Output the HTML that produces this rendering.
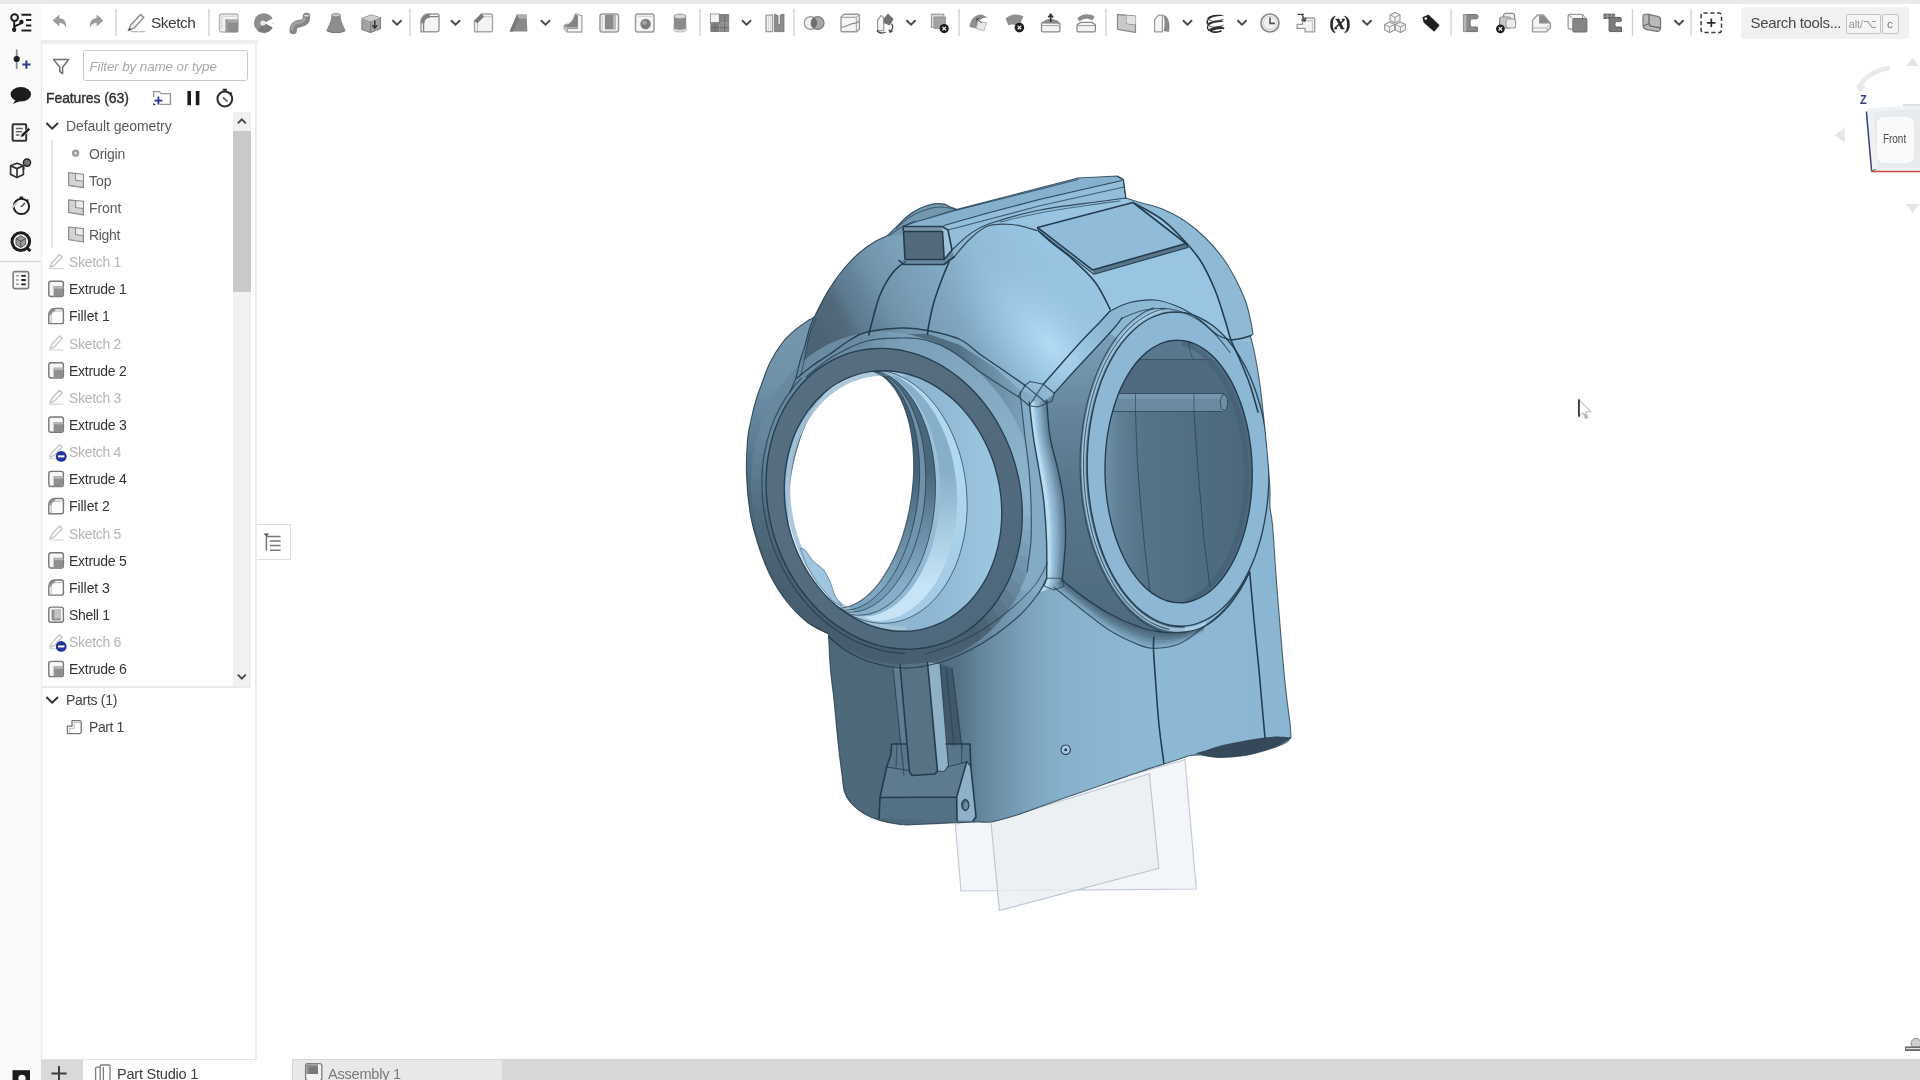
<!DOCTYPE html>
<html lang="en"><head><meta charset="utf-8"><title>Part Studio 1</title>
<style>
html,body{margin:0;padding:0;width:1920px;height:1080px;overflow:hidden;background:#fff;
 font-family:"Liberation Sans",sans-serif;color:#3b3b3b;}
*{box-sizing:border-box;}
.abs{position:absolute;}
#topstrip{position:absolute;left:0;top:0;width:1920px;height:5px;background:linear-gradient(#e9e9e9 0,#e9e9e9 70%,#f4f4f4 100%);}
#sidebar{position:absolute;left:0;top:4px;width:41px;height:1076px;background:#fafafa;}
#toolbar{position:absolute;left:41px;top:4px;width:1879px;height:38px;background:#fff;}
#tbshadow{position:absolute;left:41px;top:41px;width:1879px;height:3px;background:linear-gradient(#e9e9e9,#f6f6f6 60%,#fff);}
#panel{position:absolute;left:41px;top:44px;width:216px;height:1016px;background:#fff;border-left:1px solid #ededed;border-right:2px solid #ececec;}
#tabs{position:absolute;left:41px;top:1059px;width:1879px;height:21px;background:#d8d8d8;}
.t{position:absolute;white-space:nowrap;font-size:14px;line-height:16px;transform-origin:0 50%;}
.row{position:absolute;left:0;height:27px;}
.g{color:#b4b4b4;}
.m{color:#5a5a5a;}
.d{color:#333;}
.sep{position:absolute;top:7px;width:1px;height:26px;background:#d6d6d6;}
.ic{position:absolute;overflow:visible;}
.t{filter:blur(.38px);}
svg.abs{filter:blur(.38px);}
#model{filter:none;}/*blurfx*/
</style></head><body>
<div id="topstrip"></div>
<div id="sidebar"></div>
<div class="abs" style="left:41px;top:4px;width:1px;height:1076px;background:#ebebeb"></div>
<svg class="abs" style="left:0;top:0" width="42" height="1080" viewBox="0 0 42 1080" fill="none">
 <!-- versions / branch icon -->
 <g stroke="#1f1f1f" stroke-width="2" stroke-linecap="round">
  <circle cx="14.6" cy="17.6" r="3.4" fill="#fafafa"/>
  <path d="M14.2 21.2V29.5M14.4 27.5C14.6 24.5 20.5 25.5 21.3 22.4"/>
  <circle cx="14.2" cy="29.8" r="1.2" fill="#1f1f1f"/><circle cx="21.4" cy="22" r="1.2" fill="#1f1f1f"/>
  <path d="M21.5 14.7H31.3M26 20.1H31.3M26 25.6H31.3M21.5 30.6H31.3" stroke-linecap="butt"/>
 </g>
 <!-- insert point icon -->
 <path d="M16.7 49.5V69" stroke="#8c8c8c" stroke-width="1.8"/>
 <circle cx="16.7" cy="59" r="3.1" fill="#1f1f1f"/>
 <path d="M22.3 64.6H30.5M26.4 60.5V68.7" stroke="#2c3a8f" stroke-width="2"/>
 <!-- comment bubble -->
 <ellipse cx="20.8" cy="94.3" rx="10.2" ry="7.2" fill="#1c1c1c"/>
 <path d="M16.5 99L12.8 104L21.5 100.5Z" fill="#1c1c1c"/>
 <!-- notes doc with pencil -->
 <path d="M13.6 124.2H25.2a1 1 0 0 1 1 1V139.8a1 1 0 0 1-1 1H13.6a1 1 0 0 1-1-1V125.2a1 1 0 0 1 1-1Z" stroke="#333" stroke-width="2"/>
 <path d="M15.8 128.5H23M15.8 131.8H22M15.8 135H19.5" stroke="#666" stroke-width="1.4"/>
 <path d="M20.3 137.5L21.3 134.2L28.3 127.6L30.3 129.6L23.4 136.5Z" fill="#1c1c1c" stroke="#fafafa" stroke-width=".6"/>
 <!-- cube with question -->
 <path d="M17 163.2L23.4 165.8V174.4L17 177.6L10.6 174.4V165.8Z M10.6 165.8L17 168.6L23.4 165.8M17 168.6V177.6" stroke="#333" stroke-width="1.7" stroke-linejoin="round"/>
 <circle cx="27" cy="162.6" r="3.6" fill="#777" stroke="#222" stroke-width="1.4"/>
 <path d="M24.3 167.3L22.8 170" stroke="#333" stroke-width="1.6"/>
 <!-- stopwatch -->
 <circle cx="21.4" cy="206.4" r="7.7" stroke="#1f1f1f" stroke-width="2"/>
 <path d="M19.6 197.3H23.2M21.4 197.5V199M26.9 199.6L28.2 200.9" stroke="#1f1f1f" stroke-width="1.8"/>
 <path d="M21 207L25 203" stroke="#555" stroke-width="1.6"/>
 <path d="M12 208L16.5 203" stroke="#c8c8c8" stroke-width="2.2"/>
 <!-- search cube -->
 <circle cx="20.8" cy="241.6" r="8.8" stroke="#1c1c1c" stroke-width="3" fill="#fafafa"/>
 <path d="M27 248L30.4 251" stroke="#1c1c1c" stroke-width="3"/>
 <path d="M20.8 235.8L25.6 238.5V244.5L20.8 247.4L16 244.5V238.5Z" fill="#9a9a9a" stroke="#555" stroke-width="1"/>
 <path d="M16 238.5L20.8 241.3L25.6 238.5M20.8 241.3V247.4" stroke="#444" stroke-width=".9"/>
 <!-- divider -->
 <path d="M0 261.5H41" stroke="#dcdcdc" stroke-width="1.4"/>
 <!-- list icon -->
 <rect x="13.2" y="271.6" width="15.4" height="17" rx="1.6" stroke="#808080" stroke-width="1.7" fill="#fafafa"/>
 <path d="M21.3 275.8H25.8M21.3 280H25.8M21.3 284.3H25.8" stroke="#222" stroke-width="1.8"/>
 <path d="M16 275.8H18.8M16 280H18.8M16 284.3H18.8" stroke="#999" stroke-width="1.4"/>
 <!-- camera bottom -->
 <path d="M12.5 1070.2H30V1080H12.5Z" fill="#1c1c1c"/>
 <circle cx="22" cy="1078.4" r="4.3" fill="#fafafa" stroke="#1c1c1c" stroke-width="1.3"/>
</svg>
<div id="toolbar"></div>
<svg class="abs" style="left:0;top:0" width="1920" height="46" viewBox="0 0 1920 46" fill="none">
<path d="M52.6 20.4L59.4 14.6V18.2C64.6 18.2 66.6 22 66 28.4C64.8 24.4 63 23 59.4 23V26.4Z" fill="#9b9b9b"/>
<path d="M103.4 20.4L96.6 14.6V18.2C91.4 18.2 89.4 22 90 28.4C91.2 24.4 93 23 96.6 23V26.4Z" fill="#9b9b9b"/>
<path d="M128.4 30.6L130.6 25.2L140.6 14.6L143.8 17.4L134 28.2Z" stroke="#8a8a8a" stroke-width="1.4" fill="#fafafa" stroke-linejoin="round"/><path d="M128.4 30.6L129.6 27.6L131.6 29.4Z" fill="#555"/><path d="M131 31.6H145" stroke="#bdbdbd" stroke-width="1.4"/>
<path d="M116 9V36" stroke="#d2d2d2" stroke-width="1.4"/>
<path d="M209 9V36" stroke="#d2d2d2" stroke-width="1.4"/>
<g transform="translate(217,11)"><rect x="2.5" y="3" width="18.5" height="18" rx="2.2" fill="#f4f4f4" stroke="#b4b4b4" stroke-width="1.3"/><path d="M5 5.2H18.8M4.8 5.2V18.5" stroke="#d9d9d9" stroke-width="1.4"/><rect x="8.6" y="8.6" width="12.6" height="12.6" fill="#8d8d8d"/><rect x="8.6" y="8.6" width="12.6" height="3" fill="#a9a9a9"/><rect x="8.6" y="8.6" width="2.2" height="12.6" fill="#9c9c9c"/></g>
<g transform="translate(252,11)"><path d="M12 12L20.6 7.6A9.8 9.8 0 1 0 20.6 16.4Z" fill="#8d8d8d"/><path d="M12 12L20.6 16.4A9.8 9.8 0 0 1 6 19.7Z" fill="#7a7a7a"/><circle cx="11" cy="12" r="2.6" fill="#e9e9e9"/><path d="M13 12H22" stroke="#cfcfcf" stroke-width="1.2" stroke-dasharray="2 1.4"/><path d="M12 12L19 9.5V14.5Z" fill="#fff"/></g>
<g transform="translate(288,11)"><path d="M5.2 19.5C5.2 8 18.5 17 18.5 5.5" stroke="#858585" stroke-width="7.4" fill="none" stroke-linecap="round"/><path d="M5.2 19.5C5.2 8 18.5 17 18.5 5.5" stroke="#a3a3a3" stroke-width="2.4" fill="none" stroke-linecap="round" transform="translate(-1.2,-1)"/><ellipse cx="18.6" cy="4.6" rx="3.2" ry="1.7" fill="#d2d2d2" stroke="#6f6f6f" stroke-width=".8"/></g>
<g transform="translate(324,11)"><path d="M7.4 4.2C7.4 10 4.6 14 2.6 19.4C5 22 19 22 21.4 19.4C19.4 14 16.6 10 16.6 4.2Z" fill="#8d8d8d"/><ellipse cx="12" cy="4.3" rx="4.6" ry="1.8" fill="#c4c4c4" stroke="#6f6f6f" stroke-width=".7"/><path d="M2.6 19.4C5 22.4 19 22.4 21.4 19.4" stroke="#6f6f6f" stroke-width="1" fill="none"/></g>
<g transform="translate(359,11)"><path d="M3 7.5L12 4L21.5 6.8V17.5L11.5 21.6L3 18.4Z" fill="#a6a6a6" stroke="#7c7c7c" stroke-width="1.1" stroke-linejoin="round"/><path d="M3 7.5L11.6 10.4L21.5 6.8M11.6 10.4V21.6" stroke="#7c7c7c" stroke-width="1" fill="none"/><path d="M3 7.5L12 4L21.5 6.8L11.6 10.4Z" fill="#cfcfcf"/><path d="M15.8 9.5V16.4M13.4 14.2L15.8 17L18.2 14.2" stroke="#333" stroke-width="1.5" fill="none"/></g>
<path d="M392.4 20.2L397 24.6L401.6 20.2" stroke="#4a4a4a" stroke-width="1.9" fill="none"/>
<path d="M410 9V36" stroke="#d2d2d2" stroke-width="1.4"/>
<g transform="translate(418,11)"><path d="M3 20.8V10.5A7.5 7.5 0 0 1 10.5 3H19a2 2 0 0 1 2 2V18.8a2 2 0 0 1-2 2Z" fill="#f4f4f4" stroke="#9a9a9a" stroke-width="1.5"/><path d="M5.6 20V11.5A6 6 0 0 1 11.6 5.6H20.5" stroke="#7f7f7f" stroke-width="1.3" fill="none"/><path d="M2.6 12.4A9 9 0 0 1 11.6 2.8L12 6.4A5.6 5.6 0 0 0 6.4 12Z" fill="#808080"/></g>
<path d="M450.9 20.2L455.5 24.6L460.1 20.2" stroke="#4a4a4a" stroke-width="1.9" fill="none"/>
<g transform="translate(471.5,11)"><path d="M3 20.8V10L10 3H19a2 2 0 0 1 2 2V18.8a2 2 0 0 1-2 2Z" fill="#f4f4f4" stroke="#a8a8a8" stroke-width="1.4" stroke-linejoin="round"/><path d="M6 20V11.6L11.8 5.8H20.5" stroke="#bdbdbd" stroke-width="1.1" fill="none"/><path d="M2.6 10L10 2.6L12.6 5.4L5.8 12.2Z" fill="#7a7a7a"/></g>
<g transform="translate(508,11)"><path d="M9 3.4H18.6L19.4 20.6H1.6Z" fill="#8a8a8a"/><path d="M9 3.4H18.6L18.8 7.4H7.2Z" fill="#b0b0b0"/><path d="M9 3.4L1.6 20.6H5.2L11 7.4Z" fill="#7a7a7a"/></g>
<path d="M540.9 20.2L545.5 24.6L550.1 20.2" stroke="#4a4a4a" stroke-width="1.9" fill="none"/>
<g transform="translate(561.5,11)"><path d="M13.4 2.6L20.4 4.6V21H5.8L2.6 17.6V14.6L5.6 12.6" fill="#f4f4f4" stroke="#a8a8a8" stroke-width="1.3" stroke-linejoin="round"/><path d="M13 3.4C12.4 9 8.4 12.6 3.4 14.6L6.2 16.6H16.4V4.4Z" fill="#838383"/><path d="M2.8 14.8L5.8 17.4H16.6M5.8 17.4V20.6" stroke="#9a9a9a" stroke-width="1.1" fill="none"/></g>
<g transform="translate(597.5,11)"><rect x="2.5" y="3" width="18.5" height="18" rx="2.2" fill="#f4f4f4" stroke="#9a9a9a" stroke-width="1.5"/><rect x="7.4" y="3.8" width="10.6" height="14.6" fill="#8a8a8a"/><rect x="15.6" y="3.8" width="2.4" height="14.6" fill="#b9b9b9"/><path d="M4.8 4.6V19.8M7.4 18.8H18.4" stroke="#cfcfcf" stroke-width="1.2"/></g>
<g transform="translate(633,11)"><rect x="2.5" y="3" width="18.5" height="18" rx="2.2" fill="#f4f4f4" stroke="#9a9a9a" stroke-width="1.5"/><path d="M5 5.4H19" stroke="#d5d5d5" stroke-width="1.3"/><circle cx="12.6" cy="13" r="5.2" fill="#7d7d7d"/><circle cx="11.4" cy="11.8" r="2.2" fill="#a9a9a9"/></g>
<g transform="translate(668,11)"><path d="M5.8 5.4V18.6C5.8 21.6 18.2 21.6 18.2 18.6V5.4Z" fill="#8a8a8a"/><ellipse cx="12" cy="5.4" rx="6.2" ry="2.3" fill="#d9d9d9" stroke="#8a8a8a" stroke-width=".8"/><path d="M5.8 16.6C5.8 19.6 18.2 19.6 18.2 16.6V18.6C18.2 21.8 5.8 21.8 5.8 18.6Z" fill="#ededed" stroke="#a0a0a0" stroke-width=".7"/></g>
<path d="M700 9V36" stroke="#d2d2d2" stroke-width="1.4"/>
<g transform="translate(708,11)"><rect x="2.4" y="3" width="9" height="8.6" fill="#f4f4f4" stroke="#9a9a9a" stroke-width="1"/><rect x="12" y="3" width="9.2" height="8.6" fill="#858585"/><rect x="2.4" y="12.2" width="9" height="8.8" fill="#7d7d7d"/><rect x="12" y="12.2" width="9.2" height="8.8" fill="#8f8f8f"/><path d="M2.4 11.9H21.2M11.7 3V21M2.4 16.6H21.2M16.6 3V21M7 12V21" stroke="#5c5c5c" stroke-width=".8" stroke-opacity=".7"/></g>
<path d="M741.9 20.2L746.5 24.6L751.1 20.2" stroke="#4a4a4a" stroke-width="1.9" fill="none"/>
<g transform="translate(763,11)"><path d="M3 4.2H9.6V20.6H3Z" fill="#f4f4f4" stroke="#9a9a9a" stroke-width="1.3"/><path d="M11.6 3.2L15 4.6V13L17.2 14V4L21 3.2V20.6H11.6Z" fill="#8d8d8d" stroke="#6f6f6f" stroke-width=".8"/><path d="M5.4 5V19.6M7.4 5V19.6" stroke="#cfcfcf" stroke-width=".9"/></g>
<path d="M794 9V36" stroke="#d2d2d2" stroke-width="1.4"/>
<g transform="translate(802,11)"><circle cx="8.6" cy="12" r="6.4" fill="#f0f0f0" stroke="#9a9a9a" stroke-width="1.3"/><circle cx="15.6" cy="12" r="6.4" fill="#a6a6a6" stroke="#808080" stroke-width="1.3"/><path d="M12.1 6.6A6.4 6.4 0 0 1 12.1 17.4A6.4 6.4 0 0 1 12.1 6.6Z" fill="#6e6e6e"/></g>
<g transform="translate(838,11)"><path d="M3 6L6 3.2H20a1.4 1.4 0 0 1 1.4 1.4V18L18.6 20.8H4.4A1.4 1.4 0 0 1 3 19.4Z" fill="#f4f4f4" stroke="#9a9a9a" stroke-width="1.4" stroke-linejoin="round"/><path d="M3.4 6.4H18.4V20.4M18.4 6.4L21 3.8" stroke="#a9a9a9" stroke-width="1.1" fill="none"/><path d="M3.4 16.2C9 16.4 12 11.6 18.4 12.2L21.2 10" stroke="#8a8a8a" stroke-width="1.1" fill="none"/></g>
<g transform="translate(873,11)"><path d="M4.6 9.2L8.2 4.4L10.8 6.6V19.6H4.6Z" fill="#f4f4f4" stroke="#9a9a9a" stroke-width="1.2" stroke-linejoin="round"/><path d="M10.4 7.8L15 2.6L20.6 8L16.8 14.4L10.6 12Z" fill="#727272"/><path d="M4 19.5C6 22.5 10 22.5 12.6 21M18.6 12.6C20.4 15.4 19.6 18.6 17.4 20.4" stroke="#4c4c4c" stroke-width="1.4" fill="none"/><path d="M16 18.6L17 21.2L19.6 20.2" stroke="#4c4c4c" stroke-width="1.3" fill="none"/></g>
<path d="M906.4 20.2L911 24.6L915.6 20.2" stroke="#4a4a4a" stroke-width="1.9" fill="none"/>
<g transform="translate(928,11)"><rect x="3.4" y="3.2" width="12.4" height="13" fill="#d9d9d9" stroke="#9a9a9a" stroke-width="1.1"/><rect x="6" y="6" width="11.4" height="11.4" fill="#a2a2a2" stroke="#8a8a8a" stroke-width=".8"/><circle cx="16.2" cy="17.6" r="4.6" fill="#1e1e1e"/><path d="M14.5 15.900000000000002L17.9 19.3M17.9 15.900000000000002L14.5 19.3" stroke="#f3f3f3" stroke-width="1.3"/></g>
<path d="M959 9V36" stroke="#d2d2d2" stroke-width="1.4"/>
<g transform="translate(967,11)"><path d="M2.6 16C3 8 8.4 3 15 3.4L20.6 6.6C14 6.4 10 11 9.4 17.4Z" fill="#8f8f8f"/><path d="M11 10.6L19.6 11.8L17 19.8L9.6 17.6Z" fill="#e9e9e9" stroke="#b4b4b4" stroke-width=".9"/><path d="M10.6 8.4L15.4 12.6" stroke="#fff" stroke-width="2"/><path d="M9.6 7.6L15 12.2M9.6 7.6L10 10.6M9.6 7.6L12.6 7.6" stroke="#555" stroke-width="1.1" fill="none"/></g>
<g transform="translate(1003,11)"><path d="M2.6 7.6C8 2.6 14.6 2.4 20.6 5.6L15.6 15.6C11 13 7.4 13 5.4 14.4Z" fill="#8f8f8f"/><circle cx="16.4" cy="16.6" r="4.8" fill="#1e1e1e"/><path d="M14.7 14.900000000000002L18.099999999999998 18.3M18.099999999999998 14.900000000000002L14.7 18.3" stroke="#f3f3f3" stroke-width="1.3"/></g>
<g transform="translate(1038.5,11)"><path d="M3 12.4L7.6 9.6H17.8L21.4 12.6V19.6A1.2 1.2 0 0 1 20.2 20.8H4.2A1.2 1.2 0 0 1 3 19.6Z" fill="#f4f4f4" stroke="#8a8a8a" stroke-width="1.3" stroke-linejoin="round"/><path d="M3.4 14.6H21" stroke="#a0a0a0" stroke-width="1"/><path d="M4 12.6L8 8.6C11 7 15 7.4 17.6 9.6L21 12.8Z" fill="#8c8c8c"/><path d="M12.2 11V4M9.8 6.4L12.2 3.4L14.6 6.4" stroke="#333" stroke-width="1.6" fill="none"/></g>
<g transform="translate(1074,11)"><path d="M3.4 7.4C8 2.4 16 2.4 20.6 5.4L18.4 9.4C14 7 9 7.4 5.6 10.4Z" fill="#8c8c8c"/><path d="M3 14L6.4 11.4H18L21.4 13.8V19.6A1.2 1.2 0 0 1 20.2 20.8H4.2A1.2 1.2 0 0 1 3 19.6Z" fill="#f4f4f4" stroke="#8a8a8a" stroke-width="1.3" stroke-linejoin="round"/><path d="M3.4 14.6H21" stroke="#9a9a9a" stroke-width="1"/></g>
<path d="M1106 9V36" stroke="#d2d2d2" stroke-width="1.4"/>
<g transform="translate(1114.5,11)"><path d="M3 3.4L21 5.2V21.4L3 18.4Z" fill="#c9c9c9" stroke="#8a8a8a" stroke-width="1.2" stroke-linejoin="round"/><path d="M12 4.4V12.6L21 13.6" stroke="#8a8a8a" stroke-width="1.1" fill="none"/><path d="M12 4.4L21 5.2V13.6L12 12.6Z" fill="#e3e3e3"/></g>
<g transform="translate(1150,11)"><path d="M4.6 8.4L8.4 4.2H12.4V20.8H4.6Z" fill="#f4f4f4" stroke="#9a9a9a" stroke-width="1.2" stroke-linejoin="round"/><path d="M13 3.4C18.4 5.4 20.8 12 18.8 21L13.6 20C15.4 13 14.6 8 13 3.4Z" fill="#8a8a8a"/></g>
<path d="M1182.9 20.2L1187.5 24.6L1192.1 20.2" stroke="#4a4a4a" stroke-width="1.9" fill="none"/>
<g transform="translate(1203.5,11)"><path d="M3.6 7.6C5 3.4 18 2.6 20.6 5.2C17 4.6 8 5.4 5.6 8.6C9 11 17 9.6 20.4 7.6C19.4 11.4 7 12.4 3.6 7.6Z" fill="#2f2f2f"/><path d="M3.6 13.6C5 9.6 18 8.8 20.6 11.2C17 10.8 8 11.6 5.6 14.6C9 17 17 15.6 20.4 13.6C19.4 17.4 7 18.4 3.6 13.6Z" fill="#2f2f2f"/><path d="M5.6 19.6C8 16.4 17 15.8 20.6 17.4C17 17 9 17.6 7.4 20.2C10 21.8 15 21.4 18 19.8" fill="none" stroke="#2f2f2f" stroke-width="1.7"/><path d="M4.4 8.6C3.4 10.6 3.6 12.6 4.6 13.4M4.4 14.6C3.4 16.6 4.4 19 5.8 19.8" stroke="#2f2f2f" stroke-width="1.4" fill="none"/></g>
<path d="M1237.4 20.2L1242 24.6L1246.6 20.2" stroke="#4a4a4a" stroke-width="1.9" fill="none"/>
<g transform="translate(1258,11)"><circle cx="12" cy="12" r="9" fill="#f1f1f1" stroke="#8a8a8a" stroke-width="1.7"/><circle cx="12" cy="12" r="6.6" fill="none" stroke="#cfcfcf" stroke-width="1"/><path d="M12 6.4V12.4H17" stroke="#555" stroke-width="1.6" fill="none"/></g>
<g transform="translate(1293.5,11)"><path d="M9 7H20a1.2 1.2 0 0 1 1.2 1.2V20.8H11.6V17.4H3.6V13.4H9Z" fill="#f4f4f4" stroke="#9a9a9a" stroke-width="1.3" stroke-linejoin="round"/><path d="M11 9.6H19V20.4" stroke="#c8c8c8" stroke-width="1.1" fill="none"/><path d="M4 3.4H10.6M8.6 3.6L11 9.6M8 8.6L11.2 10.2L12.4 6.8" stroke="#4a4a4a" stroke-width="1.4" fill="none"/></g>
<path d="M1362.4 20.2L1367 24.6L1371.6 20.2" stroke="#4a4a4a" stroke-width="1.9" fill="none"/>
<g transform="translate(1383,11)"><g transform="translate(7,1.4)"><path d="M5 0L10 2.4V8L5 10.6L0 8V2.4Z" fill="#f1f1f1" stroke="#9a9a9a" stroke-width="1.1" stroke-linejoin="round"/><path d="M0 2.4L5 5L10 2.4M5 5V10.6" stroke="#9a9a9a" stroke-width="1" fill="none"/></g><g transform="translate(1.6,11)"><path d="M5 0L10 2.4V8L5 10.6L0 8V2.4Z" fill="#f1f1f1" stroke="#9a9a9a" stroke-width="1.1" stroke-linejoin="round"/><path d="M0 2.4L5 5L10 2.4M5 5V10.6" stroke="#9a9a9a" stroke-width="1" fill="none"/></g><g transform="translate(12.4,11)"><path d="M5 0L10 2.4V8L5 10.6L0 8V2.4Z" fill="#f1f1f1" stroke="#9a9a9a" stroke-width="1.1" stroke-linejoin="round"/><path d="M0 2.4L5 5L10 2.4M5 5V10.6" stroke="#9a9a9a" stroke-width="1" fill="none"/></g></g>
<g transform="translate(1419,11)"><path d="M3.4 6.2L9.4 3.6L20.6 14.2L15.2 20.8L4.6 11.6Z" fill="#1f1f1f"/><circle cx="6.8" cy="7.6" r="1.3" fill="#eee"/></g>
<path d="M1451 9V36" stroke="#d2d2d2" stroke-width="1.4"/>
<g transform="translate(1459,11)"><path d="M4.4 3.6H17.4C19.4 3.6 19.6 7.8 17.4 7.8H12.6C10.6 7.8 10.6 16 12.6 16H18.4V20.6H4.4Z" fill="#8a8a8a" stroke="#6e6e6e" stroke-width="1"/><path d="M4.4 3.6H7.4V20.6H4.4Z" fill="#b5b5b5"/></g>
<g transform="translate(1494,11)"><rect x="9.6" y="2.4" width="11" height="11" rx="2" fill="#ededed" stroke="#8a8a8a" stroke-width="1.2"/><rect x="5.6" y="6" width="11" height="11" rx="2" fill="#c9c9c9" stroke="#8a8a8a" stroke-width="1.2"/><rect x="12" y="8" width="9.6" height="9" rx="2" fill="#ededed" stroke="#9a9a9a" stroke-width="1.1"/><circle cx="6.4" cy="17.8" r="4.4" fill="#1e1e1e"/><path d="M4.7 16.1L8.1 19.5M8.1 16.1L4.7 19.5" stroke="#f3f3f3" stroke-width="1.3"/></g>
<g transform="translate(1529.5,11)"><path d="M3 9.4L8 4H14L21 12.4V17L17 20.8H3Z" fill="#f4f4f4" stroke="#9a9a9a" stroke-width="1.3" stroke-linejoin="round"/><path d="M9.6 4.6H14L20.6 12.6H9.6Z" fill="#8c8c8c"/><path d="M3.4 17H17.4L20.6 13.4M17.4 17V20.4" stroke="#b3b3b3" stroke-width="1" fill="none"/></g>
<g transform="translate(1565.5,11)"><rect x="2.6" y="3.4" width="14.6" height="14.6" rx="1.6" fill="#f4f4f4" stroke="#9a9a9a" stroke-width="1.3"/><rect x="7.4" y="7.6" width="14" height="13.4" rx="1" fill="#858585" stroke="#6d6d6d" stroke-width="1"/><path d="M2.8 3.6L7.4 7.6M17 3.6L21.4 7.6" stroke="#9a9a9a" stroke-width="1"/></g>
<g transform="translate(1600.5,11)"><path d="M3 2.6H14.6V8H3Z" fill="#6f6f6f"/><path d="M3 5.2H14.6M7 2.6V8M11 2.6V8" stroke="#a9a9a9" stroke-width=".8"/><path d="M8.6 6.4H19.6C21.6 6.4 21.6 10.6 19.6 10.6H15.6C14 10.6 14 16 15.6 16H21V20.6H9.6C8 20.6 8.6 18 8.6 16Z" fill="#7c7c7c" stroke="#5e5e5e" stroke-width="1"/></g>
<path d="M1632.5 9V36" stroke="#d2d2d2" stroke-width="1.4"/>
<g transform="translate(1640,11)"><path d="M3 4.6C3 3 8 3 9 3.4L18.4 5.6C20.4 6 20.6 8 20.6 9V16.6C20.6 19 19 20.8 17 20.4L7 18.6C4 18 3 16 3 14Z" fill="#b9b9b9" stroke="#777" stroke-width="1.2"/><path d="M9 3.8V12.4C9 14 10 15 12 15.4L20.4 17" stroke="#6b6b6b" stroke-width="1.3" fill="none"/><path d="M9 12.4L3.4 15" stroke="#6b6b6b" stroke-width="1.1"/></g>
<path d="M1674.4 20.2L1679 24.6L1683.6 20.2" stroke="#4a4a4a" stroke-width="1.9" fill="none"/>
<path d="M1691 9V36" stroke="#d2d2d2" stroke-width="1.4"/>
<g transform="translate(1699.5,11)"><rect x="1.6" y="2" width="20.4" height="19.6" rx="2.4" fill="none" stroke="#3c3c3c" stroke-width="1.5" stroke-dasharray="4.2 2.6"/><path d="M7.6 11.8H16M11.8 7.6V16" stroke="#2b2b2b" stroke-width="1.7"/></g>
</svg>
<div class="t d" style="left:151px;top:14px;font-size:15.5px;line-height:18px;color:#3a3a3a;letter-spacing:-.5px">Sketch</div>
<div class="t" style="left:1329.5px;top:10.5px;font-family:'Liberation Serif',serif;font-style:italic;font-weight:bold;font-size:20.5px;line-height:22px;color:#262626;letter-spacing:-.9px;-webkit-text-stroke:.45px #262626"><span style="font-style:normal;font-size:18.5px;-webkit-text-stroke:.25px #262626">(</span>x<span style="font-style:normal;font-size:18.5px;-webkit-text-stroke:.25px #262626">)</span></div>
<div class="abs" style="left:1741px;top:7px;width:168px;height:32px;background:#f1f1f1;border-radius:3px"></div>
<div class="t" style="left:1750.5px;top:14px;font-size:15px;line-height:18px;color:#4a4a4a;letter-spacing:-.35px">Search tools...</div>
<div class="abs" style="left:1845.5px;top:14px;width:35.5px;height:19.5px;border:1.4px solid #c4c4c4;border-radius:2px;background:#f5f5f5"></div>
<div class="abs" style="left:1881.5px;top:14px;width:17px;height:19.5px;border:1.4px solid #c4c4c4;border-radius:2px;background:#f5f5f5"></div>
<div class="t" style="left:1848.5px;top:16.5px;font-size:11.5px;line-height:14px;color:#9a9a9a;letter-spacing:-.2px">alt/⌥</div>
<div class="t" style="left:1887px;top:16.5px;font-size:11.5px;line-height:14px;color:#777">c</div>
<div id="panel"></div>
<div class="abs" style="left:41px;top:40px;width:217px;height:4px;background:linear-gradient(#f0f0f0,#ebebeb 50%,#f6f6f6)"></div>
<div class="abs" style="left:82.5px;top:50px;width:165px;height:30.5px;border:1.5px solid #c9c9c9;border-radius:3px;background:#fff"></div>
<div class="t" style="left:89.5px;top:58.5px;font-size:13.4px;font-style:italic;color:#a9a9a9;letter-spacing:-.1px">Filter by name or type</div>
<div class="t" id="feat" style="left:46px;top:90px;font-size:14px;color:#2e2e2e;letter-spacing:-.1px;-webkit-text-stroke:.35px #2e2e2e">Features (63)</div>
<div class="t m" style="left:66px;top:118.3px;letter-spacing:-0.06px">Default geometry</div>
<div class="t m" style="left:89px;top:145.5px;letter-spacing:-0.23px">Origin</div>
<div class="t m" style="left:89px;top:172.6px;letter-spacing:0px">Top</div>
<div class="t m" style="left:89px;top:199.8px;letter-spacing:-0.05px">Front</div>
<div class="t m" style="left:89px;top:226.9px;letter-spacing:-0.3px">Right</div>
<div class="t g" style="left:69px;top:254.1px;letter-spacing:-0.31px">Sketch 1</div>
<div class="t d" style="left:69px;top:281.2px;letter-spacing:-0.28px">Extrude 1</div>
<div class="t d" style="left:69px;top:308.3px;letter-spacing:-0.06px">Fillet 1</div>
<div class="t g" style="left:69px;top:335.5px;letter-spacing:-0.31px">Sketch 2</div>
<div class="t d" style="left:69px;top:362.7px;letter-spacing:-0.28px">Extrude 2</div>
<div class="t g" style="left:69px;top:389.8px;letter-spacing:-0.31px">Sketch 3</div>
<div class="t d" style="left:69px;top:416.9px;letter-spacing:-0.28px">Extrude 3</div>
<div class="t g" style="left:69px;top:444.1px;letter-spacing:-0.31px">Sketch 4</div>
<div class="t d" style="left:69px;top:471.2px;letter-spacing:-0.28px">Extrude 4</div>
<div class="t d" style="left:69px;top:498.4px;letter-spacing:-0.06px">Fillet 2</div>
<div class="t g" style="left:69px;top:525.5px;letter-spacing:-0.31px">Sketch 5</div>
<div class="t d" style="left:69px;top:552.7px;letter-spacing:-0.28px">Extrude 5</div>
<div class="t d" style="left:69px;top:579.8px;letter-spacing:-0.06px">Fillet 3</div>
<div class="t d" style="left:69px;top:607.0px;letter-spacing:-0.3px">Shell 1</div>
<div class="t g" style="left:69px;top:634.1px;letter-spacing:-0.31px">Sketch 6</div>
<div class="t d" style="left:69px;top:661.3px;letter-spacing:-0.28px">Extrude 6</div>
<div class="t m" style="left:66px;top:691.8px;color:#444;letter-spacing:-.29px">Parts (1)</div>
<div class="t m" style="left:89px;top:718.8px;color:#444;letter-spacing:-.4px">Part 1</div>
<div class="abs" style="left:233px;top:112px;width:17.6px;height:574px;background:#f1f1f1"></div>
<div class="abs" style="left:233px;top:130.6px;width:17.6px;height:161.4px;background:#c9c9c9"></div>
<div class="abs" style="left:42px;top:685.5px;width:209px;height:2px;background:#ebebeb"></div>
<svg class="abs" style="left:0;top:0" width="260" height="760" viewBox="0 0 260 760" fill="none"><path d="M46.4 123.0L52.2 128.6L58 123.0" stroke="#333" stroke-width="2" fill="none"/>
<circle cx="75.6" cy="153.15" r="3.6" fill="#9a9a9a"/><circle cx="75.6" cy="153.15" r="1.3" fill="#e6e6e6"/>
<path d="M68.6 172.70000000000002L83.4 174.3V187.70000000000002L68.6 185.3Z" fill="#d4d4d4" stroke="#8c8c8c" stroke-width="1.2" stroke-linejoin="round"/><path d="M75.6 173.50000000000003V180.3L83.4 181.3" stroke="#8c8c8c" stroke-width="1.1" fill="none"/><path d="M76.2 174.10000000000002L82.8 174.9V180.60000000000002L76.2 179.8Z" fill="#ececec"/>
<path d="M68.6 199.85L83.4 201.45V214.85L68.6 212.45Z" fill="#d4d4d4" stroke="#8c8c8c" stroke-width="1.2" stroke-linejoin="round"/><path d="M75.6 200.65V207.45L83.4 208.45" stroke="#8c8c8c" stroke-width="1.1" fill="none"/><path d="M76.2 201.25L82.8 202.04999999999998V207.75L76.2 206.95Z" fill="#ececec"/>
<path d="M68.6 227.0L83.4 228.6V242.0L68.6 239.6Z" fill="#d4d4d4" stroke="#8c8c8c" stroke-width="1.2" stroke-linejoin="round"/><path d="M75.6 227.8V234.6L83.4 235.6" stroke="#8c8c8c" stroke-width="1.1" fill="none"/><path d="M76.2 228.4L82.8 229.2V234.9L76.2 234.1Z" fill="#ececec"/>
<path d="M50 267.35L51.8 262.75L59.6 254.55L62.2 256.95L54.4 265.35Z" stroke="#c4c4c4" stroke-width="1.3" fill="#fdfdfd" stroke-linejoin="round"/><path d="M49 268.55H63.4" stroke="#d9d9d9" stroke-width="1.3"/>
<rect x="48.8" y="281.29999999999995" width="14.6" height="15.2" rx="2.2" fill="#f6f6f6" stroke="#777" stroke-width="1.4"/><rect x="53.6" y="286.29999999999995" width="9.6" height="10" fill="#8f8f8f"/><rect x="53.6" y="286.29999999999995" width="9.6" height="2.4" fill="#b6b6b6"/>
<path d="M48.8 323.65000000000003V314.45A6 6 0 0 1 54.8 308.45H61.4a2 2 0 0 1 2 2V321.65000000000003a2 2 0 0 1-2 2Z" fill="#fbfbfb" stroke="#777" stroke-width="1.4"/><path d="M49.4 315.05A6.4 6.4 0 0 1 55 309.05L55.6 311.05A4.6 4.6 0 0 0 51.4 315.45Z" fill="#8a8a8a"/><path d="M51.2 323.05V315.65000000000003A4.6 4.6 0 0 1 55.8 311.05H63" stroke="#b9b9b9" stroke-width="1" fill="none"/>
<path d="M50 348.8L51.8 344.2L59.6 336.0L62.2 338.4L54.4 346.8Z" stroke="#c4c4c4" stroke-width="1.3" fill="#fdfdfd" stroke-linejoin="round"/><path d="M49 350.0H63.4" stroke="#d9d9d9" stroke-width="1.3"/>
<rect x="48.8" y="362.75" width="14.6" height="15.2" rx="2.2" fill="#f6f6f6" stroke="#777" stroke-width="1.4"/><rect x="53.6" y="367.75" width="9.6" height="10" fill="#8f8f8f"/><rect x="53.6" y="367.75" width="9.6" height="2.4" fill="#b6b6b6"/>
<path d="M50 403.1L51.8 398.5L59.6 390.3L62.2 392.7L54.4 401.1Z" stroke="#c4c4c4" stroke-width="1.3" fill="#fdfdfd" stroke-linejoin="round"/><path d="M49 404.3H63.4" stroke="#d9d9d9" stroke-width="1.3"/>
<rect x="48.8" y="417.04999999999995" width="14.6" height="15.2" rx="2.2" fill="#f6f6f6" stroke="#777" stroke-width="1.4"/><rect x="53.6" y="422.04999999999995" width="9.6" height="10" fill="#8f8f8f"/><rect x="53.6" y="422.04999999999995" width="9.6" height="2.4" fill="#b6b6b6"/>
<path d="M50 457.40000000000003L51.8 452.8L59.6 444.6L62.2 447.0L54.4 455.40000000000003Z" stroke="#c4c4c4" stroke-width="1.3" fill="#fdfdfd" stroke-linejoin="round"/><path d="M49 458.6H63.4" stroke="#d9d9d9" stroke-width="1.3"/><circle cx="61.2" cy="456.40000000000003" r="5.4" fill="#23349a"/><path d="M58 456.40000000000003H64.4" stroke="#fff" stroke-width="2"/>
<rect x="48.8" y="471.34999999999997" width="14.6" height="15.2" rx="2.2" fill="#f6f6f6" stroke="#777" stroke-width="1.4"/><rect x="53.6" y="476.34999999999997" width="9.6" height="10" fill="#8f8f8f"/><rect x="53.6" y="476.34999999999997" width="9.6" height="2.4" fill="#b6b6b6"/>
<path d="M48.8 513.7V504.5A6 6 0 0 1 54.8 498.5H61.4a2 2 0 0 1 2 2V511.70000000000005a2 2 0 0 1-2 2Z" fill="#fbfbfb" stroke="#777" stroke-width="1.4"/><path d="M49.4 505.1A6.4 6.4 0 0 1 55 499.1L55.6 501.1A4.6 4.6 0 0 0 51.4 505.5Z" fill="#8a8a8a"/><path d="M51.2 513.1V505.70000000000005A4.6 4.6 0 0 1 55.8 501.1H63" stroke="#b9b9b9" stroke-width="1" fill="none"/>
<path d="M50 538.85L51.8 534.25L59.6 526.05L62.2 528.45L54.4 536.85Z" stroke="#c4c4c4" stroke-width="1.3" fill="#fdfdfd" stroke-linejoin="round"/><path d="M49 540.05H63.4" stroke="#d9d9d9" stroke-width="1.3"/>
<rect x="48.8" y="552.8" width="14.6" height="15.2" rx="2.2" fill="#f6f6f6" stroke="#777" stroke-width="1.4"/><rect x="53.6" y="557.8" width="9.6" height="10" fill="#8f8f8f"/><rect x="53.6" y="557.8" width="9.6" height="2.4" fill="#b6b6b6"/>
<path d="M48.8 595.15V585.9499999999999A6 6 0 0 1 54.8 579.9499999999999H61.4a2 2 0 0 1 2 2V593.15a2 2 0 0 1-2 2Z" fill="#fbfbfb" stroke="#777" stroke-width="1.4"/><path d="M49.4 586.55A6.4 6.4 0 0 1 55 580.55L55.6 582.55A4.6 4.6 0 0 0 51.4 586.9499999999999Z" fill="#8a8a8a"/><path d="M51.2 594.55V587.15A4.6 4.6 0 0 1 55.8 582.55H63" stroke="#b9b9b9" stroke-width="1" fill="none"/>
<rect x="48.8" y="607.1" width="14.6" height="15.2" rx="2.2" fill="#f6f6f6" stroke="#777" stroke-width="1.4"/><rect x="51.6" y="609.5" width="9.2" height="11" fill="#8f8f8f"/><rect x="54.2" y="609.5" width="6.6" height="9" fill="#c2c2c2"/>
<path d="M50 647.45L51.8 642.85L59.6 634.65L62.2 637.0500000000001L54.4 645.45Z" stroke="#c4c4c4" stroke-width="1.3" fill="#fdfdfd" stroke-linejoin="round"/><path d="M49 648.65H63.4" stroke="#d9d9d9" stroke-width="1.3"/><circle cx="61.2" cy="646.45" r="5.4" fill="#23349a"/><path d="M58 646.45H64.4" stroke="#fff" stroke-width="2"/>
<rect x="48.8" y="661.4" width="14.6" height="15.2" rx="2.2" fill="#f6f6f6" stroke="#777" stroke-width="1.4"/><rect x="53.6" y="666.4" width="9.6" height="10" fill="#8f8f8f"/><rect x="53.6" y="666.4" width="9.6" height="2.4" fill="#b6b6b6"/>
<path d="M46.4 697L52.2 702.6L58 697" stroke="#333" stroke-width="2" fill="none"/>
<path d="M67.4 733.6V726.2H72V720.6H79.6a1.6 1.6 0 0 1 1.6 1.6V732a1.6 1.6 0 0 1-1.6 1.6Z" fill="#fcfcfc" stroke="#777" stroke-width="1.3" stroke-linejoin="round"/><path d="M69.6 733V728.4H74.2V722.6H80.6" stroke="#bdbdbd" stroke-width="1" fill="none"/>
<path d="M52.2 140V248" stroke="#dcdcdc" stroke-width="1.3"/>
<path d="M53.6 59.6H68.6L62.6 67.2V73.6L59.8 71.6V67.2Z" stroke="#6e6e6e" stroke-width="1.5" fill="none" stroke-linejoin="round"/>
<path d="M153.6 97V91.6H159.4L161.2 93.6H170.4V104.4H159.6" stroke="#9a9a9a" stroke-width="1.4" fill="none"/><path d="M154.4 100.6H162.4M158.4 96.6V104.6" stroke="#27358f" stroke-width="1.8"/><path d="M153.6 103.2V104.6H155.4" stroke="#555" stroke-width="1.2"/>
<rect x="187.4" y="91" width="3.6" height="14.2" fill="#1b1b1b"/><rect x="195.8" y="91" width="3.6" height="14.2" fill="#1b1b1b"/>
<circle cx="224.8" cy="99" r="7.4" stroke="#2a2a2a" stroke-width="2" fill="none"/><path d="M222.6 89.6H227M224.8 89.8V91.6M230.4 92.4L231.8 93.8" stroke="#2a2a2a" stroke-width="1.7"/><path d="M223 97.4L227.6 101.6" stroke="#555" stroke-width="1.5"/>
<path d="M237.8 123.4L241.8 119.4L245.8 123.4" stroke="#4a4a4a" stroke-width="1.9" fill="none"/>
<path d="M237.8 674.6L241.8 678.6L245.8 674.6" stroke="#4a4a4a" stroke-width="1.9" fill="none"/></svg>
<div class="abs" style="left:257px;top:523.5px;width:33.5px;height:36px;border:1.3px solid #dedede;border-left:none;background:#fff"></div>
<svg class="abs" style="left:260px;top:528px" width="28" height="28" viewBox="0 0 28 28" fill="none"><path d="M6.4 8V22.6M6.4 8.6H20.6M9.8 13H20.6M9.8 17.6H20.6M9.8 22.2H20.6" stroke="#777" stroke-width="1.5"/><path d="M3.6 5.6L6.4 8.6L9.2 5.6Z" fill="#555"/></svg>
<svg class="abs" id="model" style="left:700px;top:150px" width="640" height="800" viewBox="700 150 640 800" fill="none">
<defs>
<linearGradient id="gBody" gradientUnits="userSpaceOnUse" x1="820" y1="0" x2="1295" y2="0">
 <stop offset="0" stop-color="#4e6778"/><stop offset=".16" stop-color="#4e6778"/><stop offset=".29" stop-color="#547085"/><stop offset=".337" stop-color="#64859b"/><stop offset=".373" stop-color="#6d90a8"/><stop offset=".406" stop-color="#7599b2"/><stop offset=".442" stop-color="#7ea5bf"/><stop offset=".51" stop-color="#86b0cb"/><stop offset=".58" stop-color="#8ab5d1"/><stop offset=".69" stop-color="#8db9d5"/><stop offset="1" stop-color="#8bb6d3"/>
</linearGradient>
<linearGradient id="gDome" gradientUnits="userSpaceOnUse" x1="795" y1="365" x2="1075" y2="215">
 <stop offset="0" stop-color="#4a6172"/><stop offset=".12" stop-color="#4d6475"/><stop offset=".2" stop-color="#52697b"/><stop offset=".245" stop-color="#5d7b90"/><stop offset=".29" stop-color="#63839a"/><stop offset=".345" stop-color="#7092a9"/><stop offset=".43" stop-color="#799db6"/><stop offset=".515" stop-color="#7fa6c0"/><stop offset=".59" stop-color="#86afca"/><stop offset=".67" stop-color="#8fbad6"/><stop offset=".8" stop-color="#95c2df"/><stop offset=".94" stop-color="#98c5e2"/><stop offset="1" stop-color="#98c5e2"/>
</linearGradient>
<radialGradient id="gHi" gradientUnits="userSpaceOnUse" cx="1050" cy="345" r="62" gradientTransform="translate(1050 345) rotate(-42) scale(1 2.1) translate(-1050 -345)">
 <stop offset="0" stop-color="#b4dcf5" stop-opacity=".95"/><stop offset=".45" stop-color="#a3cfeb" stop-opacity=".6"/><stop offset="1" stop-color="#93bfdd" stop-opacity="0"/>
</radialGradient>
<linearGradient id="gRingL" gradientUnits="userSpaceOnUse" x1="770" y1="380" x2="1020" y2="620">
 <stop offset="0" stop-color="#7299b4"/><stop offset=".5" stop-color="#6d94af"/><stop offset="1" stop-color="#5b819b"/>
</linearGradient>
<linearGradient id="gInnerL" gradientUnits="userSpaceOnUse" x1="900" y1="0" x2="1005" y2="0">
 <stop offset="0" stop-color="#54768e"/><stop offset=".1" stop-color="#7ea7c4"/><stop offset=".28" stop-color="#6e97b3"/><stop offset=".42" stop-color="#a3cde9"/><stop offset=".62" stop-color="#8fbad7"/><stop offset="1" stop-color="#9cc7e3"/>
</linearGradient>
<linearGradient id="gHoleR" gradientUnits="userSpaceOnUse" x1="1105" y1="0" x2="1255" y2="0">
 <stop offset="0" stop-color="#6d8fa6"/><stop offset=".12" stop-color="#5d7c92"/><stop offset=".25" stop-color="#567387"/><stop offset=".6" stop-color="#516e81"/><stop offset="1" stop-color="#4c6779"/>
</linearGradient>
<linearGradient id="gCol" gradientUnits="userSpaceOnUse" x1="1030" y1="0" x2="1066" y2="0">
 <stop offset="0" stop-color="#86b1ce"/><stop offset=".45" stop-color="#b6dcf4"/><stop offset=".8" stop-color="#8ab5d2"/><stop offset="1" stop-color="#6f98b4"/>
</linearGradient>
<filter id="soft" x="-5%" y="-5%" width="110%" height="110%"><feGaussianBlur stdDeviation="0.62"/></filter>
<filter id="blur6" x="-20%" y="-20%" width="140%" height="140%"><feGaussianBlur stdDeviation="6"/></filter>
<filter id="blur3" x="-20%" y="-20%" width="140%" height="140%"><feGaussianBlur stdDeviation="3"/></filter>
</defs>
<g filter="url(#soft)">
<path d="M955.3 824.4L961.0 891.0L1196.3 889.0L1185.0 759.7Z" fill="#f2f5f8" fill-opacity=".9" stroke="#c3cad8" stroke-width="1.2"/>
<path d="M991.0 822.5L999.4 910.6L1158.8 868.4L1149.4 773.8Z" fill="#e8edf2" fill-opacity=".75" stroke="#bfc7d6" stroke-width="1.2"/>
<clipPath id="cSil"><path d="M1126.0 198.0C1128.3 198.8 1133.9 200.7 1140.0 202.5C1146.1 204.3 1155.0 205.9 1162.5 209.0C1170.0 212.1 1177.9 216.2 1185.0 221.0C1192.1 225.8 1198.8 231.4 1205.0 237.5C1211.2 243.6 1217.3 250.4 1222.5 257.5C1227.7 264.6 1232.1 272.5 1236.0 280.0C1239.9 287.5 1243.5 295.4 1246.0 302.5C1248.5 309.6 1249.8 317.2 1251.0 322.5C1252.2 327.8 1252.7 332.1 1253.0 334.0L1250.5 336.0C1251.2 339.2 1253.4 346.8 1255.0 355.0C1256.6 363.2 1258.3 372.5 1260.0 385.0C1261.7 397.5 1263.7 417.2 1265.0 430.0C1266.3 442.8 1267.2 452.0 1268.0 462.0C1268.8 472.0 1269.7 482.5 1270.0 490.0C1270.3 497.5 1269.6 501.2 1270.0 507.0C1270.4 512.8 1271.5 513.7 1272.5 525.0C1273.5 536.3 1274.8 558.3 1276.0 575.0C1277.2 591.7 1278.7 609.2 1280.0 625.0C1281.3 640.8 1282.6 657.5 1283.8 670.0C1284.9 682.5 1286.0 691.2 1287.0 700.0C1288.0 708.8 1289.3 716.8 1290.0 723.0C1290.7 729.2 1290.8 735.1 1291.0 737.5L1291.0 737.5C1290.0 738.4 1288.5 741.1 1285.0 743.0C1281.5 744.9 1276.7 746.9 1270.0 749.0C1263.3 751.1 1253.7 754.1 1245.0 755.5C1236.3 756.9 1225.5 757.6 1218.0 757.5C1210.5 757.4 1204.7 755.3 1200.0 755.0C1195.3 754.7 1193.0 755.0 1190.0 755.5C1187.0 756.0 1186.3 756.9 1182.0 758.3C1177.7 759.7 1171.0 761.8 1164.0 764.0C1157.0 766.2 1149.5 768.5 1140.0 771.7C1130.5 774.9 1118.2 779.4 1107.0 783.3C1095.8 787.2 1084.2 791.1 1073.0 795.0C1061.8 798.9 1049.3 803.4 1040.0 806.7C1030.7 810.0 1025.0 812.5 1017.0 815.0C1009.0 817.5 998.7 820.5 992.0 821.7C985.3 822.9 984.0 821.8 977.0 822.0C970.0 822.2 960.0 822.6 950.0 823.0C940.0 823.4 925.3 824.2 917.0 824.5C908.7 824.8 906.2 825.2 900.0 824.5C893.8 823.8 886.2 822.4 880.0 820.5C873.8 818.6 867.8 815.9 863.0 813.0C858.2 810.1 854.1 806.5 851.0 803.0C847.9 799.5 846.0 796.7 844.5 792.0C843.0 787.3 843.1 783.3 842.0 775.0C840.9 766.7 839.3 754.5 838.0 742.0C836.7 729.5 835.2 712.0 834.0 700.0C832.8 688.0 831.4 681.0 830.5 670.0C829.6 659.0 828.8 640.0 828.5 634.0L828.5 634.0C825.0 632.1 814.3 627.8 807.5 622.5C800.7 617.2 793.8 610.4 787.5 602.5C781.2 594.6 775.0 585.0 770.0 575.0C765.0 565.0 760.8 552.9 757.5 542.5C754.2 532.1 751.8 523.8 750.0 512.5C748.2 501.2 746.9 487.1 746.5 475.0C746.1 462.9 746.8 449.2 747.5 440.0C748.2 430.8 749.6 426.7 751.0 420.0C752.4 413.3 754.2 406.2 756.0 400.0C757.8 393.8 759.7 389.2 762.0 383.0C764.3 376.8 766.6 369.2 770.0 362.5C773.4 355.8 778.3 347.9 782.5 342.5C786.7 337.1 790.6 333.8 795.0 330.0C799.4 326.2 806.5 321.7 808.8 320.0L808.8 320.0C809.6 319.5 812.3 319.1 814.0 317.0C815.7 314.9 816.7 311.8 819.0 307.5C821.3 303.2 824.2 297.1 828.0 291.0C831.8 284.9 836.9 277.2 842.0 271.0C847.1 264.8 853.0 258.4 858.5 253.5C864.0 248.6 870.3 244.4 875.0 241.5C879.7 238.6 884.8 236.9 886.7 236.0L886.7 236.0C888.4 234.4 893.4 229.9 896.7 226.7C900.0 223.5 902.8 219.8 906.7 216.7C910.6 213.6 915.6 210.4 920.0 208.3C924.4 206.2 929.4 204.6 933.3 203.9C937.2 203.2 940.5 203.4 943.3 203.9C946.1 204.4 947.7 205.8 950.0 206.7C952.3 207.6 955.8 208.9 957.0 209.4L1078 178L1117.5 176L1123.5 179.5Z"/></clipPath>
<path d="M1126.0 198.0C1128.3 198.8 1133.9 200.7 1140.0 202.5C1146.1 204.3 1155.0 205.9 1162.5 209.0C1170.0 212.1 1177.9 216.2 1185.0 221.0C1192.1 225.8 1198.8 231.4 1205.0 237.5C1211.2 243.6 1217.3 250.4 1222.5 257.5C1227.7 264.6 1232.1 272.5 1236.0 280.0C1239.9 287.5 1243.5 295.4 1246.0 302.5C1248.5 309.6 1249.8 317.2 1251.0 322.5C1252.2 327.8 1252.7 332.1 1253.0 334.0L1250.5 336.0C1251.2 339.2 1253.4 346.8 1255.0 355.0C1256.6 363.2 1258.3 372.5 1260.0 385.0C1261.7 397.5 1263.7 417.2 1265.0 430.0C1266.3 442.8 1267.2 452.0 1268.0 462.0C1268.8 472.0 1269.7 482.5 1270.0 490.0C1270.3 497.5 1269.6 501.2 1270.0 507.0C1270.4 512.8 1271.5 513.7 1272.5 525.0C1273.5 536.3 1274.8 558.3 1276.0 575.0C1277.2 591.7 1278.7 609.2 1280.0 625.0C1281.3 640.8 1282.6 657.5 1283.8 670.0C1284.9 682.5 1286.0 691.2 1287.0 700.0C1288.0 708.8 1289.3 716.8 1290.0 723.0C1290.7 729.2 1290.8 735.1 1291.0 737.5L1291.0 737.5C1290.0 738.4 1288.5 741.1 1285.0 743.0C1281.5 744.9 1276.7 746.9 1270.0 749.0C1263.3 751.1 1253.7 754.1 1245.0 755.5C1236.3 756.9 1225.5 757.6 1218.0 757.5C1210.5 757.4 1204.7 755.3 1200.0 755.0C1195.3 754.7 1193.0 755.0 1190.0 755.5C1187.0 756.0 1186.3 756.9 1182.0 758.3C1177.7 759.7 1171.0 761.8 1164.0 764.0C1157.0 766.2 1149.5 768.5 1140.0 771.7C1130.5 774.9 1118.2 779.4 1107.0 783.3C1095.8 787.2 1084.2 791.1 1073.0 795.0C1061.8 798.9 1049.3 803.4 1040.0 806.7C1030.7 810.0 1025.0 812.5 1017.0 815.0C1009.0 817.5 998.7 820.5 992.0 821.7C985.3 822.9 984.0 821.8 977.0 822.0C970.0 822.2 960.0 822.6 950.0 823.0C940.0 823.4 925.3 824.2 917.0 824.5C908.7 824.8 906.2 825.2 900.0 824.5C893.8 823.8 886.2 822.4 880.0 820.5C873.8 818.6 867.8 815.9 863.0 813.0C858.2 810.1 854.1 806.5 851.0 803.0C847.9 799.5 846.0 796.7 844.5 792.0C843.0 787.3 843.1 783.3 842.0 775.0C840.9 766.7 839.3 754.5 838.0 742.0C836.7 729.5 835.2 712.0 834.0 700.0C832.8 688.0 831.4 681.0 830.5 670.0C829.6 659.0 828.8 640.0 828.5 634.0L828.5 634.0C825.0 632.1 814.3 627.8 807.5 622.5C800.7 617.2 793.8 610.4 787.5 602.5C781.2 594.6 775.0 585.0 770.0 575.0C765.0 565.0 760.8 552.9 757.5 542.5C754.2 532.1 751.8 523.8 750.0 512.5C748.2 501.2 746.9 487.1 746.5 475.0C746.1 462.9 746.8 449.2 747.5 440.0C748.2 430.8 749.6 426.7 751.0 420.0C752.4 413.3 754.2 406.2 756.0 400.0C757.8 393.8 759.7 389.2 762.0 383.0C764.3 376.8 766.6 369.2 770.0 362.5C773.4 355.8 778.3 347.9 782.5 342.5C786.7 337.1 790.6 333.8 795.0 330.0C799.4 326.2 806.5 321.7 808.8 320.0L808.8 320.0C809.6 319.5 812.3 319.1 814.0 317.0C815.7 314.9 816.7 311.8 819.0 307.5C821.3 303.2 824.2 297.1 828.0 291.0C831.8 284.9 836.9 277.2 842.0 271.0C847.1 264.8 853.0 258.4 858.5 253.5C864.0 248.6 870.3 244.4 875.0 241.5C879.7 238.6 884.8 236.9 886.7 236.0L886.7 236.0C888.4 234.4 893.4 229.9 896.7 226.7C900.0 223.5 902.8 219.8 906.7 216.7C910.6 213.6 915.6 210.4 920.0 208.3C924.4 206.2 929.4 204.6 933.3 203.9C937.2 203.2 940.5 203.4 943.3 203.9C946.1 204.4 947.7 205.8 950.0 206.7C952.3 207.6 955.8 208.9 957.0 209.4L1078 178L1117.5 176L1123.5 179.5Z" fill="url(#gBody)"/>
<g clip-path="url(#cSil)">
<path d="M740.0 150.0L1300.0 150.0L1300.0 345.0L1231.0 340.0L1215.0 335.0L1200.0 320.0L1180.0 307.5L1155.0 300.0L1130.0 302.5L1110.0 311.0L1095.0 327.5L1075.0 350.0L1050.0 377.5L1033.0 395.0L1020.0 390.0L995.0 367.5L960.0 345.0L927.5 333.8L870.0 335.0L840.0 350.0L805.0 370.0L780.0 400.0L740.0 420.0Z" fill="url(#gDome)"/>
<ellipse cx="1050" cy="345" rx="130" ry="150" fill="url(#gHi)"/>
<path d="M1135.0 203.5C1139.2 205.9 1152.8 212.9 1160.0 218.0C1167.2 223.1 1171.3 227.0 1178.0 234.0C1184.7 241.0 1193.8 250.7 1200.0 260.0C1206.2 269.3 1210.8 280.0 1215.0 290.0C1219.2 300.0 1222.3 311.7 1225.0 320.0C1227.7 328.3 1230.0 336.7 1231.0 340.0L1260 340L1260 200Z" fill="#8fbad6"/>
</g>
<g clip-path="url(#cSil)">
<linearGradient id="gEar" gradientUnits="userSpaceOnUse" x1="0" y1="320" x2="0" y2="640"><stop offset="0" stop-color="#7497ae"/><stop offset=".2" stop-color="#6f92a9"/><stop offset=".375" stop-color="#5e7d93"/><stop offset=".515" stop-color="#4f697b"/><stop offset=".8" stop-color="#4a5f70"/><stop offset="1" stop-color="#4a5f70"/></linearGradient>
<path d="M828.5 634.0C825.0 632.1 814.3 627.8 807.5 622.5C800.7 617.2 793.8 610.4 787.5 602.5C781.2 594.6 775.0 585.0 770.0 575.0C765.0 565.0 760.8 552.9 757.5 542.5C754.2 532.1 751.8 523.8 750.0 512.5C748.2 501.2 746.9 487.1 746.5 475.0C746.1 462.9 746.8 449.2 747.5 440.0C748.2 430.8 749.6 426.7 751.0 420.0C752.4 413.3 754.2 406.2 756.0 400.0C757.8 393.8 759.7 389.2 762.0 383.0C764.3 376.8 766.6 369.2 770.0 362.5C773.4 355.8 778.3 347.9 782.5 342.5C786.7 337.1 790.6 333.8 795.0 330.0C799.4 326.2 806.5 321.7 808.8 320.0L814 317.4L814.0 317.4C813.2 319.3 810.9 324.2 809.4 329.0C807.9 333.8 806.3 341.1 804.8 346.3C803.3 351.5 801.7 354.8 800.2 360.2C798.7 365.6 798.6 368.7 795.6 378.7C792.6 388.7 785.6 404.8 782.0 420.0C778.4 435.2 775.0 451.7 774.0 470.0C773.0 488.3 773.0 510.0 776.0 530.0C779.0 550.0 783.0 571.7 792.0 590.0C801.0 608.3 823.7 631.7 830.0 640.0Z" fill="url(#gEar)"/>
<path d="M814.0 317.4C813.2 319.3 810.9 324.2 809.4 329.0C807.9 333.8 806.3 341.1 804.8 346.3C803.3 351.5 801.7 354.8 800.2 360.2C798.7 365.6 796.4 375.6 795.6 378.7L801.0 374.0C801.6 371.3 803.6 363.8 804.8 358.0C806.0 352.2 807.1 344.4 808.3 339.4C809.5 334.4 810.5 331.5 811.8 327.8C813.1 324.1 815.3 318.8 816.0 317.0Z" fill="#5f7f96"/>
<path d="M900.4 333.0L903.2 333.4L906.0 333.9L908.8 334.5L911.6 335.1L914.3 335.8L907.3 351.6L904.8 351.0L902.3 350.5L899.8 350.0L897.3 349.6L894.8 349.3Z" fill="#7ba0b9"/>
<path d="M912.9 335.5L915.6 336.2L918.4 337.0L921.2 337.8L923.9 338.7L926.6 339.7L918.3 354.8L915.9 354.0L913.4 353.2L910.9 352.5L908.4 351.9L905.9 351.3Z" fill="#7ca1ba"/>
<path d="M925.2 339.2L927.9 340.2L930.6 341.2L933.3 342.3L936.0 343.5L938.7 344.7L929.2 359.2L926.8 358.1L924.4 357.1L921.9 356.1L919.5 355.2L917.0 354.4Z" fill="#7da2bc"/>
<path d="M937.3 344.1L939.9 345.3L942.6 346.6L945.2 348.0L947.8 349.5L950.4 351.0L939.8 364.6L937.5 363.3L935.1 362.0L932.7 360.8L930.3 359.7L927.9 358.6Z" fill="#7ea4bd"/>
<path d="M949.0 350.1L951.6 351.7L954.2 353.2L956.7 354.9L959.2 356.6L961.7 358.3L950.1 371.0L947.8 369.5L945.5 368.0L943.2 366.6L940.9 365.2L938.6 363.9Z" fill="#80a5be"/>
<path d="M960.4 357.4L962.9 359.1L965.3 360.9L967.8 362.8L970.1 364.7L972.5 366.7L959.9 378.4L957.8 376.7L955.6 375.0L953.4 373.4L951.1 371.8L948.9 370.2Z" fill="#81a6c0"/>
<path d="M971.3 365.6L973.6 367.6L975.9 369.7L978.2 371.8L980.5 373.9L982.7 376.1L969.3 386.8L967.2 384.8L965.2 382.9L963.1 381.1L960.9 379.3L958.8 377.5Z" fill="#82a8c1"/>
<path d="M981.5 374.9L983.7 377.1L985.9 379.4L988.1 381.7L990.2 384.0L992.2 386.4L978.0 395.9L976.1 393.8L974.2 391.7L972.2 389.7L970.2 387.7L968.2 385.7Z" fill="#83a9c3"/>
<path d="M991.1 385.1L993.2 387.6L995.2 390.0L997.2 392.5L999.1 395.0L1001.0 397.6L986.2 405.9L984.4 403.6L982.6 401.3L980.8 399.1L978.9 396.9L977.0 394.8Z" fill="#84aac4"/>
<path d="M1000.0 396.2L1001.9 398.8L1003.7 401.4L1005.5 404.1L1007.3 406.8L1009.0 409.6L993.6 416.6L992.0 414.1L990.4 411.7L988.7 409.3L987.0 407.0L985.2 404.7Z" fill="#86acc5"/>
<path d="M1008.1 408.1L1009.8 410.8L1011.4 413.6L1013.0 416.4L1014.6 419.3L1016.1 422.2L1000.3 427.9L998.8 425.3L997.4 422.7L995.9 420.2L994.3 417.7L992.7 415.2Z" fill="#87adc7"/>
<path d="M1015.3 420.6L1016.8 423.5L1018.2 426.4L1019.6 429.4L1020.9 432.4L1022.2 435.4L1006.1 439.7L1004.9 437.0L1003.6 434.3L1002.3 431.7L1000.9 429.1L999.5 426.5Z" fill="#88afc8"/>
<path d="M1021.6 433.8L1022.8 436.8L1024.1 439.8L1025.2 442.9L1026.4 445.9L1027.4 449.0L1011.1 452.0L1010.1 449.2L1009.0 446.4L1007.9 443.7L1006.7 440.9L1005.5 438.2Z" fill="#89b0ca"/>
<path d="M1026.9 447.4L1027.9 450.5L1028.9 453.6L1029.9 456.7L1030.8 459.9L1031.6 463.1L1015.3 464.6L1014.4 461.7L1013.5 458.9L1012.6 456.1L1011.6 453.3L1010.6 450.5Z" fill="#8bb1cb"/>
<path d="M1031.2 461.4L1032.0 464.6L1032.8 467.7L1033.5 471.0L1034.2 474.2L1034.8 477.4L1018.5 477.5L1017.8 474.6L1017.1 471.7L1016.4 468.8L1015.6 465.9L1014.8 463.1Z" fill="#8cb3cc"/>
<path d="M1034.4 475.7L1035.0 478.9L1035.6 482.1L1036.0 485.4L1036.5 488.6L1036.8 491.9L1020.7 490.6L1020.3 487.6L1019.8 484.7L1019.3 481.8L1018.7 478.9L1018.1 475.9Z" fill="#8db4ce"/>
<path d="M1036.7 490.1L1037.0 493.4L1037.3 496.6L1037.5 499.9L1037.7 503.1L1037.8 506.4L1022.0 503.7L1021.8 500.7L1021.6 497.8L1021.3 494.9L1020.9 491.9L1020.5 489.0Z" fill="#8eb5cf"/>
<path d="M1037.8 504.6L1037.9 507.9L1037.9 511.1L1037.9 514.4L1037.9 517.6L1037.7 520.8L1022.3 516.8L1022.3 513.8L1022.3 510.9L1022.2 508.0L1022.1 505.0L1021.9 502.1Z" fill="#8cb2cc"/>
<path d="M1037.8 519.1L1037.7 522.3L1037.5 525.5L1037.2 528.7L1036.9 531.9L1036.5 535.1L1021.7 529.7L1021.9 526.8L1022.1 523.9L1022.2 521.0L1022.3 518.1L1022.3 515.2Z" fill="#86abc4"/>
<path d="M1036.7 533.4L1036.4 536.6L1035.9 539.7L1035.4 542.9L1034.9 546.0L1034.3 549.1L1020.1 542.4L1020.5 539.6L1020.9 536.8L1021.3 533.9L1021.6 531.1L1021.8 528.2Z" fill="#80a4bd"/>
<path d="M1034.6 547.4L1034.0 550.5L1033.3 553.6L1032.6 556.6L1031.8 559.7L1030.9 562.7L1017.5 554.8L1018.1 552.1L1018.7 549.3L1019.3 546.5L1019.8 543.7L1020.3 540.9Z" fill="#799db5"/>
<path d="M1031.4 561.1L1030.5 564.1L1029.6 567.0L1028.7 570.0L1027.6 572.9L1026.6 575.8L1014.0 566.8L1014.8 564.1L1015.6 561.5L1016.4 558.8L1017.1 556.1L1017.8 553.3Z" fill="#7396ae"/>
<path d="M1027.2 574.3L1026.1 577.1L1024.9 580.0L1023.7 582.8L1022.5 585.6L1021.2 588.3L1009.5 578.2L1010.6 575.7L1011.6 573.1L1012.6 570.6L1013.5 568.0L1014.4 565.4Z" fill="#6d8fa6"/>
<path d="M1021.9 586.8L1020.6 589.6L1019.2 592.3L1017.8 594.9L1016.4 597.6L1014.9 600.2L1004.2 589.0L1005.5 586.7L1006.7 584.3L1007.9 581.8L1009.0 579.4L1010.1 576.9Z" fill="#67879d"/>
<path d="M1015.7 598.8L1014.1 601.3L1012.6 603.9L1011.0 606.4L1009.3 608.8L1007.6 611.2L998.1 599.2L999.5 597.0L1000.9 594.7L1002.3 592.4L1003.6 590.1L1004.9 587.8Z" fill="#607e93"/>
<path d="M1008.5 609.9L1006.8 612.3L1005.0 614.6L1003.2 616.9L1001.4 619.2L999.5 621.4L991.1 608.6L992.7 606.5L994.3 604.5L995.9 602.3L997.4 600.2L998.8 598.0Z" fill="#597589"/>
<path d="M1000.5 620.2L998.6 622.4L996.6 624.5L994.7 626.6L992.6 628.7L990.6 630.7L983.4 617.1L985.2 615.3L987.0 613.4L988.7 611.5L990.4 609.5L992.0 607.5Z" fill="#526c7f"/>
<path d="M991.7 629.6L989.6 631.6L987.5 633.5L985.3 635.3L983.1 637.1L980.9 638.9L975.1 624.8L977.0 623.1L978.9 621.4L980.8 619.7L982.6 618.0L984.4 616.1Z" fill="#4b6375"/>
<path d="M982.1 638.0L979.9 639.7L977.6 641.4L975.3 643.0L973.0 644.6L970.6 646.1L966.1 631.4L968.2 630.0L970.2 628.6L972.2 627.1L974.2 625.5L976.1 623.9Z" fill="#485f70"/>
<path d="M971.9 645.3L969.5 646.8L967.1 648.2L964.7 649.5L962.2 650.9L959.7 652.1L956.6 637.1L958.8 635.9L960.9 634.7L963.1 633.4L965.2 632.1L967.2 630.7Z" fill="#485f70"/>
<path d="M961.1 651.5L958.6 652.7L956.0 653.8L953.5 655.0L950.9 656.0L948.3 657.0L946.6 641.8L948.9 640.8L951.1 639.8L953.4 638.8L955.6 637.7L957.8 636.5Z" fill="#485e6f"/>
<path d="M949.7 656.5L947.1 657.4L944.5 658.3L941.9 659.2L939.2 659.9L936.5 660.7L936.2 645.3L938.6 644.6L940.9 643.8L943.2 643.0L945.5 642.2L947.8 641.3Z" fill="#485e6f"/>
<path d="M938.0 660.3L935.3 661.0L932.6 661.6L929.9 662.1L927.2 662.6L924.4 663.1L925.5 647.7L927.9 647.3L930.3 646.8L932.7 646.2L935.1 645.6L937.5 644.9Z" fill="#475e6f"/>
<path d="M925.9 662.8L923.2 663.3L920.4 663.6L917.6 663.9L914.9 664.1L912.1 664.2L914.6 649.0L917.0 648.8L919.5 648.6L921.9 648.3L924.4 647.9L926.8 647.5Z" fill="#475e6f"/>
<path d="M913.6 664.2L910.8 664.3L908.0 664.4L905.2 664.3L902.4 664.3L899.6 664.1L903.5 649.1L905.9 649.2L908.4 649.2L910.9 649.2L913.4 649.1L915.9 648.9Z" fill="#475e6f"/>
<path d="M901.1 664.2L898.3 664.1L895.5 663.8L892.7 663.6L889.9 663.2L887.1 662.8L892.3 648.2L894.8 648.5L897.3 648.7L899.8 648.9L902.3 649.1L904.8 649.2Z" fill="#475d6e"/>
<path d="M888.6 663.0L885.8 662.6L883.0 662.1L880.2 661.5L877.4 660.9L874.7 660.2L881.1 646.0L883.6 646.6L886.1 647.1L888.6 647.6L891.1 648.0L893.6 648.3Z" fill="#475d6e"/>
<path d="M876.1 660.5L873.4 659.8L870.6 659.0L867.8 658.2L865.1 657.3L862.4 656.3L870.1 642.8L872.5 643.6L875.0 644.4L877.5 645.1L880.0 645.7L882.5 646.3Z" fill="#475d6e"/>
<path d="M863.8 656.8L861.1 655.8L858.4 654.8L855.7 653.7L853.0 652.5L850.3 651.3L859.2 638.4L861.6 639.5L864.0 640.5L866.5 641.5L868.9 642.4L871.4 643.2Z" fill="#465d6e"/>
<path d="M851.7 651.9L849.1 650.7L846.4 649.4L843.8 648.0L841.2 646.5L838.6 645.0L848.6 633.0L850.9 634.3L853.3 635.6L855.7 636.8L858.1 637.9L860.5 639.0Z" fill="#465d6e"/>
<path d="M840.0 645.9L837.4 644.3L834.8 642.8L832.3 641.1L829.8 639.4L827.3 637.7L838.3 626.6L840.6 628.1L842.9 629.6L845.2 631.0L847.5 632.4L849.8 633.7Z" fill="#465c6d"/>
<path d="M828.6 638.6L826.1 636.9L823.7 635.1L821.2 633.2L818.9 631.3L816.5 629.3L828.5 619.2L830.6 620.9L832.8 622.6L835.0 624.2L837.3 625.8L839.5 627.4Z" fill="#465c6d"/>
<path d="M817.7 630.4L815.4 628.4L813.1 626.3L810.8 624.2L808.5 622.1L806.3 619.9L819.1 610.8L821.2 612.8L823.2 614.7L825.3 616.5L827.5 618.3L829.6 620.1Z" fill="#465c6e"/>
<path d="M807.5 621.1L805.3 618.9L803.1 616.6L800.9 614.3L798.8 612.0L796.8 609.6L810.4 601.7L812.3 603.8L814.2 605.9L816.2 607.9L818.2 609.9L820.2 611.9Z" fill="#475d6e"/>
<path d="M797.9 610.9L795.8 608.4L793.8 606.0L791.8 603.5L789.9 601.0L788.0 598.4L802.2 591.7L804.0 594.0L805.8 596.3L807.6 598.5L809.5 600.7L811.4 602.8Z" fill="#485e70"/>
<path d="M789.0 599.8L787.1 597.2L785.3 594.6L783.5 591.9L781.7 589.2L780.0 586.4L794.8 581.0L796.4 583.5L798.0 585.9L799.7 588.3L801.4 590.6L803.2 592.9Z" fill="#495f70"/>
<path d="M780.9 587.9L779.2 585.2L777.6 582.4L776.0 579.6L774.4 576.7L772.9 573.8L788.1 569.7L789.6 572.3L791.0 574.9L792.5 577.4L794.1 579.9L795.7 582.4Z" fill="#4a6072"/>
<path d="M773.7 575.4L772.2 572.5L770.8 569.6L769.4 566.6L768.1 563.6L766.8 560.6L782.3 557.9L783.5 560.6L784.8 563.3L786.1 565.9L787.5 568.5L788.9 571.1Z" fill="#4b6173"/>
<path d="M767.4 562.2L766.2 559.2L764.9 556.2L763.8 553.1L762.6 550.1L761.6 547.0L777.3 545.6L778.3 548.4L779.4 551.2L780.5 553.9L781.7 556.7L782.9 559.4Z" fill="#4c6375"/>
<path d="M762.1 548.6L761.1 545.5L760.1 542.4L759.1 539.3L758.2 536.1L757.4 532.9L773.1 533.0L774.0 535.9L774.9 538.7L775.8 541.5L776.8 544.3L777.8 547.1Z" fill="#4d6678"/>
<path d="M757.8 534.6L757.0 531.4L756.2 528.3L755.5 525.0L754.8 521.8L754.2 518.6L769.9 520.1L770.6 523.0L771.3 525.9L772.0 528.8L772.8 531.7L773.6 534.5Z" fill="#4e687a"/>
<path d="M754.6 520.3L754.0 517.1L753.4 513.9L753.0 510.6L752.5 507.4L752.2 504.1L767.7 507.0L768.1 510.0L768.6 512.9L769.1 515.8L769.7 518.7L770.3 521.7Z" fill="#516c7e"/>
<path d="M752.3 505.9L752.0 502.6L751.7 499.4L751.5 496.1L751.3 492.9L751.2 489.6L766.4 493.9L766.6 496.9L766.8 499.8L767.1 502.7L767.5 505.7L767.9 508.6Z" fill="#547084"/>
<path d="M751.2 491.4L751.1 488.1L751.1 484.9L751.1 481.6L751.1 478.4L751.3 475.2L766.1 480.8L766.1 483.8L766.1 486.7L766.2 489.6L766.3 492.6L766.5 495.5Z" fill="#58768a"/>
<path d="M751.2 476.9L751.3 473.7L751.5 470.5L751.8 467.3L752.1 464.1L752.5 460.9L766.7 467.9L766.5 470.8L766.3 473.7L766.2 476.6L766.1 479.5L766.1 482.4Z" fill="#5c7a90"/>
<path d="M752.3 462.6L752.6 459.4L753.1 456.3L753.6 453.1L754.1 450.0L754.7 446.9L768.3 455.2L767.9 458.0L767.5 460.8L767.1 463.7L766.8 466.5L766.6 469.4Z" fill="#608095"/>
<path d="M754.4 448.6L755.0 445.5L755.7 442.4L756.4 439.4L757.2 436.3L758.1 433.3L770.9 442.8L770.3 445.5L769.7 448.3L769.1 451.1L768.6 453.9L768.1 456.7Z" fill="#64849a"/>
<path d="M757.6 434.9L758.5 431.9L759.4 429.0L760.3 426.0L761.4 423.1L762.4 420.2L774.4 430.8L773.6 433.5L772.8 436.1L772.0 438.8L771.3 441.5L770.6 444.3Z" fill="#66879d"/>
<path d="M761.8 421.7L762.9 418.9L764.1 416.0L765.3 413.2L766.5 410.4L767.8 407.7L778.9 419.4L777.8 421.9L776.8 424.5L775.8 427.0L774.9 429.6L774.0 432.2Z" fill="#67889e"/>
<path d="M767.1 409.2L768.4 406.4L769.8 403.7L771.2 401.1L772.6 398.4L774.1 395.8L784.2 408.6L782.9 410.9L781.7 413.3L780.5 415.8L779.4 418.2L778.3 420.7Z" fill="#67889e"/>
<path d="M773.3 397.2L774.9 394.7L776.4 392.1L778.0 389.6L779.7 387.2L781.4 384.8L790.3 398.4L788.9 400.6L787.5 402.9L786.1 405.2L784.8 407.5L783.5 409.8Z" fill="#67889e"/>
<path d="M780.5 386.1L782.2 383.7L784.0 381.4L785.8 379.1L787.6 376.8L789.5 374.6L797.3 389.0L795.7 391.1L794.1 393.1L792.5 395.3L791.0 397.4L789.6 399.6Z" fill="#68899f"/>
<path d="M788.5 375.8L790.4 373.6L792.4 371.5L794.3 369.4L796.4 367.3L798.4 365.3L805.0 380.5L803.2 382.3L801.4 384.2L799.7 386.1L798.0 388.1L796.4 390.1Z" fill="#68899f"/>
<path d="M797.3 366.4L799.4 364.4L801.5 362.5L803.7 360.7L805.9 358.9L808.1 357.1L813.3 372.8L811.4 374.5L809.5 376.2L807.6 377.9L805.8 379.6L804.0 381.5Z" fill="#698aa0"/>
<path d="M806.9 358.0L809.1 356.3L811.4 354.6L813.7 353.0L816.0 351.4L818.4 349.9L822.3 366.2L820.2 367.6L818.2 369.0L816.2 370.5L814.2 372.1L812.3 373.7Z" fill="#698aa0"/>
<path d="M817.1 350.7L819.5 349.2L821.9 347.8L824.3 346.5L826.8 345.1L829.3 343.9L831.8 360.5L829.6 361.7L827.5 362.9L825.3 364.2L823.2 365.5L821.2 366.9Z" fill="#6a8ba1"/>
<path d="M827.9 344.5L830.4 343.3L833.0 342.2L835.5 341.0L838.1 340.0L840.7 339.0L841.8 355.8L839.5 356.8L837.3 357.8L835.0 358.8L832.8 359.9L830.6 361.1Z" fill="#6a8ba1"/>
<path d="M839.3 339.5L841.9 338.6L844.5 337.7L847.1 336.8L849.8 336.1L852.5 335.3L852.2 352.3L849.8 353.0L847.5 353.8L845.2 354.6L842.9 355.4L840.6 356.3Z" fill="#6a8ba1"/>
<path d="M851.0 335.7L853.7 335.0L856.4 334.4L859.1 333.9L861.8 333.4L864.6 332.9L862.9 349.9L860.5 350.3L858.1 350.8L855.7 351.4L853.3 352.0L850.9 352.7Z" fill="#6b8ca2"/>
<path d="M863.1 333.2L865.8 332.7L868.6 332.4L871.4 332.1L874.1 331.9L876.9 331.8L873.8 348.6L871.4 348.8L868.9 349.0L866.5 349.3L864.0 349.7L861.6 350.1Z" fill="#6e8fa6"/>
<path d="M875.4 331.8L878.2 331.7L881.0 331.6L883.8 331.7L886.6 331.7L889.4 331.9L884.9 348.5L882.5 348.4L880.0 348.4L877.5 348.4L875.0 348.5L872.5 348.7Z" fill="#7296ad"/>
<path d="M887.9 331.8L890.7 331.9L893.5 332.2L896.3 332.4L899.1 332.8L901.9 333.2L896.1 349.4L893.6 349.1L891.1 348.9L888.6 348.7L886.1 348.5L883.6 348.4Z" fill="#789cb4"/>
<linearGradient id="gRingL2" gradientUnits="userSpaceOnUse" x1="770" y1="400" x2="1010" y2="600">
 <stop offset="0" stop-color="#556e80"/><stop offset=".45" stop-color="#546c7e"/><stop offset="1" stop-color="#4f697c"/></linearGradient>
<linearGradient id="gInnerL2" gradientUnits="userSpaceOnUse" x1="930" y1="0" x2="1005" y2="0">
 <stop offset="0" stop-color="#8db6d2"/><stop offset=".6" stop-color="#98c2de"/><stop offset="1" stop-color="#9cc6e2"/></linearGradient>
<path d="M1014.8 463.1C1015.4 465.2 1017.2 471.6 1018.1 475.9C1019.1 480.3 1019.9 484.6 1020.5 489.0C1021.1 493.3 1021.6 497.7 1021.9 502.1C1022.2 506.5 1022.4 510.9 1022.3 515.2C1022.3 519.5 1022.2 523.9 1021.8 528.2C1021.5 532.5 1021.0 536.7 1020.3 540.9C1019.6 545.1 1018.8 549.3 1017.8 553.3C1016.9 557.4 1015.7 561.4 1014.4 565.4C1013.1 569.3 1011.7 573.1 1010.1 576.9C1008.5 580.6 1006.8 584.2 1004.9 587.8C1003.0 591.3 1001.0 594.7 998.8 598.0C996.7 601.3 994.4 604.5 992.0 607.5C989.6 610.5 987.0 613.4 984.4 616.1C981.8 618.9 979.0 621.5 976.1 623.9C973.3 626.3 970.3 628.6 967.2 630.7C964.2 632.8 961.0 634.7 957.8 636.5C954.5 638.3 951.2 639.9 947.8 641.3C944.5 642.7 941.0 643.9 937.5 644.9C934.0 646.0 930.4 646.8 926.8 647.5C923.2 648.1 919.6 648.6 915.9 648.9C912.2 649.2 908.5 649.3 904.8 649.2C901.1 649.1 897.3 648.8 893.6 648.3C889.9 647.9 886.2 647.2 882.5 646.3C878.7 645.5 875.0 644.4 871.4 643.2C867.7 642.0 864.1 640.6 860.5 639.0C856.9 637.4 853.3 635.6 849.8 633.7C846.3 631.8 842.9 629.7 839.5 627.4C836.1 625.1 832.8 622.7 829.6 620.1C826.4 617.5 823.3 614.8 820.2 611.9C817.2 609.0 814.2 606.0 811.4 602.8C808.5 599.6 805.8 596.3 803.2 592.9C800.6 589.5 798.0 586.0 795.7 582.4C793.3 578.7 791.0 575.0 788.9 571.1C786.8 567.3 784.8 563.4 782.9 559.4C781.1 555.4 779.4 551.3 777.8 547.1C776.3 543.0 774.8 538.8 773.6 534.5C772.3 530.3 771.2 526.0 770.3 521.7C769.3 517.3 768.5 513.0 767.9 508.6C767.3 504.3 766.8 499.9 766.5 495.5C766.2 491.1 766.0 486.7 766.1 482.4C766.1 478.1 766.2 473.7 766.6 469.4C766.9 465.1 767.4 460.9 768.1 456.7C768.8 452.5 769.6 448.3 770.6 444.3C771.5 440.2 772.7 436.2 774.0 432.2C775.3 428.3 776.7 424.5 778.3 420.7C779.9 417.0 781.6 413.4 783.5 409.8C785.4 406.3 787.4 402.9 789.6 399.6C791.7 396.3 794.0 393.1 796.4 390.1C798.8 387.1 801.4 384.2 804.0 381.5C806.6 378.7 809.4 376.1 812.3 373.7C815.1 371.3 818.1 369.0 821.2 366.9C824.2 364.8 827.4 362.9 830.6 361.1C833.9 359.3 837.2 357.7 840.6 356.3C843.9 354.9 847.4 353.7 850.9 352.7C854.4 351.6 858.0 350.8 861.6 350.1C865.2 349.5 868.8 349.0 872.5 348.7C876.2 348.4 879.9 348.3 883.6 348.4C887.3 348.5 891.1 348.8 894.8 349.3C898.5 349.7 902.2 350.4 905.9 351.3C909.7 352.1 913.4 353.2 917.0 354.4C920.7 355.6 924.3 357.0 927.9 358.6C931.5 360.2 935.1 362.0 938.6 363.9C942.1 365.8 945.5 367.9 948.9 370.2C952.3 372.5 955.6 374.9 958.8 377.5C962.0 380.1 965.1 382.8 968.2 385.7C971.2 388.6 974.2 391.6 977.0 394.8C979.9 398.0 982.6 401.3 985.2 404.7C987.8 408.1 990.4 411.6 992.7 415.2C995.1 418.9 997.4 422.6 999.5 426.5C1001.6 430.3 1003.6 434.2 1005.5 438.2C1007.3 442.2 1009.0 446.3 1010.6 450.5C1012.1 454.6 1014.1 461.0 1014.8 463.1C1015.5 465.2 1014.3 460.9 1014.8 463.1Z" fill="url(#gRingL2)"/>
<clipPath id="cE2"><path d="M997.3 476.0C997.7 477.8 999.0 483.4 999.6 487.2C1000.2 491.0 1000.7 494.8 1001.1 498.5C1001.4 502.3 1001.6 506.1 1001.7 509.9C1001.8 513.7 1001.7 517.5 1001.5 521.2C1001.3 524.9 1001.0 528.7 1000.5 532.3C1000.1 536.0 999.4 539.7 998.7 543.2C998.0 546.8 997.1 550.4 996.1 553.8C995.1 557.3 993.9 560.7 992.7 564.0C991.4 567.3 990.0 570.6 988.5 573.7C987.0 576.8 985.3 579.9 983.6 582.9C981.8 585.8 980.0 588.6 978.0 591.4C976.0 594.1 973.9 596.7 971.8 599.2C969.6 601.7 967.3 604.1 964.9 606.3C962.5 608.5 960.1 610.6 957.5 612.6C955.0 614.5 952.4 616.4 949.7 618.0C947.0 619.7 944.2 621.2 941.3 622.6C938.5 623.9 935.6 625.1 932.7 626.2C929.7 627.2 926.7 628.1 923.7 628.9C920.7 629.6 917.6 630.2 914.5 630.6C911.4 631.0 908.3 631.2 905.1 631.3C902.0 631.3 898.8 631.3 895.6 631.0C892.5 630.7 889.3 630.3 886.2 629.7C883.0 629.1 879.9 628.4 876.7 627.5C873.6 626.6 870.5 625.5 867.4 624.3C864.3 623.0 861.3 621.6 858.3 620.1C855.3 618.6 852.3 616.9 849.5 615.1C846.6 613.2 843.7 611.2 840.9 609.1C838.2 607.0 835.4 604.8 832.8 602.4C830.2 600.0 827.6 597.5 825.1 594.9C822.7 592.2 820.3 589.5 818.0 586.6C815.7 583.8 813.5 580.8 811.4 577.7C809.3 574.7 807.3 571.5 805.5 568.3C803.6 565.0 801.8 561.7 800.2 558.3C798.5 554.9 797.0 551.4 795.6 547.9C794.2 544.3 792.9 540.7 791.7 537.1C790.6 533.5 789.6 529.8 788.7 526.0C787.8 522.3 787.0 518.6 786.4 514.8C785.8 511.0 785.3 507.2 784.9 503.5C784.6 499.7 784.4 495.9 784.3 492.1C784.2 488.3 784.3 484.5 784.5 480.8C784.7 477.1 785.0 473.3 785.5 469.7C785.9 466.0 786.6 462.3 787.3 458.8C788.0 455.2 788.9 451.6 789.9 448.2C790.9 444.7 792.1 441.3 793.3 438.0C794.6 434.7 796.0 431.4 797.5 428.3C799.0 425.2 800.7 422.1 802.4 419.1C804.2 416.2 806.0 413.4 808.0 410.6C810.0 407.9 812.1 405.3 814.2 402.8C816.4 400.3 818.7 397.9 821.1 395.7C823.5 393.5 825.9 391.4 828.5 389.4C831.0 387.5 833.6 385.6 836.3 384.0C839.0 382.3 841.8 380.8 844.7 379.4C847.5 378.1 850.4 376.9 853.3 375.8C856.3 374.8 859.3 373.9 862.3 373.1C865.3 372.4 868.4 371.8 871.5 371.4C874.6 371.0 877.7 370.8 880.9 370.7C884.0 370.7 887.2 370.7 890.4 371.0C893.5 371.3 896.7 371.7 899.8 372.3C903.0 372.9 906.1 373.6 909.3 374.5C912.4 375.4 915.5 376.5 918.6 377.7C921.7 379.0 924.7 380.4 927.7 381.9C930.7 383.4 933.7 385.1 936.5 386.9C939.4 388.8 942.3 390.8 945.1 392.9C947.8 395.0 950.6 397.2 953.2 399.6C955.8 402.0 958.4 404.5 960.9 407.1C963.3 409.8 965.7 412.5 968.0 415.4C970.3 418.2 972.5 421.2 974.6 424.3C976.7 427.3 978.7 430.5 980.5 433.7C982.4 437.0 984.2 440.3 985.8 443.7C987.5 447.1 989.0 450.6 990.4 454.1C991.8 457.7 993.1 461.3 994.3 464.9C995.4 468.5 996.8 474.1 997.3 476.0C997.8 477.8 997.0 474.1 997.3 476.0Z"/></clipPath>
<path d="M997.3 476.0C997.7 477.8 999.0 483.4 999.6 487.2C1000.2 491.0 1000.7 494.8 1001.1 498.5C1001.4 502.3 1001.6 506.1 1001.7 509.9C1001.8 513.7 1001.7 517.5 1001.5 521.2C1001.3 524.9 1001.0 528.7 1000.5 532.3C1000.1 536.0 999.4 539.7 998.7 543.2C998.0 546.8 997.1 550.4 996.1 553.8C995.1 557.3 993.9 560.7 992.7 564.0C991.4 567.3 990.0 570.6 988.5 573.7C987.0 576.8 985.3 579.9 983.6 582.9C981.8 585.8 980.0 588.6 978.0 591.4C976.0 594.1 973.9 596.7 971.8 599.2C969.6 601.7 967.3 604.1 964.9 606.3C962.5 608.5 960.1 610.6 957.5 612.6C955.0 614.5 952.4 616.4 949.7 618.0C947.0 619.7 944.2 621.2 941.3 622.6C938.5 623.9 935.6 625.1 932.7 626.2C929.7 627.2 926.7 628.1 923.7 628.9C920.7 629.6 917.6 630.2 914.5 630.6C911.4 631.0 908.3 631.2 905.1 631.3C902.0 631.3 898.8 631.3 895.6 631.0C892.5 630.7 889.3 630.3 886.2 629.7C883.0 629.1 879.9 628.4 876.7 627.5C873.6 626.6 870.5 625.5 867.4 624.3C864.3 623.0 861.3 621.6 858.3 620.1C855.3 618.6 852.3 616.9 849.5 615.1C846.6 613.2 843.7 611.2 840.9 609.1C838.2 607.0 835.4 604.8 832.8 602.4C830.2 600.0 827.6 597.5 825.1 594.9C822.7 592.2 820.3 589.5 818.0 586.6C815.7 583.8 813.5 580.8 811.4 577.7C809.3 574.7 807.3 571.5 805.5 568.3C803.6 565.0 801.8 561.7 800.2 558.3C798.5 554.9 797.0 551.4 795.6 547.9C794.2 544.3 792.9 540.7 791.7 537.1C790.6 533.5 789.6 529.8 788.7 526.0C787.8 522.3 787.0 518.6 786.4 514.8C785.8 511.0 785.3 507.2 784.9 503.5C784.6 499.7 784.4 495.9 784.3 492.1C784.2 488.3 784.3 484.5 784.5 480.8C784.7 477.1 785.0 473.3 785.5 469.7C785.9 466.0 786.6 462.3 787.3 458.8C788.0 455.2 788.9 451.6 789.9 448.2C790.9 444.7 792.1 441.3 793.3 438.0C794.6 434.7 796.0 431.4 797.5 428.3C799.0 425.2 800.7 422.1 802.4 419.1C804.2 416.2 806.0 413.4 808.0 410.6C810.0 407.9 812.1 405.3 814.2 402.8C816.4 400.3 818.7 397.9 821.1 395.7C823.5 393.5 825.9 391.4 828.5 389.4C831.0 387.5 833.6 385.6 836.3 384.0C839.0 382.3 841.8 380.8 844.7 379.4C847.5 378.1 850.4 376.9 853.3 375.8C856.3 374.8 859.3 373.9 862.3 373.1C865.3 372.4 868.4 371.8 871.5 371.4C874.6 371.0 877.7 370.8 880.9 370.7C884.0 370.7 887.2 370.7 890.4 371.0C893.5 371.3 896.7 371.7 899.8 372.3C903.0 372.9 906.1 373.6 909.3 374.5C912.4 375.4 915.5 376.5 918.6 377.7C921.7 379.0 924.7 380.4 927.7 381.9C930.7 383.4 933.7 385.1 936.5 386.9C939.4 388.8 942.3 390.8 945.1 392.9C947.8 395.0 950.6 397.2 953.2 399.6C955.8 402.0 958.4 404.5 960.9 407.1C963.3 409.8 965.7 412.5 968.0 415.4C970.3 418.2 972.5 421.2 974.6 424.3C976.7 427.3 978.7 430.5 980.5 433.7C982.4 437.0 984.2 440.3 985.8 443.7C987.5 447.1 989.0 450.6 990.4 454.1C991.8 457.7 993.1 461.3 994.3 464.9C995.4 468.5 996.8 474.1 997.3 476.0C997.8 477.8 997.0 474.1 997.3 476.0Z" fill="url(#gInnerL2)"/>
<g clip-path="url(#cE2)">
<linearGradient id="gb0" gradientUnits="userSpaceOnUse" x1="0" y1="470" x2="0" y2="585"><stop offset="0" stop-color="#b0d8f0"/><stop offset="1" stop-color="#a4cce6"/></linearGradient>
<path d="M966.4 488.1C966.5 490.0 966.9 495.5 967.0 499.2C967.2 502.9 967.2 506.6 967.1 510.2C966.9 513.9 966.7 517.5 966.4 521.2C966.0 524.8 965.6 528.4 965.0 531.9C964.4 535.4 963.8 538.9 963.0 542.4C962.2 545.8 961.3 549.2 960.3 552.5C959.3 555.8 958.2 559.1 957.0 562.2C955.8 565.4 954.5 568.4 953.1 571.4C951.6 574.4 950.1 577.3 948.5 580.1C947.0 582.8 945.3 585.5 943.5 588.0C941.7 590.6 939.9 593.0 937.9 595.3C936.0 597.7 934.0 599.8 931.9 601.9C929.9 603.9 927.7 605.9 925.5 607.6C923.3 609.4 921.0 611.1 918.7 612.5C916.4 614.0 914.0 615.4 911.6 616.6C909.1 617.7 906.7 618.8 904.2 619.7C901.7 620.5 899.1 621.3 896.6 621.8C894.0 622.4 891.4 622.8 888.8 623.0C886.3 623.3 883.6 623.3 881.0 623.3C878.4 623.2 875.8 622.9 873.2 622.5C870.5 622.1 867.9 621.6 865.3 620.9C862.7 620.1 860.1 619.3 857.6 618.2C855.0 617.2 852.5 616.0 850.0 614.7C847.5 613.3 845.0 611.9 842.6 610.2C840.2 608.6 837.8 606.8 835.5 604.9C833.2 603.0 830.9 600.9 828.7 598.8C826.5 596.6 824.3 594.3 822.2 591.8C820.2 589.4 818.1 586.8 816.2 584.2C814.3 581.5 812.4 578.7 810.6 575.9C808.9 573.0 807.2 570.0 805.6 566.9C804.0 563.9 802.5 560.7 801.1 557.5C799.7 554.3 798.4 550.9 797.1 547.6C795.9 544.2 794.8 540.7 793.8 537.3C792.8 533.8 791.9 530.2 791.1 526.6C790.3 523.0 789.7 519.4 789.1 515.8C788.5 512.1 788.1 508.5 787.7 504.8C787.4 501.1 787.1 497.4 787.0 493.7C786.9 490.0 786.9 486.3 787.0 482.7C787.1 479.0 787.4 475.3 787.7 471.7C788.0 468.1 788.5 464.5 789.1 461.0C789.6 457.4 790.3 453.9 791.1 450.5C791.9 447.1 792.8 443.7 793.8 440.4C794.8 437.1 795.9 433.8 797.1 430.7C798.3 427.5 799.6 424.4 801.0 421.5C802.4 418.5 803.9 415.6 805.5 412.8C807.1 410.1 808.8 407.4 810.6 404.8C812.3 402.3 814.2 399.8 816.1 397.5C818.1 395.2 820.1 393.0 822.2 391.0C824.2 388.9 826.4 387.0 828.6 385.2C830.8 383.5 833.1 381.8 835.4 380.3C837.7 378.9 840.1 377.5 842.5 376.3C844.9 375.1 847.4 374.1 849.9 373.2C852.4 372.4 854.9 371.6 857.5 371.1C860.0 370.5 862.6 370.1 865.2 369.9C867.8 369.6 870.4 369.5 873.1 369.6C875.7 369.7 878.3 369.9 880.9 370.3C883.5 370.7 886.2 371.3 888.8 372.0C891.3 372.7 893.9 373.6 896.5 374.6C899.0 375.7 901.6 376.9 904.1 378.2C906.6 379.5 909.1 381.0 911.5 382.7C913.9 384.3 916.3 386.1 918.6 388.0C920.9 389.9 923.2 391.9 925.4 394.1C927.6 396.3 929.8 398.6 931.8 401.0C933.9 403.5 935.9 406.0 937.9 408.7C939.8 411.4 941.7 414.1 943.4 417.0C945.2 419.9 946.9 422.9 948.5 425.9C950.1 429.0 951.6 432.2 953.0 435.4C954.4 438.6 955.7 441.9 956.9 445.3C958.1 448.7 959.3 452.1 960.3 455.6C961.3 459.1 962.2 462.7 963.0 466.3C963.7 469.8 964.4 473.5 965.0 477.1C965.6 480.7 966.1 486.3 966.4 488.1C966.6 489.9 966.2 486.3 966.4 488.1Z" fill="url(#gb0)"/>
<linearGradient id="gb1" gradientUnits="userSpaceOnUse" x1="0" y1="470" x2="0" y2="585"><stop offset="0" stop-color="#86afc9"/><stop offset="1" stop-color="#c6e4f6"/></linearGradient>
<path d="M956.9 490.7C957.0 492.6 957.2 498.1 957.2 501.7C957.1 505.4 957.0 509.0 956.8 512.6C956.5 516.3 956.2 519.9 955.7 523.4C955.3 527.0 954.7 530.5 954.1 534.0C953.4 537.5 952.6 540.9 951.8 544.3C950.9 547.6 949.9 551.0 948.9 554.2C947.8 557.4 946.6 560.6 945.4 563.6C944.1 566.7 942.8 569.7 941.3 572.6C939.9 575.4 938.4 578.2 936.8 580.9C935.2 583.6 933.5 586.2 931.7 588.6C930.0 591.0 928.1 593.4 926.2 595.6C924.3 597.8 922.3 599.9 920.3 601.8C918.3 603.7 916.2 605.5 914.0 607.2C911.9 608.8 909.7 610.4 907.4 611.7C905.2 613.1 902.9 614.3 900.6 615.4C898.3 616.5 895.9 617.4 893.5 618.1C891.1 618.9 888.7 619.5 886.3 620.0C883.8 620.4 881.4 620.7 878.9 620.8C876.5 620.9 874.0 620.9 871.5 620.7C869.1 620.5 866.6 620.2 864.2 619.7C861.7 619.2 859.3 618.5 856.8 617.7C854.4 616.8 852.0 615.9 849.6 614.7C847.3 613.6 844.9 612.3 842.6 610.9C840.3 609.5 838.0 607.9 835.8 606.2C833.6 604.4 831.4 602.6 829.3 600.6C827.2 598.6 825.1 596.5 823.1 594.2C821.1 592.0 819.1 589.6 817.3 587.1C815.4 584.6 813.6 582.0 811.9 579.3C810.2 576.6 808.5 573.7 806.9 570.8C805.4 567.9 803.9 564.9 802.5 561.8C801.1 558.7 799.8 555.5 798.6 552.2C797.4 549.0 796.3 545.6 795.2 542.2C794.2 538.8 793.3 535.4 792.5 531.9C791.7 528.4 790.9 524.8 790.3 521.3C789.7 517.7 789.2 514.1 788.8 510.4C788.4 506.8 788.1 503.1 787.9 499.5C787.7 495.8 787.6 492.2 787.7 488.5C787.7 484.9 787.8 481.2 788.1 477.6C788.3 474.0 788.7 470.4 789.1 466.8C789.6 463.3 790.1 459.7 790.8 456.2C791.5 452.8 792.2 449.3 793.1 446.0C794.0 442.6 794.9 439.3 796.0 436.1C797.0 432.8 798.2 429.7 799.5 426.6C800.7 423.5 802.1 420.6 803.5 417.7C804.9 414.8 806.5 412.0 808.1 409.3C809.7 406.7 811.4 404.1 813.1 401.6C814.9 399.2 816.7 396.9 818.6 394.7C820.5 392.5 822.5 390.4 824.5 388.5C826.6 386.5 828.7 384.7 830.8 383.0C833.0 381.4 835.2 379.9 837.4 378.5C839.6 377.1 841.9 375.9 844.3 374.8C846.6 373.8 849.0 372.9 851.3 372.1C853.7 371.3 856.1 370.7 858.6 370.3C861.0 369.8 863.5 369.6 865.9 369.4C868.4 369.3 870.8 369.3 873.3 369.5C875.8 369.7 878.2 370.1 880.7 370.6C883.1 371.1 885.6 371.8 888.0 372.6C890.4 373.4 892.8 374.4 895.2 375.5C897.6 376.6 899.9 377.9 902.2 379.4C904.5 380.8 906.8 382.4 909.0 384.1C911.3 385.8 913.4 387.7 915.6 389.6C917.7 391.6 919.7 393.8 921.7 396.0C923.8 398.3 925.7 400.7 927.6 403.1C929.4 405.6 931.2 408.3 933.0 411.0C934.7 413.7 936.3 416.5 937.9 419.4C939.5 422.4 941.0 425.4 942.3 428.5C943.7 431.6 945.0 434.8 946.3 438.0C947.5 441.3 948.6 444.6 949.6 448.0C950.6 451.4 951.5 454.9 952.4 458.4C953.2 461.9 953.9 465.4 954.5 469.0C955.1 472.6 955.6 476.2 956.0 479.8C956.4 483.4 956.8 488.9 956.9 490.7C957.1 492.6 956.9 488.9 956.9 490.7Z" fill="url(#gb1)"/>
<linearGradient id="gb2" gradientUnits="userSpaceOnUse" x1="0" y1="470" x2="0" y2="585"><stop offset="0" stop-color="#9cc0d8"/><stop offset="1" stop-color="#8fb8d4"/></linearGradient>
<path d="M940.2 494.3C940.2 496.1 940.0 501.5 939.7 505.1C939.5 508.7 939.1 512.2 938.7 515.8C938.2 519.3 937.7 522.8 937.0 526.3C936.4 529.7 935.7 533.2 934.8 536.5C934.0 539.9 933.1 543.2 932.1 546.4C931.1 549.7 930.0 552.9 928.9 556.0C927.7 559.0 926.5 562.1 925.1 565.0C923.8 567.9 922.4 570.7 921.0 573.5C919.5 576.2 917.9 578.8 916.3 581.3C914.7 583.8 913.0 586.2 911.3 588.5C909.6 590.8 907.8 593.0 905.9 595.0C904.1 597.0 902.2 598.9 900.2 600.7C898.3 602.4 896.3 604.1 894.3 605.5C892.3 607.0 890.2 608.4 888.1 609.5C886.0 610.7 883.9 611.8 881.7 612.7C879.6 613.6 877.4 614.3 875.2 614.9C873.0 615.5 870.8 615.9 868.6 616.2C866.4 616.4 864.2 616.5 862.0 616.5C859.8 616.5 857.6 616.3 855.4 615.9C853.2 615.5 851.1 615.0 848.9 614.4C846.7 613.7 844.6 612.9 842.5 611.9C840.4 610.9 838.3 609.8 836.2 608.5C834.2 607.3 832.2 605.8 830.2 604.3C828.2 602.7 826.3 601.0 824.4 599.2C822.6 597.4 820.7 595.4 819.0 593.3C817.2 591.2 815.5 589.0 813.9 586.6C812.2 584.3 810.6 581.8 809.1 579.2C807.6 576.7 806.2 574.0 804.8 571.2C803.5 568.4 802.2 565.5 801.0 562.6C799.8 559.6 798.6 556.5 797.6 553.4C796.5 550.3 795.6 547.0 794.7 543.8C793.9 540.5 793.1 537.1 792.4 533.7C791.7 530.3 791.1 526.9 790.6 523.4C790.1 519.9 789.7 516.4 789.4 512.9C789.1 509.3 788.8 505.7 788.7 502.1C788.6 498.6 788.6 495.0 788.6 491.4C788.7 487.8 788.9 484.2 789.1 480.6C789.4 477.0 789.8 473.4 790.2 469.9C790.7 466.4 791.2 462.9 791.8 459.4C792.5 455.9 793.2 452.5 794.0 449.2C794.9 445.8 795.8 442.5 796.8 439.2C797.8 436.0 798.8 432.8 800.0 429.7C801.2 426.6 802.4 423.6 803.7 420.7C805.1 417.8 806.5 414.9 807.9 412.2C809.4 409.5 810.9 406.9 812.5 404.4C814.2 401.8 815.8 399.4 817.6 397.2C819.3 394.9 821.1 392.7 822.9 390.7C824.8 388.7 826.7 386.8 828.6 385.0C830.6 383.3 832.6 381.6 834.6 380.1C836.6 378.7 838.7 377.3 840.8 376.1C842.9 374.9 845.0 373.9 847.2 373.0C849.3 372.1 851.5 371.4 853.7 370.8C855.8 370.2 858.0 369.8 860.2 369.5C862.4 369.3 864.7 369.1 866.9 369.2C869.1 369.2 871.3 369.4 873.5 369.8C875.6 370.1 877.8 370.7 880.0 371.3C882.1 372.0 884.3 372.8 886.4 373.8C888.5 374.8 890.6 375.9 892.6 377.1C894.7 378.4 896.7 379.8 898.7 381.4C900.6 383.0 902.6 384.7 904.4 386.5C906.3 388.3 908.1 390.3 909.9 392.4C911.7 394.5 913.4 396.7 915.0 399.1C916.7 401.4 918.2 403.9 919.7 406.4C921.3 409.0 922.7 411.7 924.1 414.5C925.4 417.3 926.7 420.2 927.9 423.1C929.1 426.1 930.3 429.2 931.3 432.3C932.3 435.4 933.3 438.6 934.2 441.9C935.0 445.2 935.8 448.5 936.5 451.9C937.2 455.3 937.8 458.8 938.3 462.3C938.8 465.7 939.2 469.3 939.5 472.8C939.8 476.4 940.0 480.0 940.2 483.5C940.3 487.1 940.2 492.5 940.2 494.3C940.3 496.1 940.3 492.5 940.2 494.3Z" fill="url(#gb2)"/>
<linearGradient id="gb3" gradientUnits="userSpaceOnUse" x1="0" y1="470" x2="0" y2="585"><stop offset="0" stop-color="#4a677b"/><stop offset="1" stop-color="#86aeca"/></linearGradient>
<path d="M935.3 495.1C935.2 496.9 935.0 502.3 934.6 505.8C934.3 509.4 933.9 512.9 933.4 516.4C932.9 519.9 932.3 523.4 931.6 526.8C930.9 530.3 930.1 533.7 929.2 537.0C928.4 540.3 927.4 543.6 926.4 546.8C925.4 550.0 924.2 553.2 923.1 556.2C921.9 559.3 920.6 562.2 919.3 565.1C917.9 568.0 916.5 570.8 915.0 573.5C913.6 576.1 912.0 578.7 910.4 581.2C908.8 583.7 907.1 586.0 905.4 588.3C903.7 590.5 901.9 592.6 900.1 594.6C898.2 596.6 896.4 598.4 894.5 600.1C892.5 601.8 890.6 603.4 888.6 604.9C886.6 606.3 884.6 607.6 882.5 608.7C880.5 609.9 878.4 610.9 876.3 611.7C874.2 612.5 872.1 613.2 870.0 613.8C867.9 614.3 865.7 614.7 863.6 614.9C861.5 615.1 859.3 615.2 857.2 615.1C855.1 615.0 852.9 614.8 850.8 614.4C848.7 614.0 846.6 613.5 844.5 612.7C842.5 612.0 840.4 611.2 838.4 610.2C836.4 609.2 834.4 608.0 832.4 606.7C830.5 605.4 828.6 604.0 826.7 602.4C824.8 600.8 823.0 599.0 821.2 597.2C819.5 595.3 817.7 593.3 816.1 591.2C814.4 589.1 812.8 586.8 811.3 584.5C809.7 582.1 808.3 579.6 806.9 577.0C805.5 574.4 804.1 571.7 802.9 569.0C801.6 566.2 800.4 563.3 799.3 560.3C798.2 557.3 797.2 554.2 796.3 551.1C795.3 548.0 794.5 544.7 793.7 541.5C792.9 538.2 792.2 534.9 791.6 531.5C791.1 528.1 790.5 524.6 790.1 521.2C789.7 517.7 789.4 514.2 789.2 510.6C788.9 507.1 788.8 503.5 788.8 500.0C788.7 496.4 788.8 492.8 788.9 489.2C789.1 485.7 789.3 482.1 789.6 478.5C790.0 475.0 790.4 471.4 790.9 467.9C791.4 464.4 792.0 460.9 792.7 457.5C793.4 454.1 794.2 450.7 795.0 447.4C795.9 444.0 796.8 440.8 797.9 437.6C798.9 434.4 800.0 431.2 801.2 428.2C802.4 425.1 803.7 422.1 805.0 419.2C806.3 416.4 807.7 413.6 809.2 410.9C810.7 408.2 812.3 405.6 813.9 403.2C815.5 400.7 817.1 398.3 818.9 396.1C820.6 393.9 822.4 391.8 824.2 389.8C826.0 387.8 827.9 385.9 829.8 384.2C831.7 382.5 833.7 380.9 835.7 379.5C837.7 378.1 839.7 376.8 841.7 375.6C843.8 374.5 845.9 373.5 848.0 372.7C850.0 371.8 852.2 371.1 854.3 370.6C856.4 370.1 858.5 369.7 860.7 369.4C862.8 369.2 864.9 369.1 867.1 369.2C869.2 369.3 871.3 369.6 873.4 370.0C875.5 370.4 877.6 370.9 879.7 371.6C881.8 372.3 883.8 373.2 885.9 374.2C887.9 375.2 889.9 376.4 891.8 377.7C893.8 379.0 895.7 380.4 897.6 382.0C899.4 383.6 901.2 385.3 903.0 387.2C904.8 389.0 906.5 391.0 908.2 393.2C909.8 395.3 911.4 397.5 913.0 399.9C914.5 402.2 916.0 404.7 917.4 407.3C918.8 409.9 920.1 412.6 921.4 415.4C922.6 418.2 923.8 421.1 924.9 424.1C926.0 427.0 927.1 430.1 928.0 433.3C928.9 436.4 929.8 439.6 930.6 442.9C931.3 446.2 932.0 449.5 932.6 452.9C933.2 456.3 933.7 459.7 934.1 463.2C934.5 466.7 934.9 470.2 935.1 473.7C935.3 477.3 935.5 480.8 935.5 484.4C935.5 488.0 935.4 493.3 935.3 495.1C935.3 496.9 935.5 493.3 935.3 495.1Z" fill="url(#gb3)"/>
<linearGradient id="gb4" gradientUnits="userSpaceOnUse" x1="0" y1="470" x2="0" y2="585"><stop offset="0" stop-color="#6f8fa6"/><stop offset="1" stop-color="#7099b4"/></linearGradient>
<path d="M925.0 496.5C924.8 498.2 924.3 503.5 923.9 507.0C923.4 510.5 922.9 514.0 922.2 517.4C921.6 520.9 920.9 524.3 920.1 527.7C919.3 531.0 918.4 534.3 917.5 537.6C916.5 540.9 915.5 544.1 914.4 547.2C913.3 550.3 912.1 553.4 910.9 556.3C909.6 559.3 908.3 562.2 907.0 565.0C905.6 567.8 904.1 570.5 902.7 573.1C901.2 575.7 899.6 578.2 898.0 580.6C896.4 582.9 894.8 585.2 893.1 587.4C891.4 589.5 889.6 591.5 887.8 593.4C886.1 595.3 884.2 597.1 882.4 598.7C880.5 600.3 878.6 601.8 876.7 603.1C874.8 604.5 872.9 605.7 870.9 606.7C869.0 607.8 867.0 608.7 865.0 609.4C863.1 610.2 861.1 610.8 859.1 611.2C857.1 611.7 855.1 612.0 853.1 612.1C851.1 612.3 849.1 612.3 847.2 612.1C845.2 611.9 843.2 611.6 841.3 611.1C839.4 610.7 837.4 610.1 835.6 609.3C833.7 608.5 831.8 607.6 830.0 606.5C828.2 605.4 826.4 604.2 824.6 602.9C822.9 601.5 821.2 600.0 819.5 598.3C817.8 596.7 816.2 594.9 814.7 593.0C813.1 591.1 811.6 589.1 810.2 586.9C808.7 584.8 807.3 582.5 806.0 580.1C804.7 577.7 803.4 575.2 802.3 572.6C801.1 570.0 800.0 567.2 798.9 564.4C797.9 561.6 796.9 558.7 796.0 555.7C795.1 552.8 794.3 549.7 793.6 546.6C792.9 543.4 792.2 540.2 791.7 536.9C791.1 533.7 790.6 530.3 790.2 527.0C789.8 523.6 789.5 520.2 789.3 516.7C789.1 513.3 788.9 509.8 788.9 506.3C788.8 502.8 788.8 499.3 789.0 495.7C789.1 492.2 789.3 488.7 789.6 485.1C789.9 481.6 790.3 478.1 790.7 474.6C791.2 471.1 791.7 467.6 792.4 464.2C793.0 460.7 793.7 457.3 794.5 453.9C795.3 450.6 796.2 447.3 797.1 444.0C798.1 440.7 799.1 437.5 800.2 434.4C801.3 431.3 802.5 428.2 803.7 425.3C805.0 422.3 806.3 419.4 807.6 416.6C809.0 413.8 810.5 411.1 811.9 408.5C813.4 405.9 815.0 403.4 816.6 401.0C818.2 398.7 819.8 396.4 821.5 394.2C823.2 392.1 825.0 390.1 826.8 388.2C828.5 386.3 830.4 384.5 832.2 382.9C834.1 381.3 836.0 379.8 837.9 378.5C839.8 377.1 841.7 375.9 843.7 374.9C845.6 373.8 847.6 372.9 849.6 372.2C851.5 371.4 853.5 370.8 855.5 370.4C857.5 369.9 859.5 369.6 861.5 369.5C863.5 369.3 865.5 369.3 867.4 369.5C869.4 369.7 871.4 370.0 873.3 370.5C875.2 370.9 877.2 371.5 879.0 372.3C880.9 373.1 882.8 374.0 884.6 375.1C886.4 376.2 888.2 377.4 890.0 378.7C891.7 380.1 893.4 381.6 895.1 383.3C896.8 384.9 898.4 386.7 899.9 388.6C901.5 390.5 903.0 392.5 904.4 394.7C905.9 396.8 907.3 399.1 908.6 401.5C909.9 403.9 911.2 406.4 912.3 409.0C913.5 411.6 914.6 414.4 915.7 417.2C916.7 420.0 917.7 422.9 918.6 425.9C919.5 428.8 920.3 431.9 921.0 435.0C921.7 438.2 922.4 441.4 922.9 444.7C923.5 447.9 924.0 451.3 924.4 454.6C924.8 458.0 925.1 461.4 925.3 464.9C925.5 468.3 925.7 471.8 925.7 475.3C925.8 478.8 925.8 482.3 925.6 485.9C925.5 489.4 925.1 494.7 925.0 496.5C924.9 498.2 925.2 494.7 925.0 496.5Z" fill="url(#gb4)"/>
<linearGradient id="gb5" gradientUnits="userSpaceOnUse" x1="0" y1="470" x2="0" y2="585"><stop offset="0" stop-color="#456175"/><stop offset="1" stop-color="#7fa6c0"/></linearGradient>
<path d="M918.2 497.1C918.0 498.8 917.4 504.1 916.8 507.5C916.3 511.0 915.6 514.4 914.9 517.8C914.2 521.2 913.4 524.6 912.6 527.9C911.7 531.2 910.8 534.5 909.8 537.7C908.8 540.9 907.7 544.1 906.5 547.2C905.4 550.2 904.2 553.3 902.9 556.2C901.6 559.1 900.3 561.9 898.9 564.7C897.5 567.4 896.1 570.1 894.6 572.6C893.1 575.1 891.5 577.6 889.9 579.9C888.4 582.2 886.7 584.4 885.0 586.5C883.4 588.6 881.6 590.6 879.9 592.4C878.1 594.2 876.3 595.9 874.5 597.5C872.7 599.1 870.9 600.5 869.0 601.8C867.2 603.1 865.3 604.2 863.4 605.2C861.5 606.2 859.6 607.1 857.7 607.8C855.8 608.5 853.9 609.0 852.0 609.4C850.1 609.8 848.2 610.1 846.3 610.2C844.5 610.3 842.6 610.2 840.7 610.0C838.8 609.8 837.0 609.4 835.2 608.9C833.4 608.4 831.5 607.8 829.8 606.9C828.0 606.1 826.3 605.2 824.6 604.1C822.9 603.0 821.2 601.7 819.6 600.3C818.0 598.9 816.4 597.4 814.9 595.7C813.4 594.1 811.9 592.3 810.5 590.3C809.1 588.4 807.7 586.3 806.4 584.2C805.1 582.0 803.8 579.7 802.7 577.3C801.5 574.9 800.4 572.4 799.3 569.8C798.3 567.1 797.3 564.4 796.4 561.6C795.5 558.8 794.7 555.9 794.0 552.9C793.2 549.9 792.5 546.9 791.9 543.7C791.3 540.6 790.8 537.4 790.4 534.2C790.0 530.9 789.6 527.6 789.3 524.2C789.1 520.9 788.9 517.5 788.8 514.1C788.7 510.6 788.7 507.2 788.7 503.7C788.8 500.2 788.9 496.7 789.1 493.2C789.4 489.7 789.7 486.2 790.1 482.7C790.5 479.2 790.9 475.7 791.5 472.3C792.0 468.8 792.7 465.4 793.4 462.0C794.1 458.6 794.9 455.2 795.7 451.9C796.6 448.6 797.5 445.3 798.5 442.1C799.5 438.9 800.6 435.7 801.8 432.6C802.9 429.6 804.1 426.5 805.4 423.6C806.7 420.7 808.0 417.9 809.4 415.1C810.8 412.4 812.2 409.7 813.7 407.2C815.2 404.7 816.8 402.2 818.4 399.9C819.9 397.6 821.6 395.4 823.3 393.3C824.9 391.2 826.7 389.2 828.4 387.4C830.2 385.6 832.0 383.9 833.8 382.3C835.6 380.7 837.4 379.3 839.3 378.0C841.1 376.7 843.0 375.6 844.9 374.6C846.8 373.6 848.7 372.7 850.6 372.0C852.5 371.3 854.4 370.8 856.3 370.4C858.2 370.0 860.1 369.7 862.0 369.6C863.8 369.5 865.7 369.6 867.6 369.8C869.5 370.0 871.3 370.4 873.1 370.9C874.9 371.4 876.8 372.0 878.5 372.9C880.3 373.7 882.0 374.6 883.7 375.7C885.4 376.8 887.1 378.1 888.7 379.5C890.3 380.9 891.9 382.4 893.4 384.1C894.9 385.7 896.4 387.5 897.8 389.5C899.2 391.4 900.6 393.5 901.9 395.6C903.2 397.8 904.5 400.1 905.6 402.5C906.8 404.9 907.9 407.4 909.0 410.0C910.0 412.7 911.0 415.4 911.9 418.2C912.8 421.0 913.6 423.9 914.3 426.9C915.1 429.9 915.8 432.9 916.4 436.1C917.0 439.2 917.5 442.4 917.9 445.6C918.3 448.9 918.7 452.2 919.0 455.6C919.2 458.9 919.4 462.3 919.5 465.7C919.6 469.2 919.6 472.6 919.6 476.1C919.5 479.6 919.4 483.1 919.2 486.6C918.9 490.1 918.4 495.3 918.2 497.1C918.1 498.8 918.5 495.3 918.2 497.1Z" fill="url(#gb5)"/>
</g>
</g>
<g clip-path="url(#cSil)"><g clip-path="url(#cE2)">
<path d="M911.4 497.5C911.1 499.2 910.4 504.4 909.7 507.8C909.1 511.2 908.4 514.6 907.6 518.0C906.8 521.4 905.9 524.7 905.0 528.0C904.1 531.2 903.1 534.5 902.1 537.6C901.0 540.8 899.9 543.9 898.7 546.9C897.5 549.9 896.3 552.9 895.0 555.8C893.7 558.6 892.3 561.4 890.9 564.1C889.5 566.8 888.0 569.4 886.5 571.9C885.0 574.4 883.5 576.8 881.9 579.0C880.3 581.3 878.7 583.5 877.0 585.5C875.4 587.5 873.7 589.4 872.0 591.2C870.3 593.0 868.5 594.6 866.7 596.2C865.0 597.7 863.2 599.1 861.4 600.3C859.6 601.5 857.8 602.6 856.0 603.6C854.2 604.5 852.3 605.3 850.5 606.0C848.7 606.6 846.9 607.1 845.0 607.5C843.2 607.9 841.4 608.1 839.6 608.1C837.8 608.2 836.1 608.1 834.3 607.8C832.5 607.6 830.8 607.2 829.1 606.6C827.4 606.1 825.7 605.4 824.1 604.6C822.4 603.7 820.8 602.7 819.2 601.6C817.7 600.5 816.1 599.2 814.6 597.8C813.2 596.3 811.7 594.8 810.3 593.1C808.9 591.4 807.6 589.6 806.3 587.7C805.1 585.7 803.8 583.7 802.7 581.5C801.5 579.3 800.4 577.0 799.4 574.6C798.3 572.2 797.4 569.6 796.5 567.0C795.6 564.4 794.7 561.7 794.0 558.9C793.2 556.1 792.5 553.2 791.9 550.2C791.3 547.2 790.8 544.2 790.3 541.1C789.9 538.0 789.5 534.8 789.2 531.5C788.9 528.3 788.7 525.0 788.5 521.7C788.4 518.3 788.3 515.0 788.3 511.6C788.3 508.2 788.4 504.7 788.6 501.3C788.8 497.8 789.0 494.4 789.4 490.9C789.7 487.4 790.1 484.0 790.6 480.5C791.1 477.1 791.6 473.6 792.3 470.2C792.9 466.8 793.6 463.4 794.4 460.0C795.2 456.6 796.1 453.3 797.0 450.0C797.9 446.8 798.9 443.5 799.9 440.4C801.0 437.2 802.1 434.1 803.3 431.1C804.5 428.1 805.7 425.1 807.0 422.2C808.3 419.4 809.7 416.6 811.1 413.9C812.5 411.2 814.0 408.6 815.5 406.1C817.0 403.6 818.5 401.2 820.1 399.0C821.7 396.7 823.3 394.5 825.0 392.5C826.6 390.5 828.3 388.6 830.0 386.8C831.7 385.0 833.5 383.4 835.3 381.8C837.0 380.3 838.8 378.9 840.6 377.7C842.4 376.5 844.2 375.4 846.0 374.4C847.8 373.5 849.7 372.7 851.5 372.0C853.3 371.4 855.1 370.9 857.0 370.5C858.8 370.1 860.6 369.9 862.4 369.9C864.2 369.8 865.9 369.9 867.7 370.2C869.5 370.4 871.2 370.8 872.9 371.4C874.6 371.9 876.3 372.6 877.9 373.4C879.6 374.3 881.2 375.3 882.8 376.4C884.3 377.5 885.9 378.8 887.4 380.2C888.8 381.7 890.3 383.2 891.7 384.9C893.1 386.6 894.4 388.4 895.7 390.3C896.9 392.3 898.2 394.3 899.3 396.5C900.5 398.7 901.6 401.0 902.6 403.4C903.7 405.8 904.6 408.4 905.5 411.0C906.4 413.6 907.3 416.3 908.0 419.1C908.8 421.9 909.5 424.8 910.1 427.8C910.7 430.8 911.2 433.8 911.7 436.9C912.1 440.0 912.5 443.2 912.8 446.5C913.1 449.7 913.3 453.0 913.5 456.3C913.6 459.7 913.7 463.0 913.7 466.4C913.7 469.8 913.6 473.3 913.4 476.7C913.2 480.2 913.0 483.6 912.6 487.1C912.3 490.6 911.6 495.8 911.4 497.5C911.2 499.2 911.7 495.8 911.4 497.5Z" fill="#fff"/>
<path d="M906.2 628.7C904.6 628.6 899.9 628.6 896.8 628.4C893.7 628.1 890.6 627.7 887.5 627.1C884.4 626.5 881.2 625.8 878.2 624.8C875.1 623.9 872.0 622.8 869.0 621.6C865.9 620.4 862.9 619.0 860.0 617.5C857.0 615.9 854.1 614.2 851.3 612.4C848.4 610.5 845.6 608.6 842.9 606.4C840.2 604.3 837.5 602.1 834.9 599.7C832.3 597.3 829.8 594.8 827.4 592.2C825.0 589.6 822.6 586.8 820.4 583.9C818.1 581.1 816.0 578.1 813.9 575.1C811.9 572.0 810.0 568.9 808.1 565.6C806.3 562.4 804.6 559.1 803.0 555.7C801.4 552.3 799.9 548.8 798.6 545.3C797.2 541.8 796.0 538.2 794.9 534.6C793.8 531.0 792.8 527.3 792.0 523.6C791.1 519.9 790.4 516.2 789.8 512.4C789.3 508.7 788.8 504.9 788.5 501.2C788.2 497.4 788.1 493.7 788.0 489.9C788.0 486.2 788.1 482.5 788.4 478.8C788.6 475.1 789.0 471.4 789.5 467.8C790.1 464.2 790.7 460.6 791.5 457.1C792.3 453.5 793.2 450.1 794.3 446.7C795.3 443.3 796.5 439.9 797.8 436.7C799.1 433.5 800.6 430.3 802.1 427.2C803.7 424.2 805.4 421.2 807.1 418.3C808.9 415.5 810.8 412.7 812.8 410.1C814.8 407.5 816.9 404.9 819.1 402.6C821.3 400.2 823.7 397.9 826.0 395.8C828.4 393.6 830.9 391.7 833.5 389.8C836.0 388.0 838.7 386.3 841.4 384.7C844.1 383.2 846.9 381.8 849.7 380.5C852.5 379.3 855.4 378.2 858.4 377.3C861.3 376.3 864.3 375.6 867.3 375.0C870.3 374.4 873.4 373.9 876.5 373.6C879.5 373.4 882.6 373.3 885.7 373.3C888.8 373.4 892.0 373.6 895.1 374.0C898.2 374.4 902.9 375.4 904.4 375.6" stroke="#a3c2d6" stroke-width="4.6" stroke-opacity=".9"/>
<path d="M800.0 548.0L805.0 550.0L813.0 561.0L824.0 570.0L830.0 581.0L835.0 596.0L842.0 606.0L834.0 602.0L818.0 584.0L807.0 566.0Z" fill="#9fc6df" stroke="#5b7f98" stroke-width=".8"/>
<path d="M862.0 369.6C862.9 369.6 865.7 369.6 867.6 369.8C869.5 370.0 871.3 370.4 873.1 370.9C874.9 371.4 876.8 372.0 878.5 372.9C880.3 373.7 882.0 374.6 883.7 375.7C885.4 376.8 887.1 378.1 888.7 379.5C890.3 380.9 891.9 382.4 893.4 384.1C894.9 385.7 896.4 387.5 897.8 389.5C899.2 391.4 900.6 393.5 901.9 395.6C903.2 397.8 904.5 400.1 905.6 402.5C906.8 404.9 907.9 407.4 909.0 410.0C910.0 412.7 911.0 415.4 911.9 418.2C912.8 421.0 913.6 423.9 914.3 426.9C915.1 429.9 915.8 432.9 916.4 436.1C917.0 439.2 917.5 442.4 917.9 445.6C918.3 448.9 918.7 452.2 919.0 455.6C919.2 458.9 919.4 462.3 919.5 465.7C919.6 469.2 919.6 472.6 919.6 476.1C919.5 479.6 919.4 483.1 919.2 486.6C918.9 490.1 918.6 493.6 918.2 497.1C917.8 500.6 917.4 504.1 916.8 507.5C916.3 511.0 915.6 514.4 914.9 517.8C914.2 521.2 913.4 524.6 912.6 527.9C911.7 531.2 910.8 534.5 909.8 537.7C908.8 540.9 907.7 544.1 906.5 547.2C905.4 550.2 904.2 553.3 902.9 556.2C901.6 559.1 900.3 561.9 898.9 564.7C897.5 567.4 896.1 570.1 894.6 572.6C893.1 575.1 891.5 577.6 889.9 579.9C888.4 582.2 886.7 584.4 885.0 586.5C883.4 588.6 881.6 590.6 879.9 592.4C878.1 594.2 876.3 595.9 874.5 597.5C872.7 599.1 870.9 600.5 869.0 601.8C867.2 603.1 865.3 604.2 863.4 605.2C861.5 606.2 859.6 607.1 857.7 607.8C855.8 608.5 853.9 609.0 852.0 609.4C850.1 609.8 848.2 610.1 846.3 610.2C844.5 610.3 842.6 610.2 840.7 610.0C838.8 609.8 837.0 609.4 835.2 608.9C833.4 608.4 831.5 607.8 829.8 606.9C828.0 606.1 826.3 605.2 824.6 604.1C822.9 603.0 821.2 601.7 819.6 600.3C818.0 598.9 816.4 597.4 814.9 595.7C813.4 594.1 811.9 592.3 810.5 590.3C809.1 588.4 807.1 585.2 806.4 584.2" stroke="#22394b" stroke-width="1.0" stroke-opacity="0.72" stroke-linejoin="round" stroke-linecap="round"/>
<path d="M861.5 369.5C862.5 369.5 865.5 369.3 867.4 369.5C869.4 369.7 871.4 370.0 873.3 370.5C875.2 370.9 877.2 371.5 879.0 372.3C880.9 373.1 882.8 374.0 884.6 375.1C886.4 376.2 888.2 377.4 890.0 378.7C891.7 380.1 893.4 381.6 895.1 383.3C896.8 384.9 898.4 386.7 899.9 388.6C901.5 390.5 903.0 392.5 904.4 394.7C905.9 396.8 907.3 399.1 908.6 401.5C909.9 403.9 911.2 406.4 912.3 409.0C913.5 411.6 914.6 414.4 915.7 417.2C916.7 420.0 917.7 422.9 918.6 425.9C919.5 428.8 920.3 431.9 921.0 435.0C921.7 438.2 922.4 441.4 922.9 444.7C923.5 447.9 924.0 451.3 924.4 454.6C924.8 458.0 925.1 461.4 925.3 464.9C925.5 468.3 925.7 471.8 925.7 475.3C925.8 478.8 925.8 482.3 925.6 485.9C925.5 489.4 925.3 492.9 925.0 496.5C924.7 500.0 924.3 503.5 923.9 507.0C923.4 510.5 922.9 514.0 922.2 517.4C921.6 520.9 920.9 524.3 920.1 527.7C919.3 531.0 918.4 534.3 917.5 537.6C916.5 540.9 915.5 544.1 914.4 547.2C913.3 550.3 912.1 553.4 910.9 556.3C909.6 559.3 908.3 562.2 907.0 565.0C905.6 567.8 904.1 570.5 902.7 573.1C901.2 575.7 899.6 578.2 898.0 580.6C896.4 582.9 894.8 585.2 893.1 587.4C891.4 589.5 889.6 591.5 887.8 593.4C886.1 595.3 884.2 597.1 882.4 598.7C880.5 600.3 878.6 601.8 876.7 603.1C874.8 604.5 872.9 605.7 870.9 606.7C869.0 607.8 867.0 608.7 865.0 609.4C863.1 610.2 861.1 610.8 859.1 611.2C857.1 611.7 855.1 612.0 853.1 612.1C851.1 612.3 849.1 612.3 847.2 612.1C845.2 611.9 843.2 611.6 841.3 611.1C839.4 610.7 837.4 610.1 835.6 609.3C833.7 608.5 831.8 607.6 830.0 606.5C828.2 605.4 826.4 604.2 824.6 602.9C822.9 601.5 821.2 600.0 819.5 598.3C817.8 596.7 816.2 594.9 814.7 593.0C813.1 591.1 810.9 587.9 810.2 586.9" stroke="#22394b" stroke-width="1.0" stroke-opacity="0.72" stroke-linejoin="round" stroke-linecap="round"/>
<path d="M860.7 369.4C861.7 369.4 864.9 369.1 867.1 369.2C869.2 369.3 871.3 369.6 873.4 370.0C875.5 370.4 877.6 370.9 879.7 371.6C881.8 372.3 883.8 373.2 885.9 374.2C887.9 375.2 889.9 376.4 891.8 377.7C893.8 379.0 895.7 380.4 897.6 382.0C899.4 383.6 901.2 385.3 903.0 387.2C904.8 389.0 906.5 391.0 908.2 393.2C909.8 395.3 911.4 397.5 913.0 399.9C914.5 402.2 916.0 404.7 917.4 407.3C918.8 409.9 920.1 412.6 921.4 415.4C922.6 418.2 923.8 421.1 924.9 424.1C926.0 427.0 927.1 430.1 928.0 433.3C928.9 436.4 929.8 439.6 930.6 442.9C931.3 446.2 932.0 449.5 932.6 452.9C933.2 456.3 933.7 459.7 934.1 463.2C934.5 466.7 934.9 470.2 935.1 473.7C935.3 477.3 935.5 480.8 935.5 484.4C935.5 488.0 935.5 491.6 935.3 495.1C935.2 498.7 935.0 502.3 934.6 505.8C934.3 509.4 933.9 512.9 933.4 516.4C932.9 519.9 932.3 523.4 931.6 526.8C930.9 530.3 930.1 533.7 929.2 537.0C928.4 540.3 927.4 543.6 926.4 546.8C925.4 550.0 924.2 553.2 923.1 556.2C921.9 559.3 920.6 562.2 919.3 565.1C917.9 568.0 916.5 570.8 915.0 573.5C913.6 576.1 912.0 578.7 910.4 581.2C908.8 583.7 907.1 586.0 905.4 588.3C903.7 590.5 901.9 592.6 900.1 594.6C898.2 596.6 896.4 598.4 894.5 600.1C892.5 601.8 890.6 603.4 888.6 604.9C886.6 606.3 884.6 607.6 882.5 608.7C880.5 609.9 878.4 610.9 876.3 611.7C874.2 612.5 872.1 613.2 870.0 613.8C867.9 614.3 865.7 614.7 863.6 614.9C861.5 615.1 859.3 615.2 857.2 615.1C855.1 615.0 852.9 614.8 850.8 614.4C848.7 614.0 846.6 613.5 844.5 612.7C842.5 612.0 840.4 611.2 838.4 610.2C836.4 609.2 834.4 608.0 832.4 606.7C830.5 605.4 828.6 604.0 826.7 602.4C824.8 600.8 823.0 599.0 821.2 597.2C819.5 595.3 816.9 592.2 816.1 591.2" stroke="#22394b" stroke-width="1.0" stroke-opacity="0.72" stroke-linejoin="round" stroke-linecap="round"/>
<path d="M857.5 371.1C858.8 370.9 862.6 370.1 865.2 369.9C867.8 369.6 870.4 369.5 873.1 369.6C875.7 369.7 878.3 369.9 880.9 370.3C883.5 370.7 886.2 371.3 888.8 372.0C891.3 372.7 893.9 373.6 896.5 374.6C899.0 375.7 901.6 376.9 904.1 378.2C906.6 379.5 909.1 381.0 911.5 382.7C913.9 384.3 916.3 386.1 918.6 388.0C920.9 389.9 923.2 391.9 925.4 394.1C927.6 396.3 929.8 398.6 931.8 401.0C933.9 403.5 935.9 406.0 937.9 408.7C939.8 411.4 941.7 414.1 943.4 417.0C945.2 419.9 946.9 422.9 948.5 425.9C950.1 429.0 951.6 432.2 953.0 435.4C954.4 438.6 955.7 441.9 956.9 445.3C958.1 448.7 959.3 452.1 960.3 455.6C961.3 459.1 962.2 462.7 963.0 466.3C963.7 469.8 964.4 473.5 965.0 477.1C965.6 480.7 966.0 484.4 966.4 488.1C966.7 491.8 966.9 495.5 967.0 499.2C967.2 502.9 967.2 506.6 967.1 510.2C966.9 513.9 966.7 517.5 966.4 521.2C966.0 524.8 965.6 528.4 965.0 531.9C964.4 535.4 963.8 538.9 963.0 542.4C962.2 545.8 961.3 549.2 960.3 552.5C959.3 555.8 958.2 559.1 957.0 562.2C955.8 565.4 954.5 568.4 953.1 571.4C951.6 574.4 950.1 577.3 948.5 580.1C947.0 582.8 945.3 585.5 943.5 588.0C941.7 590.6 939.9 593.0 937.9 595.3C936.0 597.7 934.0 599.8 931.9 601.9C929.9 603.9 927.7 605.9 925.5 607.6C923.3 609.4 921.0 611.1 918.7 612.5C916.4 614.0 914.0 615.4 911.6 616.6C909.1 617.7 906.7 618.8 904.2 619.7C901.7 620.5 899.1 621.3 896.6 621.8C894.0 622.4 891.4 622.8 888.8 623.0C886.3 623.3 883.6 623.3 881.0 623.3C878.4 623.2 875.8 622.9 873.2 622.5C870.5 622.1 867.9 621.6 865.3 620.9C862.7 620.1 860.1 619.3 857.6 618.2C855.0 617.2 852.5 616.0 850.0 614.7C847.5 613.3 845.0 611.9 842.6 610.2C840.2 608.6 836.7 605.8 835.5 604.9" stroke="#22394b" stroke-width="1.0" stroke-opacity="0.67" stroke-linejoin="round" stroke-linecap="round"/>
<path d="M846.0 374.4C846.9 374.0 849.7 372.7 851.5 372.0C853.3 371.4 855.1 370.9 857.0 370.5C858.8 370.1 860.6 369.9 862.4 369.9C864.2 369.8 865.9 369.9 867.7 370.2C869.5 370.4 871.2 370.8 872.9 371.4C874.6 371.9 876.3 372.6 877.9 373.4C879.6 374.3 881.2 375.3 882.8 376.4C884.3 377.5 885.9 378.8 887.4 380.2C888.8 381.7 890.3 383.2 891.7 384.9C893.1 386.6 894.4 388.4 895.7 390.3C896.9 392.3 898.2 394.3 899.3 396.5C900.5 398.7 901.6 401.0 902.6 403.4C903.7 405.8 904.6 408.4 905.5 411.0C906.4 413.6 907.3 416.3 908.0 419.1C908.8 421.9 909.5 424.8 910.1 427.8C910.7 430.8 911.2 433.8 911.7 436.9C912.1 440.0 912.5 443.2 912.8 446.5C913.1 449.7 913.3 453.0 913.5 456.3C913.6 459.7 913.7 463.0 913.7 466.4C913.7 469.8 913.6 473.3 913.4 476.7C913.2 480.2 913.0 483.6 912.6 487.1C912.3 490.6 911.9 494.0 911.4 497.5C910.9 500.9 910.4 504.4 909.7 507.8C909.1 511.2 908.4 514.6 907.6 518.0C906.8 521.4 905.9 524.7 905.0 528.0C904.1 531.2 903.1 534.5 902.1 537.6C901.0 540.8 899.9 543.9 898.7 546.9C897.5 549.9 896.3 552.9 895.0 555.8C893.7 558.6 892.3 561.4 890.9 564.1C889.5 566.8 888.0 569.4 886.5 571.9C885.0 574.4 883.5 576.8 881.9 579.0C880.3 581.3 878.7 583.5 877.0 585.5C875.4 587.5 873.7 589.4 872.0 591.2C870.3 593.0 868.5 594.6 866.7 596.2C865.0 597.7 863.2 599.1 861.4 600.3C859.6 601.5 857.8 602.6 856.0 603.6C854.2 604.5 852.3 605.3 850.5 606.0C848.7 606.6 846.9 607.1 845.0 607.5C843.2 607.9 841.4 608.1 839.6 608.1C837.8 608.2 836.1 608.1 834.3 607.8C832.5 607.6 830.8 607.2 829.1 606.6C827.4 606.1 825.7 605.4 824.1 604.6C822.4 603.7 820.8 602.7 819.2 601.6C817.7 600.5 816.1 599.2 814.6 597.8C813.2 596.3 811.7 594.8 810.3 593.1C808.9 591.4 807.0 588.6 806.3 587.7" stroke="#22394b" stroke-width="1.125" stroke-opacity="0.72" stroke-linejoin="round" stroke-linecap="round"/>
</g></g>
<g clip-path="url(#cSil)">
<linearGradient id="gBoss" gradientUnits="userSpaceOnUse" x1="0" y1="335" x2="0" y2="610">
<stop offset="0" stop-color="#7a9fb9"/><stop offset=".3" stop-color="#64849b"/><stop offset=".53" stop-color="#58778c"/><stop offset="1" stop-color="#4f6b7f"/></linearGradient>
<path d="M1020.0 392.0C1020.8 399.4 1023.5 423.7 1025.0 436.7C1026.5 449.7 1028.0 458.9 1029.0 470.0C1030.0 481.1 1030.7 491.6 1031.0 503.3C1031.3 515.0 1031.7 528.5 1031.0 540.0C1030.3 551.5 1028.8 563.7 1027.0 572.0C1025.2 580.3 1021.2 587.0 1020.0 590.0L1040.0 592.0C1041.1 589.7 1045.6 587.0 1046.7 578.3C1047.8 569.6 1047.0 552.5 1046.5 540.0C1046.0 527.5 1045.2 515.0 1044.0 503.3C1042.8 491.6 1040.8 481.1 1039.0 470.0C1037.2 458.9 1034.9 448.0 1033.3 436.7C1031.7 425.4 1029.9 407.8 1029.2 402.0Z" fill="#84abc6"/>
<path d="M1029.2 402.0C1029.9 407.8 1031.7 425.4 1033.3 436.7C1034.9 448.0 1037.2 458.9 1039.0 470.0C1040.8 481.1 1042.8 491.6 1044.0 503.3C1045.2 515.0 1046.0 527.5 1046.5 540.0C1047.0 552.5 1047.8 569.6 1046.7 578.3C1045.6 587.0 1041.1 589.7 1040.0 592.0L1042.7 591.2C1043.7 589.0 1047.6 586.8 1048.6 578.3C1049.6 569.8 1049.1 552.5 1048.8 540.0C1048.4 527.5 1047.7 515.0 1046.4 503.3C1045.2 491.6 1043.1 481.1 1041.3 470.0C1039.4 458.9 1037.0 448.1 1035.3 436.7C1033.6 425.3 1032.0 407.6 1031.3 401.8Z" fill="#b5d8ed"/>
<path d="M1031.0 401.8C1031.6 407.6 1033.3 425.3 1035.0 436.7C1036.6 448.1 1039.1 458.9 1040.9 470.0C1042.7 481.1 1044.8 491.6 1046.0 503.3C1047.2 515.0 1048.0 527.5 1048.4 540.0C1048.8 552.5 1049.3 569.8 1048.3 578.3C1047.3 586.8 1043.3 589.1 1042.2 591.3L1045.0 590.5C1045.8 588.4 1049.2 586.7 1050.2 578.3C1051.1 569.9 1051.0 552.5 1050.7 540.0C1050.4 527.5 1049.7 515.0 1048.4 503.3C1047.2 491.6 1045.1 481.1 1043.2 470.0C1041.3 458.9 1038.7 448.1 1037.0 436.7C1035.3 425.3 1033.7 407.4 1033.0 401.6Z" fill="#bfe0f3"/>
<path d="M1032.7 401.6C1033.4 407.5 1035.0 425.3 1036.6 436.7C1038.3 448.1 1040.9 458.9 1042.8 470.0C1044.7 481.1 1046.8 491.6 1048.0 503.3C1049.2 515.0 1050.0 527.5 1050.3 540.0C1050.6 552.5 1050.8 569.9 1049.9 578.3C1048.9 586.7 1045.4 588.5 1044.5 590.6L1047.2 589.8C1048.0 587.9 1050.9 586.6 1051.8 578.3C1052.7 570.0 1052.8 552.5 1052.6 540.0C1052.4 527.5 1051.7 515.0 1050.4 503.3C1049.2 491.6 1047.0 481.1 1045.1 470.0C1043.1 458.9 1040.4 448.1 1038.6 436.7C1036.9 425.3 1035.4 407.2 1034.8 401.4Z" fill="#aacfe6"/>
<path d="M1034.5 401.4C1035.1 407.3 1036.6 425.3 1038.3 436.7C1040.0 448.1 1042.8 458.9 1044.7 470.0C1046.6 481.1 1048.8 491.6 1050.0 503.3C1051.2 515.0 1052.0 527.5 1052.2 540.0C1052.4 552.5 1052.3 570.0 1051.4 578.3C1050.5 586.6 1047.5 588.0 1046.8 589.9L1049.5 589.1C1050.1 587.3 1052.5 586.5 1053.3 578.3C1054.2 570.1 1054.6 552.5 1054.5 540.0C1054.3 527.5 1053.7 515.0 1052.4 503.3C1051.2 491.6 1049.0 481.1 1047.0 470.0C1045.0 458.9 1042.1 448.2 1040.3 436.7C1038.6 425.2 1037.2 407.1 1036.5 401.2Z" fill="#9bc1da"/>
<path d="M1036.2 401.2C1036.8 407.1 1038.2 425.2 1040.0 436.7C1041.7 448.2 1044.6 458.9 1046.6 470.0C1048.6 481.1 1050.8 491.6 1052.0 503.3C1053.2 515.0 1053.9 527.5 1054.1 540.0C1054.3 552.5 1053.9 570.1 1053.0 578.3C1052.2 586.5 1049.7 587.4 1049.0 589.2L1051.7 588.4C1052.2 586.7 1054.1 586.4 1054.9 578.3C1055.7 570.2 1056.5 552.5 1056.4 540.0C1056.3 527.5 1055.7 515.0 1054.4 503.3C1053.2 491.6 1050.9 481.1 1048.9 470.0C1046.8 458.9 1043.7 448.2 1042.0 436.7C1040.2 425.2 1038.9 406.9 1038.3 401.0Z" fill="#90b7d1"/>
<path d="M1038.0 401.0C1038.6 406.9 1039.9 425.2 1041.7 436.7C1043.4 448.2 1046.4 458.9 1048.5 470.0C1050.6 481.1 1052.8 491.6 1054.0 503.3C1055.2 515.0 1055.9 527.5 1056.0 540.0C1056.1 552.5 1055.4 570.2 1054.6 578.3C1053.8 586.4 1051.8 586.8 1051.2 588.5L1054.0 587.7C1054.4 586.1 1055.8 586.2 1056.5 578.3C1057.2 570.4 1058.3 552.5 1058.3 540.0C1058.3 527.5 1057.7 515.0 1056.4 503.3C1055.2 491.6 1052.9 481.1 1050.8 470.0C1048.7 458.9 1045.4 448.2 1043.7 436.7C1041.9 425.2 1040.7 406.8 1040.0 400.8Z" fill="#86adc8"/>
<path d="M1039.7 400.8C1040.3 406.8 1041.5 425.2 1043.3 436.7C1045.1 448.2 1048.3 458.9 1050.4 470.0C1052.5 481.1 1054.8 491.6 1056.0 503.3C1057.2 515.0 1057.9 527.5 1057.9 540.0C1057.9 552.5 1056.9 570.3 1056.2 578.3C1055.4 586.3 1053.9 586.2 1053.5 587.8L1056.2 587.0C1056.5 585.5 1057.4 586.1 1058.1 578.3C1058.7 570.5 1060.1 552.5 1060.2 540.0C1060.2 527.5 1059.7 515.0 1058.4 503.3C1057.2 491.6 1054.9 481.1 1052.7 470.0C1050.5 458.9 1047.1 448.3 1045.3 436.7C1043.5 425.1 1042.4 406.6 1041.8 400.6Z" fill="#7b9fb9"/>
<path d="M1041.5 400.6C1042.0 406.6 1043.2 425.1 1045.0 436.7C1046.8 448.3 1050.1 458.9 1052.3 470.0C1054.5 481.1 1056.8 491.6 1058.0 503.3C1059.2 515.0 1059.8 527.5 1059.8 540.0C1059.8 552.5 1058.4 570.4 1057.8 578.3C1057.1 586.1 1056.1 585.6 1055.8 587.1L1058.5 586.3C1058.7 584.9 1059.1 586.0 1059.7 578.3C1060.3 570.6 1062.0 552.5 1062.1 540.0C1062.2 527.5 1061.7 515.0 1060.4 503.3C1059.2 491.6 1056.8 481.1 1054.6 470.0C1052.3 458.9 1048.8 448.3 1047.0 436.7C1045.2 425.1 1044.1 406.4 1043.5 400.4Z" fill="#7092aa"/>
<path d="M1043.2 400.4C1043.8 406.4 1044.8 425.1 1046.7 436.7C1048.5 448.3 1052.0 458.9 1054.2 470.0C1056.4 481.1 1058.8 491.6 1060.0 503.3C1061.2 515.0 1061.8 527.5 1061.7 540.0C1061.6 552.5 1060.0 570.6 1059.3 578.3C1058.7 586.0 1058.2 585.0 1058.0 586.4L1060.7 585.6C1060.8 584.3 1060.7 585.9 1061.2 578.3C1061.8 570.7 1063.8 552.5 1064.0 540.0C1064.2 527.5 1063.7 515.0 1062.4 503.3C1061.2 491.6 1058.8 481.1 1056.5 470.0C1054.2 458.9 1050.5 448.3 1048.7 436.7C1046.8 425.1 1045.9 406.2 1045.3 400.2Z" fill="#66879e"/>
<path d="M1045.0 400.2C1045.5 406.3 1046.5 425.1 1048.3 436.7C1050.2 448.3 1053.8 458.9 1056.1 470.0C1058.4 481.1 1060.8 491.6 1062.0 503.3C1063.2 515.0 1063.8 527.5 1063.6 540.0C1063.4 552.5 1061.5 570.7 1060.9 578.3C1060.4 585.9 1060.4 584.5 1060.2 585.7L1063.0 584.9C1062.9 583.8 1062.3 585.8 1062.8 578.3C1063.3 570.8 1065.6 552.5 1065.9 540.0C1066.1 527.5 1065.7 515.0 1064.4 503.3C1063.2 491.6 1060.7 481.1 1058.4 470.0C1056.0 458.9 1052.2 448.4 1050.3 436.7C1048.4 425.0 1047.6 406.1 1047.0 400.0Z" fill="#5f7e94"/>
<path d="M1046.7 400.0L1054.2 393.3L1078.0 367.0L1103.3 340.0L1110.0 333.0L1124.0 344.0L1178.0 400.0L1185.0 632.0L1159.4 631.7L1137.2 626.1L1109.4 613.6L1081.7 595.6L1062.5 580.0L1065.5 540.0L1064.0 503.3L1058.0 470.0L1050.0 436.7Z" fill="url(#gBoss)"/>
<path d="M1061.5 579.6C1064.9 582.3 1073.7 589.9 1081.7 595.6C1089.7 601.3 1100.2 608.5 1109.4 613.6C1118.7 618.7 1128.9 623.1 1137.2 626.1C1145.5 629.1 1151.4 630.7 1159.4 631.7C1167.4 632.7 1177.4 633.0 1185.0 632.0C1192.6 631.0 1201.7 627.0 1205.0 626.0L1204.6 627.2C1201.1 628.4 1191.5 633.1 1183.8 634.4C1176.1 635.7 1166.1 635.7 1158.3 635.0C1150.6 634.2 1145.4 632.7 1137.2 629.7C1129.0 626.6 1118.7 622.1 1109.4 616.9C1100.2 611.7 1089.9 604.3 1081.7 598.3C1073.5 592.3 1063.6 584.0 1060.0 581.1Z" fill="#4d687b"/>
<path d="M1060.2 580.9C1063.8 583.7 1073.5 592.0 1081.7 597.9C1089.9 603.8 1100.2 611.2 1109.4 616.4C1118.7 621.6 1129.0 626.1 1137.2 629.1C1145.4 632.1 1150.7 633.7 1158.5 634.5C1166.3 635.3 1176.3 635.2 1184.0 634.0C1191.7 632.8 1201.2 628.2 1204.7 627.0L1204.3 628.2C1200.7 629.5 1190.6 634.8 1182.8 636.4C1175.0 638.0 1165.0 638.3 1157.4 637.7C1149.8 637.1 1145.2 635.7 1137.2 632.7C1129.2 629.7 1118.7 625.0 1109.4 619.7C1100.2 614.3 1090.1 606.8 1081.7 600.6C1073.3 594.4 1062.6 585.4 1058.7 582.4Z" fill="#547186"/>
<path d="M1059.0 582.1C1062.8 585.1 1073.3 594.0 1081.7 600.2C1090.1 606.4 1100.2 613.8 1109.4 619.2C1118.7 624.5 1129.2 629.1 1137.2 632.1C1145.2 635.1 1149.9 636.6 1157.6 637.2C1165.2 637.9 1175.2 637.5 1183.0 636.0C1190.8 634.5 1200.8 629.3 1204.3 628.0L1203.9 629.2C1200.2 630.7 1189.7 636.5 1181.8 638.4C1173.9 640.2 1163.9 640.9 1156.5 640.5C1149.1 640.1 1145.0 638.7 1137.2 635.7C1129.4 632.7 1118.7 627.9 1109.4 622.5C1100.2 617.0 1090.4 609.4 1081.7 602.9C1073.0 596.4 1061.5 586.8 1057.5 583.6Z" fill="#5d7d93"/>
<path d="M1057.7 583.4C1061.7 586.6 1073.1 596.1 1081.7 602.5C1090.3 608.9 1100.2 616.5 1109.4 622.0C1118.7 627.4 1129.3 632.1 1137.2 635.2C1145.1 638.2 1149.2 639.5 1156.7 640.0C1164.1 640.5 1174.1 639.8 1182.0 638.0C1189.8 636.2 1200.3 630.5 1204.0 629.0L1203.6 630.2C1199.8 631.9 1188.8 638.2 1180.8 640.4C1172.7 642.5 1162.8 643.5 1155.6 643.3C1148.3 643.0 1144.9 641.7 1137.2 638.7C1129.5 635.7 1118.7 630.8 1109.4 625.2C1100.2 619.7 1090.6 611.9 1081.7 605.2C1072.8 598.5 1060.5 588.3 1056.2 584.9Z" fill="#6a8ea5"/>
<path d="M1056.4 584.7C1060.6 588.0 1072.9 598.1 1081.7 604.8C1090.5 611.5 1100.2 619.2 1109.4 624.7C1118.7 630.3 1129.5 635.2 1137.2 638.2C1144.9 641.2 1148.4 642.5 1155.7 642.8C1163.0 643.1 1172.9 642.1 1180.9 640.0C1188.9 637.9 1199.9 631.7 1203.7 630.0L1203.3 631.2C1199.4 633.0 1187.8 639.9 1179.7 642.4C1171.6 644.8 1161.7 646.1 1154.7 646.0C1147.6 645.9 1144.7 644.7 1137.2 641.7C1129.7 638.7 1118.7 633.7 1109.4 628.0C1100.2 622.3 1090.8 614.5 1081.7 607.5C1072.6 600.5 1059.4 589.7 1054.9 586.2Z" fill="#769db6"/>
<path d="M1055.2 585.9C1059.6 589.5 1072.7 600.2 1081.7 607.1C1090.7 614.0 1100.2 621.8 1109.4 627.5C1118.7 633.2 1129.6 638.2 1137.2 641.2C1144.8 644.2 1147.7 645.4 1154.8 645.5C1161.9 645.7 1171.8 644.4 1179.9 642.0C1188.0 639.6 1199.4 632.8 1203.3 631.0L1202.9 632.2C1198.9 634.2 1186.9 641.6 1178.7 644.4C1170.5 647.1 1160.7 648.7 1153.7 648.8C1146.8 648.9 1144.6 647.7 1137.2 644.7C1129.8 641.7 1118.7 636.6 1109.4 630.8C1100.2 625.0 1091.0 617.0 1081.7 609.8C1072.4 602.6 1058.3 591.2 1053.7 587.4Z" fill="#81aac4"/>
<path d="M1206.4 624.0C1205.0 624.5 1201.0 626.4 1198.3 627.2C1195.6 628.1 1192.8 628.8 1190.1 629.3C1187.3 629.7 1184.5 630.0 1181.8 630.1C1179.0 630.1 1176.2 630.0 1173.4 629.6C1170.7 629.2 1167.9 628.7 1165.1 627.9C1162.4 627.1 1159.6 626.1 1156.9 624.9C1154.2 623.8 1151.5 622.4 1148.9 620.8C1146.2 619.2 1143.6 617.4 1141.1 615.4C1138.5 613.5 1136.0 611.3 1133.6 609.0C1131.1 606.6 1128.7 604.1 1126.4 601.4C1124.1 598.7 1121.8 595.8 1119.6 592.8C1117.4 589.8 1115.3 586.6 1113.3 583.3C1111.3 579.9 1109.3 576.4 1107.5 572.8C1105.6 569.2 1103.9 565.4 1102.2 561.6C1100.6 557.7 1099.0 553.7 1097.5 549.6C1096.1 545.5 1094.7 541.3 1093.5 537.0C1092.3 532.7 1091.1 528.3 1090.1 523.9C1089.1 519.5 1088.2 514.9 1087.4 510.4C1086.6 505.8 1085.9 501.1 1085.4 496.5C1084.9 491.8 1084.4 487.1 1084.1 482.4C1083.8 477.7 1083.6 472.9 1083.6 468.2C1083.5 463.5 1083.6 458.7 1083.8 454.0C1083.9 449.3 1084.2 444.6 1084.7 440.0C1085.1 435.3 1085.7 430.7 1086.3 426.1C1087.0 421.6 1087.8 417.1 1088.7 412.7C1089.6 408.2 1090.6 403.9 1091.7 399.6C1092.9 395.3 1094.1 391.1 1095.5 387.1C1096.8 383.0 1098.3 379.0 1099.8 375.2C1101.4 371.3 1103.1 367.6 1104.8 364.0C1106.6 360.5 1108.4 357.0 1110.4 353.7C1112.3 350.4 1114.3 347.2 1116.4 344.3C1118.5 341.3 1120.7 338.4 1123.0 335.8C1125.2 333.1 1127.6 330.7 1130.0 328.4C1132.4 326.1 1134.8 324.0 1137.3 322.0C1139.8 320.1 1142.4 318.4 1145.0 316.8C1147.6 315.3 1150.3 314.0 1152.9 312.8C1155.6 311.7 1159.7 310.5 1161.1 310.0" stroke="#b2d6ec" stroke-width="4" stroke-opacity=".8"/>
<path d="M1268.9 466.9C1268.9 469.2 1269.0 476.0 1268.9 480.6C1268.7 485.1 1268.5 489.7 1268.2 494.2C1267.8 498.7 1267.3 503.2 1266.8 507.6C1266.2 512.0 1265.5 516.4 1264.7 520.7C1263.9 525.0 1263.0 529.3 1262.0 533.5C1261.0 537.6 1259.9 541.7 1258.6 545.7C1257.4 549.7 1256.1 553.6 1254.7 557.4C1253.2 561.1 1251.7 564.8 1250.1 568.4C1248.5 571.9 1246.8 575.3 1245.0 578.6C1243.2 581.9 1241.3 585.0 1239.4 588.0C1237.4 591.0 1235.4 593.8 1233.3 596.5C1231.2 599.1 1229.0 601.7 1226.8 604.0C1224.6 606.3 1222.3 608.5 1219.9 610.5C1217.6 612.5 1215.2 614.3 1212.8 615.9C1210.3 617.5 1207.8 619.0 1205.3 620.2C1202.8 621.5 1200.2 622.5 1197.6 623.4C1195.1 624.2 1192.5 624.9 1189.8 625.4C1187.2 625.8 1184.6 626.1 1181.9 626.2C1179.3 626.2 1176.6 626.1 1174.0 625.7C1171.4 625.4 1168.7 624.9 1166.1 624.2C1163.5 623.4 1160.9 622.5 1158.3 621.4C1155.7 620.3 1153.2 618.9 1150.7 617.4C1148.1 615.9 1145.7 614.2 1143.2 612.4C1140.8 610.5 1138.4 608.4 1136.0 606.2C1133.7 604.0 1131.4 601.6 1129.2 599.0C1127.0 596.5 1124.8 593.7 1122.7 590.8C1120.6 588.0 1118.6 584.9 1116.6 581.7C1114.7 578.5 1112.8 575.2 1111.0 571.8C1109.3 568.3 1107.5 564.7 1105.9 561.0C1104.3 557.3 1102.8 553.5 1101.4 549.5C1100.0 545.6 1098.7 541.6 1097.5 537.5C1096.2 533.4 1095.1 529.2 1094.1 524.9C1093.1 520.6 1092.2 516.3 1091.4 511.9C1090.6 507.5 1089.9 503.0 1089.4 498.6C1088.8 494.1 1088.3 489.5 1088.0 485.0C1087.7 480.5 1087.4 475.9 1087.3 471.3C1087.2 466.8 1087.2 462.2 1087.3 457.6C1087.5 453.1 1087.7 448.5 1088.0 444.0C1088.4 439.5 1088.9 435.0 1089.4 430.6C1090.0 426.2 1090.7 421.8 1091.5 417.5C1092.3 413.2 1093.2 408.9 1094.2 404.7C1095.2 400.6 1096.3 396.5 1097.6 392.5C1098.8 388.5 1100.1 384.6 1101.5 380.8C1103.0 377.1 1104.5 373.4 1106.1 369.8C1107.7 366.3 1109.4 362.9 1111.2 359.6C1113.0 356.3 1114.9 353.2 1116.8 350.2C1118.8 347.2 1120.8 344.4 1122.9 341.7C1125.0 339.1 1127.2 336.5 1129.4 334.2C1131.6 331.9 1133.9 329.7 1136.3 327.7C1138.6 325.7 1141.0 323.9 1143.4 322.3C1145.9 320.7 1148.4 319.2 1150.9 318.0C1153.4 316.7 1156.0 315.7 1158.6 314.8C1161.1 314.0 1163.7 313.3 1166.4 312.8C1169.0 312.4 1171.6 312.1 1174.3 312.0C1176.9 312.0 1179.6 312.1 1182.2 312.5C1184.8 312.8 1187.5 313.3 1190.1 314.0C1192.7 314.8 1195.3 315.7 1197.9 316.8C1200.5 317.9 1203.0 319.3 1205.5 320.8C1208.1 322.3 1210.5 324.0 1213.0 325.8C1215.4 327.7 1217.8 329.8 1220.2 332.0C1222.5 334.2 1224.8 336.6 1227.0 339.2C1229.2 341.7 1231.4 344.5 1233.5 347.4C1235.6 350.2 1237.6 353.3 1239.6 356.5C1241.5 359.7 1243.4 363.0 1245.2 366.4C1246.9 369.9 1248.7 373.5 1250.3 377.2C1251.9 380.9 1253.4 384.7 1254.8 388.7C1256.2 392.6 1257.5 396.6 1258.7 400.7C1260.0 404.8 1261.1 409.0 1262.1 413.3C1263.1 417.6 1264.0 421.9 1264.8 426.3C1265.6 430.7 1266.3 435.2 1266.8 439.6C1267.4 444.1 1267.9 448.7 1268.2 453.2C1268.5 457.7 1268.8 464.6 1268.9 466.9C1269.0 469.2 1268.9 464.6 1268.9 466.9Z" fill="#8db8d5"/>
<clipPath id="cR2"><path d="M1252.2 470.5C1252.2 472.4 1252.2 478.1 1252.1 481.9C1251.9 485.7 1251.7 489.5 1251.4 493.3C1251.1 497.0 1250.7 500.8 1250.2 504.5C1249.7 508.2 1249.1 511.8 1248.4 515.4C1247.7 519.0 1246.9 522.6 1246.1 526.1C1245.2 529.5 1244.3 532.9 1243.2 536.3C1242.2 539.6 1241.1 542.8 1239.9 546.0C1238.8 549.1 1237.5 552.2 1236.2 555.1C1234.8 558.0 1233.4 560.9 1231.9 563.6C1230.5 566.3 1228.9 568.9 1227.3 571.4C1225.7 573.9 1224.0 576.2 1222.3 578.5C1220.6 580.7 1218.8 582.8 1217.0 584.7C1215.2 586.6 1213.3 588.4 1211.4 590.1C1209.4 591.7 1207.5 593.2 1205.5 594.5C1203.5 595.9 1201.5 597.0 1199.4 598.0C1197.4 599.1 1195.3 599.9 1193.2 600.6C1191.1 601.3 1189.0 601.8 1186.8 602.2C1184.7 602.6 1182.6 602.8 1180.4 602.8C1178.3 602.8 1176.1 602.7 1174.0 602.4C1171.9 602.1 1169.7 601.6 1167.6 601.0C1165.5 600.3 1163.4 599.5 1161.3 598.6C1159.2 597.6 1157.2 596.5 1155.2 595.2C1153.1 593.9 1151.1 592.5 1149.2 590.9C1147.2 589.3 1145.3 587.6 1143.4 585.7C1141.5 583.8 1139.7 581.8 1137.9 579.6C1136.1 577.5 1134.4 575.2 1132.7 572.7C1131.0 570.3 1129.4 567.7 1127.9 565.1C1126.3 562.4 1124.8 559.6 1123.4 556.7C1122.0 553.8 1120.6 550.8 1119.4 547.6C1118.1 544.5 1116.9 541.3 1115.8 538.0C1114.7 534.7 1113.6 531.4 1112.7 527.9C1111.7 524.5 1110.9 520.9 1110.1 517.4C1109.3 513.8 1108.6 510.1 1108.0 506.5C1107.4 502.8 1106.9 499.1 1106.4 495.3C1106.0 491.6 1105.7 487.8 1105.4 484.0C1105.2 480.2 1105.1 476.3 1105.0 472.5C1105.0 468.7 1105.0 464.9 1105.1 461.1C1105.3 457.3 1105.5 453.5 1105.8 449.7C1106.1 446.0 1106.5 442.2 1107.0 438.5C1107.5 434.8 1108.1 431.2 1108.8 427.6C1109.5 424.0 1110.3 420.4 1111.1 416.9C1112.0 413.5 1112.9 410.1 1114.0 406.7C1115.0 403.4 1116.1 400.2 1117.3 397.0C1118.4 393.9 1119.7 390.8 1121.0 387.9C1122.4 385.0 1123.8 382.1 1125.3 379.4C1126.7 376.7 1128.3 374.1 1129.9 371.6C1131.5 369.1 1133.2 366.8 1134.9 364.5C1136.6 362.3 1138.4 360.2 1140.2 358.3C1142.0 356.4 1143.9 354.6 1145.8 352.9C1147.8 351.3 1149.7 349.8 1151.7 348.5C1153.7 347.1 1155.7 346.0 1157.8 345.0C1159.8 343.9 1161.9 343.1 1164.0 342.4C1166.1 341.7 1168.2 341.2 1170.4 340.8C1172.5 340.4 1174.6 340.2 1176.8 340.2C1178.9 340.2 1181.1 340.3 1183.2 340.6C1185.3 340.9 1187.5 341.4 1189.6 342.0C1191.7 342.7 1193.8 343.5 1195.9 344.4C1198.0 345.4 1200.0 346.5 1202.0 347.8C1204.1 349.1 1206.1 350.5 1208.0 352.1C1210.0 353.7 1211.9 355.4 1213.8 357.3C1215.7 359.2 1217.5 361.2 1219.3 363.4C1221.1 365.5 1222.8 367.8 1224.5 370.3C1226.2 372.7 1227.8 375.3 1229.3 377.9C1230.9 380.6 1232.4 383.4 1233.8 386.3C1235.2 389.2 1236.6 392.2 1237.8 395.4C1239.1 398.5 1240.3 401.7 1241.4 405.0C1242.5 408.3 1243.6 411.6 1244.5 415.1C1245.5 418.5 1246.3 422.1 1247.1 425.6C1247.9 429.2 1248.6 432.9 1249.2 436.5C1249.8 440.2 1250.3 443.9 1250.8 447.7C1251.2 451.4 1251.5 455.2 1251.8 459.0C1252.0 462.8 1252.1 468.6 1252.2 470.5C1252.3 472.4 1252.2 468.6 1252.2 470.5Z"/></clipPath>
<path d="M1252.2 470.5C1252.2 472.4 1252.2 478.1 1252.1 481.9C1251.9 485.7 1251.7 489.5 1251.4 493.3C1251.1 497.0 1250.7 500.8 1250.2 504.5C1249.7 508.2 1249.1 511.8 1248.4 515.4C1247.7 519.0 1246.9 522.6 1246.1 526.1C1245.2 529.5 1244.3 532.9 1243.2 536.3C1242.2 539.6 1241.1 542.8 1239.9 546.0C1238.8 549.1 1237.5 552.2 1236.2 555.1C1234.8 558.0 1233.4 560.9 1231.9 563.6C1230.5 566.3 1228.9 568.9 1227.3 571.4C1225.7 573.9 1224.0 576.2 1222.3 578.5C1220.6 580.7 1218.8 582.8 1217.0 584.7C1215.2 586.6 1213.3 588.4 1211.4 590.1C1209.4 591.7 1207.5 593.2 1205.5 594.5C1203.5 595.9 1201.5 597.0 1199.4 598.0C1197.4 599.1 1195.3 599.9 1193.2 600.6C1191.1 601.3 1189.0 601.8 1186.8 602.2C1184.7 602.6 1182.6 602.8 1180.4 602.8C1178.3 602.8 1176.1 602.7 1174.0 602.4C1171.9 602.1 1169.7 601.6 1167.6 601.0C1165.5 600.3 1163.4 599.5 1161.3 598.6C1159.2 597.6 1157.2 596.5 1155.2 595.2C1153.1 593.9 1151.1 592.5 1149.2 590.9C1147.2 589.3 1145.3 587.6 1143.4 585.7C1141.5 583.8 1139.7 581.8 1137.9 579.6C1136.1 577.5 1134.4 575.2 1132.7 572.7C1131.0 570.3 1129.4 567.7 1127.9 565.1C1126.3 562.4 1124.8 559.6 1123.4 556.7C1122.0 553.8 1120.6 550.8 1119.4 547.6C1118.1 544.5 1116.9 541.3 1115.8 538.0C1114.7 534.7 1113.6 531.4 1112.7 527.9C1111.7 524.5 1110.9 520.9 1110.1 517.4C1109.3 513.8 1108.6 510.1 1108.0 506.5C1107.4 502.8 1106.9 499.1 1106.4 495.3C1106.0 491.6 1105.7 487.8 1105.4 484.0C1105.2 480.2 1105.1 476.3 1105.0 472.5C1105.0 468.7 1105.0 464.9 1105.1 461.1C1105.3 457.3 1105.5 453.5 1105.8 449.7C1106.1 446.0 1106.5 442.2 1107.0 438.5C1107.5 434.8 1108.1 431.2 1108.8 427.6C1109.5 424.0 1110.3 420.4 1111.1 416.9C1112.0 413.5 1112.9 410.1 1114.0 406.7C1115.0 403.4 1116.1 400.2 1117.3 397.0C1118.4 393.9 1119.7 390.8 1121.0 387.9C1122.4 385.0 1123.8 382.1 1125.3 379.4C1126.7 376.7 1128.3 374.1 1129.9 371.6C1131.5 369.1 1133.2 366.8 1134.9 364.5C1136.6 362.3 1138.4 360.2 1140.2 358.3C1142.0 356.4 1143.9 354.6 1145.8 352.9C1147.8 351.3 1149.7 349.8 1151.7 348.5C1153.7 347.1 1155.7 346.0 1157.8 345.0C1159.8 343.9 1161.9 343.1 1164.0 342.4C1166.1 341.7 1168.2 341.2 1170.4 340.8C1172.5 340.4 1174.6 340.2 1176.8 340.2C1178.9 340.2 1181.1 340.3 1183.2 340.6C1185.3 340.9 1187.5 341.4 1189.6 342.0C1191.7 342.7 1193.8 343.5 1195.9 344.4C1198.0 345.4 1200.0 346.5 1202.0 347.8C1204.1 349.1 1206.1 350.5 1208.0 352.1C1210.0 353.7 1211.9 355.4 1213.8 357.3C1215.7 359.2 1217.5 361.2 1219.3 363.4C1221.1 365.5 1222.8 367.8 1224.5 370.3C1226.2 372.7 1227.8 375.3 1229.3 377.9C1230.9 380.6 1232.4 383.4 1233.8 386.3C1235.2 389.2 1236.6 392.2 1237.8 395.4C1239.1 398.5 1240.3 401.7 1241.4 405.0C1242.5 408.3 1243.6 411.6 1244.5 415.1C1245.5 418.5 1246.3 422.1 1247.1 425.6C1247.9 429.2 1248.6 432.9 1249.2 436.5C1249.8 440.2 1250.3 443.9 1250.8 447.7C1251.2 451.4 1251.5 455.2 1251.8 459.0C1252.0 462.8 1252.1 468.6 1252.2 470.5C1252.3 472.4 1252.2 468.6 1252.2 470.5Z" fill="url(#gHoleR)"/>
<g clip-path="url(#cR2)">
<rect x="1100" y="330" width="160" height="30" fill="#5a788d"/>
<rect x="1100" y="360" width="160" height="33.5" fill="#4f6b7e"/>
<path d="M1100 393.5H1222a4 8.5 0 0 1 0 18H1100Z" fill="#6a8aa0"/>
<path d="M1100 393.5H1222V399H1100Z" fill="#7a9cb3" fill-opacity=".7"/>
<ellipse cx="1224" cy="402.5" rx="3.6" ry="8" fill="#6f8fa5" stroke="#2b4558" stroke-width=".8"/>
<path d="M1130 359.6H1212M1105 393.5H1224M1105 411.5H1222" stroke="#2a4456" stroke-width="1" stroke-opacity=".8"/>
<path d="M1182.3 342.8C1183.3 343.2 1186.6 344.2 1188.7 345.1C1190.8 346.1 1192.9 347.2 1195.0 348.5C1197.1 349.7 1199.1 351.2 1201.1 352.7C1203.1 354.3 1205.1 356.0 1207.0 357.9C1208.9 359.8 1210.8 361.8 1212.6 364.0C1214.5 366.1 1216.2 368.4 1218.0 370.8C1219.7 373.2 1221.3 375.8 1222.9 378.5C1224.5 381.1 1226.0 383.9 1227.5 386.8C1228.9 389.7 1230.3 392.7 1231.6 395.8C1232.9 398.9 1234.2 402.1 1235.3 405.4C1236.4 408.7 1237.5 412.0 1238.5 415.5C1239.5 418.9 1240.4 422.4 1241.2 426.0C1242.0 429.5 1242.7 433.2 1243.3 436.8C1244.0 440.5 1244.5 444.2 1245.0 448.0C1245.4 451.7 1245.7 455.5 1246.0 459.3C1246.3 463.1 1246.4 466.9 1246.5 470.7C1246.6 474.5 1246.5 478.3 1246.4 482.1C1246.3 485.9 1246.1 489.7 1245.7 493.5C1245.4 497.2 1245.0 501.0 1244.5 504.6C1244.0 508.3 1243.4 512.0 1242.7 515.6C1242.1 519.2 1241.3 522.7 1240.4 526.2C1239.6 529.6 1238.6 533.0 1237.6 536.4C1236.6 539.7 1235.4 542.9 1234.2 546.1C1233.0 549.2 1231.8 552.3 1230.4 555.2C1229.1 558.1 1227.6 561.0 1226.1 563.7C1224.6 566.4 1223.1 569.0 1221.5 571.5C1219.8 574.0 1218.1 576.3 1216.4 578.5C1214.6 580.8 1212.8 582.8 1211.0 584.8C1209.1 586.7 1207.2 588.5 1205.3 590.2C1203.3 591.8 1201.3 593.3 1199.3 594.6C1197.3 596.0 1195.2 597.2 1193.1 598.2C1191.0 599.2 1187.8 600.3 1186.8 600.8" stroke="#3f5c72" stroke-width="5" stroke-opacity=".55"/>
<path d="M1135.5 411.5C1135.9 421.2 1136.6 448.6 1138.0 470.0C1139.4 491.4 1142.0 519.7 1144.0 540.0C1146.0 560.3 1149.0 583.3 1150.0 592.0M1194 411.5L1198 470L1204 540L1210 587" stroke="#2a4456" stroke-width="1" stroke-opacity=".8"/>
<path d="M1135.5 393.5V411.5M1194 393.5V411.5M1189 338C1188 350 1192 356 1193 360" stroke="#2a4456" stroke-width=".9" stroke-opacity=".7"/>
</g>
</g>
<g clip-path="url(#cSil)">
<path d="M886.7 236.0L896.7 226.7L906.7 216.7L920.0 208.3L933.3 203.9L943.3 203.9L957.0 209.4L914.0 222.5L903.0 226.5L903.0 235.0Z" fill="#7397af"/>
<path d="M903.0 226.5L914.0 222.5L957.0 209.4L1078.0 178.0L1117.5 176.0L1122.0 180.5L944.0 225.5Z" fill="#86b1ce"/>
<path d="M944.0 225.5L1122.0 180.5L1126.0 198.0L1100.0 203.0L1040.0 211.5L990.0 224.5L970.0 235.0L953.0 251.0L948.0 231.0Z" fill="#92bddb"/>
<path d="M903.0 226.5L942.0 226.5L942.5 231.5L903.5 231.5Z" fill="#7994a8"/>
<path d="M903.5 231.5L942.5 231.5L944.2 259.5L905.0 259.5Z" fill="#536a7c"/>
<path d="M942.0 226.5L948.0 230.0L952.0 250.0L944.2 259.5Z" fill="#9dc2da"/>
<path d="M899.0 260.5L905.0 259.5L944.2 259.5L952.0 250.0L954.0 257.0L944.0 264.5L903.5 264.5Z" fill="#688aa1"/>
<path d="M1037.5 227.5L1133.0 202.5L1186.5 243.8L1188.0 247.5L1094.0 274.2L1092.5 270.0Z" fill="#587489"/>
<path d="M1037.5 227.5L1133.0 202.5L1186.0 243.5L1092.5 270.0Z" fill="#90bcda"/>
</g>
<g clip-path="url(#cSil)">
<path d="M903.0 226.5L942.0 226.5M903.5 231.5L942.5 231.5L944.2 259.5L905.0 259.5L903.5 231.5M903.0 226.5L903.5 231.5M942.0 226.5L948.0 230.0L952.0 250.0L944.2 259.5" stroke="#22394b" stroke-width="1.6" stroke-opacity="0.97" stroke-linejoin="round" stroke-linecap="round"/>
<path d="M899.0 260.5L903.5 264.5L944.0 264.5L954.0 257.0" stroke="#22394b" stroke-width="1.6" stroke-opacity="0.97" stroke-linejoin="round" stroke-linecap="round"/>
<path d="M903.0 226.5L914.0 222.5L957.0 209.4M914.0 222.5L953.3 211.0L1040.0 189.2L1078.0 179.5" stroke="#22394b" stroke-width="1.125" stroke-opacity="0.72" stroke-linejoin="round" stroke-linecap="round"/>
<path d="M944.0 225.5L986.7 213.3L1040.0 199.2L1122.0 180.5" stroke="#22394b" stroke-width="1.125" stroke-opacity="0.87" stroke-linejoin="round" stroke-linecap="round"/>
<path d="M948.0 230.0L1040.0 205.8L1124.0 187.0" stroke="#22394b" stroke-width="1.125" stroke-opacity="0.72" stroke-linejoin="round" stroke-linecap="round"/>
<path d="M952.0 250.0C955.0 247.3 963.7 238.4 970.0 234.0C976.3 229.6 978.3 227.5 990.0 223.5C1001.7 219.5 1021.7 213.7 1040.0 210.0C1058.3 206.3 1085.7 203.5 1100.0 201.5C1114.3 199.5 1121.7 198.6 1126.0 198.0" stroke="#22394b" stroke-width="1.125" stroke-opacity="0.87" stroke-linejoin="round" stroke-linecap="round"/>
<path d="M954.0 257.0C956.7 254.0 964.3 244.2 970.0 239.0C975.7 233.8 981.0 228.4 988.0 226.0C995.0 223.6 1003.9 223.8 1012.0 224.5C1020.1 225.2 1032.6 229.5 1036.7 230.5" stroke="#22394b" stroke-width="1.25" stroke-opacity="0.87" stroke-linejoin="round" stroke-linecap="round"/>
<path d="M1000.0 222.0C1006.7 220.5 1025.0 215.8 1040.0 213.0C1055.0 210.2 1076.7 207.0 1090.0 205.0C1103.3 203.0 1115.0 201.7 1120.0 201.0" stroke="#22394b" stroke-width="1.125" stroke-opacity="0.62" stroke-linejoin="round" stroke-linecap="round"/>
<path d="M1117.5 176.0L1123.5 179.5L1126.0 198.0" stroke="#22394b" stroke-width="1.6" stroke-opacity="0.97" stroke-linejoin="round" stroke-linecap="round"/>
<path d="M889.0 236.0C890.8 234.7 895.7 230.5 900.0 228.0C904.3 225.5 914.5 221.2 915.0 221.0C915.5 220.8 905.0 225.6 903.0 226.5" stroke="#22394b" stroke-width="1.125" stroke-opacity="0.62" stroke-linejoin="round" stroke-linecap="round"/>
<path d="M896.7 228.0C898.9 226.2 905.3 220.0 910.0 217.0C914.7 214.0 920.0 211.7 925.0 210.0C930.0 208.3 934.7 207.1 940.0 207.0C945.3 206.9 954.2 209.0 957.0 209.4" stroke="#22394b" stroke-width="1.125" stroke-opacity="0.62" stroke-linejoin="round" stroke-linecap="round"/>
<path d="M1037.5 227.5L1133.0 202.5L1186.0 243.5L1092.5 270.0Z" stroke="#22394b" stroke-width="1.6" stroke-opacity="0.97" stroke-linejoin="round" stroke-linecap="round"/>
<path d="M1037.5 227.5L1038.5 231.0L1094.0 274.2L1188.0 247.5L1186.0 243.5" stroke="#22394b" stroke-width="1.125" stroke-opacity="0.92" stroke-linejoin="round" stroke-linecap="round"/>
<path d="M905.0 262.0C902.9 263.8 896.7 267.5 892.5 273.0C888.3 278.5 883.3 287.2 880.0 295.0C876.7 302.8 874.4 313.3 872.5 320.0C870.6 326.7 869.4 332.5 868.8 335.0" stroke="#22394b" stroke-width="1.6" stroke-opacity="0.97" stroke-linejoin="round" stroke-linecap="round"/>
<path d="M949.0 262.0C947.9 264.6 945.0 270.8 942.5 277.5C940.0 284.2 936.0 294.6 933.8 302.5C931.5 310.4 929.8 319.8 928.8 325.0C927.7 330.2 927.7 332.5 927.5 334.0" stroke="#22394b" stroke-width="1.6" stroke-opacity="0.97" stroke-linejoin="round" stroke-linecap="round"/>
<path d="M1038.5 231.0C1040.8 233.0 1046.8 238.7 1052.0 243.0C1057.2 247.3 1062.8 250.5 1070.0 257.0C1077.2 263.5 1088.3 273.3 1095.0 282.0C1101.7 290.7 1107.5 304.5 1110.0 309.0" stroke="#22394b" stroke-width="1.6" stroke-opacity="0.97" stroke-linejoin="round" stroke-linecap="round"/>
<path d="M1135.0 203.5C1139.2 205.9 1152.8 212.9 1160.0 218.0C1167.2 223.1 1171.3 227.0 1178.0 234.0C1184.7 241.0 1193.8 250.7 1200.0 260.0C1206.2 269.3 1210.8 280.0 1215.0 290.0C1219.2 300.0 1222.3 311.7 1225.0 320.0C1227.7 328.3 1228.5 333.3 1231.0 340.0C1233.5 346.7 1236.8 352.5 1240.0 360.0C1243.2 367.5 1247.0 376.3 1250.0 385.0C1253.0 393.7 1256.7 407.5 1258.0 412.0" stroke="#22394b" stroke-width="1.6" stroke-opacity="0.97" stroke-linejoin="round" stroke-linecap="round"/>
<path d="M1231.0 340.0C1232.7 339.8 1237.7 339.2 1241.0 338.5C1244.3 337.8 1249.3 336.0 1251.0 335.5" stroke="#22394b" stroke-width="1.6" stroke-opacity="0.97" stroke-linejoin="round" stroke-linecap="round"/>
</g>
<g clip-path="url(#cSil)">
<path d="M940.0 664.0L952.0 668.0L962.0 748.0L948.0 748.0Z" fill="#3f596b"/>
<path d="M893.0 668.0L900.0 665.0L910.0 775.0L904.0 775.0Z" fill="#5f7d92"/>
<path d="M891.7 744.0L906.0 744.0L909.0 771.0L886.7 767.5L890.8 755.0Z" fill="#58758a"/>
<path d="M946.0 744.0L970.0 744.0L970.8 766.7L966.7 761.7L947.0 767.0Z" fill="#58758a"/>
<path d="M886.7 767.0L966.7 761.7L956.7 797.0L880.0 797.5Z" fill="#5d7a8f"/>
<path d="M880.0 797.5L956.7 797.0L957.0 820.5L879.0 818.5Z" fill="#536f84"/>
<path d="M966.7 761.7L970.8 766.7L976.0 816.7L973.0 821.0L957.0 820.5L956.7 797.0Z" fill="#8fb1c8"/>
<ellipse cx="965.3" cy="805" rx="3.7" ry="5.7" fill="#465f72" stroke="#22394b" stroke-width="1"/>
<ellipse cx="965.8" cy="805.6" rx="2" ry="3.6" fill="#6f8fa6"/>
<path d="M900.0 665.0L927.5 662.5L937.5 771.0L935.0 774.0L912.0 775.5L909.5 772.0Z" fill="#577283"/>
<path d="M927.5 662.5L940.0 664.0L948.5 766.0L944.0 771.5L937.5 771.0Z" fill="#8fb0c6"/>
<circle cx="1065.7" cy="749.7" r="4.7" fill="#a7cbe2" stroke="#263e50" stroke-width="1.1"/><circle cx="1065.7" cy="749.7" r="1.5" fill="#263e50"/>
<path d="M1195.0 753.3C1197.0 752.8 1202.3 751.4 1207.0 750.0C1211.7 748.6 1216.2 746.7 1223.0 745.0C1229.8 743.3 1239.7 741.4 1248.0 740.0C1256.3 738.6 1265.8 737.1 1273.0 736.7C1280.2 736.3 1288.0 737.4 1291.0 737.5L1291.0 738.0C1288.3 739.5 1282.7 744.1 1275.0 747.0C1267.3 749.9 1255.0 753.8 1245.0 755.5C1235.0 757.2 1223.3 757.4 1215.0 757.0C1206.7 756.6 1198.3 753.9 1195.0 753.3Z" fill="#34495a"/>
</g>
<g clip-path="url(#cSil)">
<path d="M900.0 665.0L909.5 772.0L912.0 775.5L935.0 774.0L937.5 771.0L927.5 662.5" stroke="#22394b" stroke-width="1.6" stroke-opacity="0.97" stroke-linejoin="round" stroke-linecap="round"/>
<path d="M940.0 664.0L948.5 766.0L944.0 771.5L937.5 771.0" stroke="#22394b" stroke-width="1.125" stroke-opacity="0.82" stroke-linejoin="round" stroke-linecap="round"/>
<path d="M893.0 668.0L904.0 775.0" stroke="#22394b" stroke-width="1.125" stroke-opacity="0.72" stroke-linejoin="round" stroke-linecap="round"/>
<path d="M952.0 668.0L962.0 748.0" stroke="#22394b" stroke-width="1.125" stroke-opacity="0.72" stroke-linejoin="round" stroke-linecap="round"/>
<path d="M946.0 668.0L954.0 746.0" stroke="#22394b" stroke-width="1.125" stroke-opacity="0.5700000000000001" stroke-linejoin="round" stroke-linecap="round"/>
<path d="M891.7 744.0L906.0 744.0M946.0 744.0L970.0 744.0L970.8 766.7L976.0 816.7L973.0 821.0M891.7 744.0L890.8 755.0L886.7 767.0L880.0 797.5L879.0 818.5" stroke="#22394b" stroke-width="1.6" stroke-opacity="0.97" stroke-linejoin="round" stroke-linecap="round"/>
<path d="M880.0 797.5L956.7 797.0L966.7 761.7M956.7 797.0L957.0 820.5" stroke="#22394b" stroke-width="1.6" stroke-opacity="0.97" stroke-linejoin="round" stroke-linecap="round"/>
<path d="M886.7 767.0L909.0 770.5M947.0 767.0L966.7 761.7L970.8 766.7" stroke="#22394b" stroke-width="1.125" stroke-opacity="0.82" stroke-linejoin="round" stroke-linecap="round"/>
<path d="M897.0 744.0L896.0 768.0M962.0 744.0L961.5 763.0" stroke="#22394b" stroke-width="1.125" stroke-opacity="0.62" stroke-linejoin="round" stroke-linecap="round"/>
<path d="M1153.9 637.2C1153.8 639.3 1153.2 642.9 1153.5 650.0C1153.8 657.1 1154.6 667.5 1155.5 680.0C1156.4 692.5 1157.6 711.0 1159.0 725.0C1160.4 739.0 1163.2 757.5 1164.0 764.0" stroke="#22394b" stroke-width="1.6" stroke-opacity="0.97" stroke-linejoin="round" stroke-linecap="round"/>
<path d="M1249.7 572.0C1250.4 580.0 1252.5 603.7 1254.0 620.0C1255.5 636.3 1257.6 655.0 1259.0 670.0C1260.4 685.0 1261.5 698.7 1262.5 710.0C1263.5 721.3 1264.6 733.3 1265.0 738.0" stroke="#22394b" stroke-width="1.6" stroke-opacity="0.97" stroke-linejoin="round" stroke-linecap="round"/>
</g>
<g clip-path="url(#cSil)">
<path d="M1014.8 463.1C1015.4 465.2 1017.2 471.6 1018.1 475.9C1019.1 480.3 1019.9 484.6 1020.5 489.0C1021.1 493.3 1021.6 497.7 1021.9 502.1C1022.2 506.5 1022.4 510.9 1022.3 515.2C1022.3 519.5 1022.2 523.9 1021.8 528.2C1021.5 532.5 1021.0 536.7 1020.3 540.9C1019.6 545.1 1018.8 549.3 1017.8 553.3C1016.9 557.4 1015.7 561.4 1014.4 565.4C1013.1 569.3 1011.7 573.1 1010.1 576.9C1008.5 580.6 1006.8 584.2 1004.9 587.8C1003.0 591.3 1001.0 594.7 998.8 598.0C996.7 601.3 994.4 604.5 992.0 607.5C989.6 610.5 987.0 613.4 984.4 616.1C981.8 618.9 979.0 621.5 976.1 623.9C973.3 626.3 970.3 628.6 967.2 630.7C964.2 632.8 961.0 634.7 957.8 636.5C954.5 638.3 951.2 639.9 947.8 641.3C944.5 642.7 941.0 643.9 937.5 644.9C934.0 646.0 930.4 646.8 926.8 647.5C923.2 648.1 919.6 648.6 915.9 648.9C912.2 649.2 908.5 649.3 904.8 649.2C901.1 649.1 897.3 648.8 893.6 648.3C889.9 647.9 886.2 647.2 882.5 646.3C878.7 645.5 875.0 644.4 871.4 643.2C867.7 642.0 864.1 640.6 860.5 639.0C856.9 637.4 853.3 635.6 849.8 633.7C846.3 631.8 842.9 629.7 839.5 627.4C836.1 625.1 832.8 622.7 829.6 620.1C826.4 617.5 823.3 614.8 820.2 611.9C817.2 609.0 814.2 606.0 811.4 602.8C808.5 599.6 805.8 596.3 803.2 592.9C800.6 589.5 798.0 586.0 795.7 582.4C793.3 578.7 791.0 575.0 788.9 571.1C786.8 567.3 784.8 563.4 782.9 559.4C781.1 555.4 779.4 551.3 777.8 547.1C776.3 543.0 774.8 538.8 773.6 534.5C772.3 530.3 771.2 526.0 770.3 521.7C769.3 517.3 768.5 513.0 767.9 508.6C767.3 504.3 766.8 499.9 766.5 495.5C766.2 491.1 766.0 486.7 766.1 482.4C766.1 478.1 766.2 473.7 766.6 469.4C766.9 465.1 767.4 460.9 768.1 456.7C768.8 452.5 769.6 448.3 770.6 444.3C771.5 440.2 772.7 436.2 774.0 432.2C775.3 428.3 776.7 424.5 778.3 420.7C779.9 417.0 781.6 413.4 783.5 409.8C785.4 406.3 787.4 402.9 789.6 399.6C791.7 396.3 794.0 393.1 796.4 390.1C798.8 387.1 801.4 384.2 804.0 381.5C806.6 378.7 809.4 376.1 812.3 373.7C815.1 371.3 818.1 369.0 821.2 366.9C824.2 364.8 827.4 362.9 830.6 361.1C833.9 359.3 837.2 357.7 840.6 356.3C843.9 354.9 847.4 353.7 850.9 352.7C854.4 351.6 858.0 350.8 861.6 350.1C865.2 349.5 868.8 349.0 872.5 348.7C876.2 348.4 879.9 348.3 883.6 348.4C887.3 348.5 891.1 348.8 894.8 349.3C898.5 349.7 902.2 350.4 905.9 351.3C909.7 352.1 913.4 353.2 917.0 354.4C920.7 355.6 924.3 357.0 927.9 358.6C931.5 360.2 935.1 362.0 938.6 363.9C942.1 365.8 945.5 367.9 948.9 370.2C952.3 372.5 955.6 374.9 958.8 377.5C962.0 380.1 965.1 382.8 968.2 385.7C971.2 388.6 974.2 391.6 977.0 394.8C979.9 398.0 982.6 401.3 985.2 404.7C987.8 408.1 990.4 411.6 992.7 415.2C995.1 418.9 997.4 422.6 999.5 426.5C1001.6 430.3 1003.6 434.2 1005.5 438.2C1007.3 442.2 1009.0 446.3 1010.6 450.5C1012.1 454.6 1014.1 461.0 1014.8 463.1C1015.5 465.2 1014.3 460.9 1014.8 463.1Z" stroke="#22394b" stroke-width="1.375" stroke-opacity="0.92" stroke-linejoin="round" stroke-linecap="round"/>
<path d="M997.3 476.0C997.7 477.8 999.0 483.4 999.6 487.2C1000.2 491.0 1000.7 494.8 1001.1 498.5C1001.4 502.3 1001.6 506.1 1001.7 509.9C1001.8 513.7 1001.7 517.5 1001.5 521.2C1001.3 524.9 1001.0 528.7 1000.5 532.3C1000.1 536.0 999.4 539.7 998.7 543.2C998.0 546.8 997.1 550.4 996.1 553.8C995.1 557.3 993.9 560.7 992.7 564.0C991.4 567.3 990.0 570.6 988.5 573.7C987.0 576.8 985.3 579.9 983.6 582.9C981.8 585.8 980.0 588.6 978.0 591.4C976.0 594.1 973.9 596.7 971.8 599.2C969.6 601.7 967.3 604.1 964.9 606.3C962.5 608.5 960.1 610.6 957.5 612.6C955.0 614.5 952.4 616.4 949.7 618.0C947.0 619.7 944.2 621.2 941.3 622.6C938.5 623.9 935.6 625.1 932.7 626.2C929.7 627.2 926.7 628.1 923.7 628.9C920.7 629.6 917.6 630.2 914.5 630.6C911.4 631.0 908.3 631.2 905.1 631.3C902.0 631.3 898.8 631.3 895.6 631.0C892.5 630.7 889.3 630.3 886.2 629.7C883.0 629.1 879.9 628.4 876.7 627.5C873.6 626.6 870.5 625.5 867.4 624.3C864.3 623.0 861.3 621.6 858.3 620.1C855.3 618.6 852.3 616.9 849.5 615.1C846.6 613.2 843.7 611.2 840.9 609.1C838.2 607.0 835.4 604.8 832.8 602.4C830.2 600.0 827.6 597.5 825.1 594.9C822.7 592.2 820.3 589.5 818.0 586.6C815.7 583.8 813.5 580.8 811.4 577.7C809.3 574.7 807.3 571.5 805.5 568.3C803.6 565.0 801.8 561.7 800.2 558.3C798.5 554.9 797.0 551.4 795.6 547.9C794.2 544.3 792.9 540.7 791.7 537.1C790.6 533.5 789.6 529.8 788.7 526.0C787.8 522.3 787.0 518.6 786.4 514.8C785.8 511.0 785.3 507.2 784.9 503.5C784.6 499.7 784.4 495.9 784.3 492.1C784.2 488.3 784.3 484.5 784.5 480.8C784.7 477.1 785.0 473.3 785.5 469.7C785.9 466.0 786.6 462.3 787.3 458.8C788.0 455.2 788.9 451.6 789.9 448.2C790.9 444.7 792.1 441.3 793.3 438.0C794.6 434.7 796.0 431.4 797.5 428.3C799.0 425.2 800.7 422.1 802.4 419.1C804.2 416.2 806.0 413.4 808.0 410.6C810.0 407.9 812.1 405.3 814.2 402.8C816.4 400.3 818.7 397.9 821.1 395.7C823.5 393.5 825.9 391.4 828.5 389.4C831.0 387.5 833.6 385.6 836.3 384.0C839.0 382.3 841.8 380.8 844.7 379.4C847.5 378.1 850.4 376.9 853.3 375.8C856.3 374.8 859.3 373.9 862.3 373.1C865.3 372.4 868.4 371.8 871.5 371.4C874.6 371.0 877.7 370.8 880.9 370.7C884.0 370.7 887.2 370.7 890.4 371.0C893.5 371.3 896.7 371.7 899.8 372.3C903.0 372.9 906.1 373.6 909.3 374.5C912.4 375.4 915.5 376.5 918.6 377.7C921.7 379.0 924.7 380.4 927.7 381.9C930.7 383.4 933.7 385.1 936.5 386.9C939.4 388.8 942.3 390.8 945.1 392.9C947.8 395.0 950.6 397.2 953.2 399.6C955.8 402.0 958.4 404.5 960.9 407.1C963.3 409.8 965.7 412.5 968.0 415.4C970.3 418.2 972.5 421.2 974.6 424.3C976.7 427.3 978.7 430.5 980.5 433.7C982.4 437.0 984.2 440.3 985.8 443.7C987.5 447.1 989.0 450.6 990.4 454.1C991.8 457.7 993.1 461.3 994.3 464.9C995.4 468.5 996.8 474.1 997.3 476.0C997.8 477.8 997.0 474.1 997.3 476.0Z" stroke="#22394b" stroke-width="1.375" stroke-opacity="0.92" stroke-linejoin="round" stroke-linecap="round"/>
<path d="M904.9 653.3C903.0 653.2 897.2 652.9 893.3 652.4C889.5 652.0 885.6 651.3 881.8 650.4C878.0 649.5 874.2 648.5 870.4 647.2C866.6 646.0 862.8 644.5 859.1 642.9C855.4 641.3 851.7 639.5 848.1 637.5C844.5 635.5 841.0 633.3 837.5 631.0C834.0 628.7 830.6 626.2 827.3 623.5C824.0 620.9 820.7 618.1 817.6 615.1C814.5 612.2 811.4 609.0 808.5 605.8C805.5 602.6 802.7 599.2 800.0 595.7C797.3 592.2 794.7 588.5 792.3 584.8C789.8 581.1 787.5 577.2 785.3 573.3C783.1 569.4 781.1 565.3 779.2 561.2C777.3 557.1 775.5 552.9 773.9 548.7C772.3 544.4 770.8 540.1 769.6 535.7C768.3 531.4 767.1 526.9 766.2 522.5C765.2 518.1 764.4 513.6 763.7 509.1C763.1 504.6 762.6 500.1 762.3 495.6C762.0 491.1 761.8 486.6 761.9 482.2C761.9 477.7 762.1 473.3 762.4 468.8C762.8 464.4 763.3 460.1 764.0 455.7C764.7 451.4 765.6 447.2 766.6 443.0C767.6 438.8 768.8 434.7 770.1 430.6C771.5 426.6 773.0 422.6 774.6 418.8C776.3 415.0 778.1 411.2 780.0 407.6C782.0 404.0 784.1 400.4 786.3 397.1C788.5 393.7 790.9 390.4 793.4 387.3C795.9 384.2 799.9 379.9 801.2 378.4" stroke="#22394b" stroke-width="1.25" stroke-opacity="0.72" stroke-linejoin="round" stroke-linecap="round"/>
<path d="M814.0 317.4C813.2 319.3 810.9 324.2 809.4 329.0C807.9 333.8 806.3 341.1 804.8 346.3C803.3 351.5 801.7 354.8 800.2 360.2C798.7 365.6 797.3 373.4 795.6 378.7C793.9 384.0 790.9 389.8 790.0 392.0" stroke="#22394b" stroke-width="1.25" stroke-opacity="0.82" stroke-linejoin="round" stroke-linecap="round"/>
<path d="M816.0 318.0C815.3 319.6 813.1 324.2 811.8 327.8C810.5 331.4 809.5 334.4 808.3 339.4C807.1 344.4 806.0 352.2 804.8 358.0C803.6 363.8 801.6 371.3 801.0 374.0" stroke="#22394b" stroke-width="1.125" stroke-opacity="0.62" stroke-linejoin="round" stroke-linecap="round"/>
<path d="M797.0 378.0C799.5 376.0 806.5 370.0 812.0 366.0C817.5 362.0 823.7 358.3 830.0 354.0C836.3 349.7 843.8 343.7 850.0 340.0C856.2 336.3 858.3 334.0 867.0 332.0C875.7 330.0 891.5 328.2 902.0 328.0C912.5 327.8 920.3 329.1 930.0 331.0C939.7 332.9 951.7 335.6 960.0 339.5C968.3 343.4 972.8 349.1 980.0 354.2C987.2 359.3 995.5 364.8 1003.0 370.0C1010.5 375.2 1021.3 382.8 1025.0 385.4" stroke="#22394b" stroke-width="1.375" stroke-opacity="0.92" stroke-linejoin="round" stroke-linecap="round"/>
<path d="M806.0 377.0C810.3 373.7 821.8 363.0 832.0 357.0C842.2 351.0 855.3 344.2 867.0 341.0C878.7 337.8 892.3 338.2 902.0 338.0C911.7 337.8 917.0 338.0 925.0 340.0C933.0 342.0 940.8 344.7 950.0 350.0C959.2 355.3 971.7 365.9 980.0 371.7C988.3 377.5 993.6 380.8 1000.0 385.0C1006.4 389.2 1015.2 394.8 1018.3 396.7" stroke="#22394b" stroke-width="1.25" stroke-opacity="0.77" stroke-linejoin="round" stroke-linecap="round"/>
<path d="M1043.3 384.2C1046.4 380.7 1055.5 370.4 1062.0 363.0C1068.5 355.6 1076.2 346.8 1082.5 340.0C1088.8 333.2 1095.4 326.8 1100.0 322.0C1104.6 317.2 1108.3 312.8 1110.0 311.0" stroke="#22394b" stroke-width="1.375" stroke-opacity="0.97" stroke-linejoin="round" stroke-linecap="round"/>
<path d="M1054.2 393.3C1058.2 388.9 1069.8 375.9 1078.0 367.0C1086.2 358.1 1097.1 346.7 1103.3 340.0C1109.5 333.3 1111.9 330.7 1115.0 327.0C1118.1 323.3 1120.8 319.5 1122.0 318.0" stroke="#22394b" stroke-width="1.375" stroke-opacity="0.92" stroke-linejoin="round" stroke-linecap="round"/>
<path d="M1025.0 385.4L1030.0 381.5L1043.3 384.2L1054.2 393.3L1052.0 401.0L1046.7 403.3L1038.0 407.0L1029.2 405.8L1018.3 396.7L1025.0 385.4M1025.0 385.4L1046.7 403.3M1043.3 384.2L1029.2 405.8" stroke="#22394b" stroke-width="1.125" stroke-opacity="0.82" stroke-linejoin="round" stroke-linecap="round"/>
<path d="M1110.0 311.0C1113.3 309.6 1122.5 304.3 1130.0 302.5C1137.5 300.7 1146.7 299.2 1155.0 300.0C1163.3 300.8 1172.5 304.2 1180.0 307.5C1187.5 310.8 1193.8 315.4 1200.0 320.0C1206.2 324.6 1212.3 331.7 1217.5 335.0C1222.7 338.3 1228.8 339.2 1231.0 340.0" stroke="#22394b" stroke-width="1.25" stroke-opacity="0.92" stroke-linejoin="round" stroke-linecap="round"/>
<path d="M1122.0 318.0C1125.8 316.7 1137.0 311.5 1145.0 310.0C1153.0 308.5 1161.7 307.7 1170.0 309.0C1178.3 310.3 1187.5 313.8 1195.0 318.0C1202.5 322.2 1209.2 328.2 1215.0 334.0C1220.8 339.8 1227.5 349.4 1230.0 352.5" stroke="#22394b" stroke-width="1.125" stroke-opacity="0.72" stroke-linejoin="round" stroke-linecap="round"/>
<path d="M1268.9 466.9C1268.9 469.2 1269.0 476.0 1268.9 480.6C1268.7 485.1 1268.5 489.7 1268.2 494.2C1267.8 498.7 1267.3 503.2 1266.8 507.6C1266.2 512.0 1265.5 516.4 1264.7 520.7C1263.9 525.0 1263.0 529.3 1262.0 533.5C1261.0 537.6 1259.9 541.7 1258.6 545.7C1257.4 549.7 1256.1 553.6 1254.7 557.4C1253.2 561.1 1251.7 564.8 1250.1 568.4C1248.5 571.9 1246.8 575.3 1245.0 578.6C1243.2 581.9 1241.3 585.0 1239.4 588.0C1237.4 591.0 1235.4 593.8 1233.3 596.5C1231.2 599.1 1229.0 601.7 1226.8 604.0C1224.6 606.3 1222.3 608.5 1219.9 610.5C1217.6 612.5 1215.2 614.3 1212.8 615.9C1210.3 617.5 1207.8 619.0 1205.3 620.2C1202.8 621.5 1200.2 622.5 1197.6 623.4C1195.1 624.2 1192.5 624.9 1189.8 625.4C1187.2 625.8 1184.6 626.1 1181.9 626.2C1179.3 626.2 1176.6 626.1 1174.0 625.7C1171.4 625.4 1168.7 624.9 1166.1 624.2C1163.5 623.4 1160.9 622.5 1158.3 621.4C1155.7 620.3 1153.2 618.9 1150.7 617.4C1148.1 615.9 1145.7 614.2 1143.2 612.4C1140.8 610.5 1138.4 608.4 1136.0 606.2C1133.7 604.0 1131.4 601.6 1129.2 599.0C1127.0 596.5 1124.8 593.7 1122.7 590.8C1120.6 588.0 1118.6 584.9 1116.6 581.7C1114.7 578.5 1112.8 575.2 1111.0 571.8C1109.3 568.3 1107.5 564.7 1105.9 561.0C1104.3 557.3 1102.8 553.5 1101.4 549.5C1100.0 545.6 1098.7 541.6 1097.5 537.5C1096.2 533.4 1095.1 529.2 1094.1 524.9C1093.1 520.6 1092.2 516.3 1091.4 511.9C1090.6 507.5 1089.9 503.0 1089.4 498.6C1088.8 494.1 1088.3 489.5 1088.0 485.0C1087.7 480.5 1087.4 475.9 1087.3 471.3C1087.2 466.8 1087.2 462.2 1087.3 457.6C1087.5 453.1 1087.7 448.5 1088.0 444.0C1088.4 439.5 1088.9 435.0 1089.4 430.6C1090.0 426.2 1090.7 421.8 1091.5 417.5C1092.3 413.2 1093.2 408.9 1094.2 404.7C1095.2 400.6 1096.3 396.5 1097.6 392.5C1098.8 388.5 1100.1 384.6 1101.5 380.8C1103.0 377.1 1104.5 373.4 1106.1 369.8C1107.7 366.3 1109.4 362.9 1111.2 359.6C1113.0 356.3 1114.9 353.2 1116.8 350.2C1118.8 347.2 1120.8 344.4 1122.9 341.7C1125.0 339.1 1127.2 336.5 1129.4 334.2C1131.6 331.9 1133.9 329.7 1136.3 327.7C1138.6 325.7 1141.0 323.9 1143.4 322.3C1145.9 320.7 1148.4 319.2 1150.9 318.0C1153.4 316.7 1156.0 315.7 1158.6 314.8C1161.1 314.0 1163.7 313.3 1166.4 312.8C1169.0 312.4 1171.6 312.1 1174.3 312.0C1176.9 312.0 1179.6 312.1 1182.2 312.5C1184.8 312.8 1187.5 313.3 1190.1 314.0C1192.7 314.8 1195.3 315.7 1197.9 316.8C1200.5 317.9 1203.0 319.3 1205.5 320.8C1208.1 322.3 1210.5 324.0 1213.0 325.8C1215.4 327.7 1217.8 329.8 1220.2 332.0C1222.5 334.2 1224.8 336.6 1227.0 339.2C1229.2 341.7 1231.4 344.5 1233.5 347.4C1235.6 350.2 1237.6 353.3 1239.6 356.5C1241.5 359.7 1243.4 363.0 1245.2 366.4C1246.9 369.9 1248.7 373.5 1250.3 377.2C1251.9 380.9 1253.4 384.7 1254.8 388.7C1256.2 392.6 1257.5 396.6 1258.7 400.7C1260.0 404.8 1261.1 409.0 1262.1 413.3C1263.1 417.6 1264.0 421.9 1264.8 426.3C1265.6 430.7 1266.3 435.2 1266.8 439.6C1267.4 444.1 1267.9 448.7 1268.2 453.2C1268.5 457.7 1268.8 464.6 1268.9 466.9C1269.0 469.2 1268.9 464.6 1268.9 466.9Z" stroke="#22394b" stroke-width="1.375" stroke-opacity="0.92" stroke-linejoin="round" stroke-linecap="round"/>
<path d="M1252.2 470.5C1252.2 472.4 1252.2 478.1 1252.1 481.9C1251.9 485.7 1251.7 489.5 1251.4 493.3C1251.1 497.0 1250.7 500.8 1250.2 504.5C1249.7 508.2 1249.1 511.8 1248.4 515.4C1247.7 519.0 1246.9 522.6 1246.1 526.1C1245.2 529.5 1244.3 532.9 1243.2 536.3C1242.2 539.6 1241.1 542.8 1239.9 546.0C1238.8 549.1 1237.5 552.2 1236.2 555.1C1234.8 558.0 1233.4 560.9 1231.9 563.6C1230.5 566.3 1228.9 568.9 1227.3 571.4C1225.7 573.9 1224.0 576.2 1222.3 578.5C1220.6 580.7 1218.8 582.8 1217.0 584.7C1215.2 586.6 1213.3 588.4 1211.4 590.1C1209.4 591.7 1207.5 593.2 1205.5 594.5C1203.5 595.9 1201.5 597.0 1199.4 598.0C1197.4 599.1 1195.3 599.9 1193.2 600.6C1191.1 601.3 1189.0 601.8 1186.8 602.2C1184.7 602.6 1182.6 602.8 1180.4 602.8C1178.3 602.8 1176.1 602.7 1174.0 602.4C1171.9 602.1 1169.7 601.6 1167.6 601.0C1165.5 600.3 1163.4 599.5 1161.3 598.6C1159.2 597.6 1157.2 596.5 1155.2 595.2C1153.1 593.9 1151.1 592.5 1149.2 590.9C1147.2 589.3 1145.3 587.6 1143.4 585.7C1141.5 583.8 1139.7 581.8 1137.9 579.6C1136.1 577.5 1134.4 575.2 1132.7 572.7C1131.0 570.3 1129.4 567.7 1127.9 565.1C1126.3 562.4 1124.8 559.6 1123.4 556.7C1122.0 553.8 1120.6 550.8 1119.4 547.6C1118.1 544.5 1116.9 541.3 1115.8 538.0C1114.7 534.7 1113.6 531.4 1112.7 527.9C1111.7 524.5 1110.9 520.9 1110.1 517.4C1109.3 513.8 1108.6 510.1 1108.0 506.5C1107.4 502.8 1106.9 499.1 1106.4 495.3C1106.0 491.6 1105.7 487.8 1105.4 484.0C1105.2 480.2 1105.1 476.3 1105.0 472.5C1105.0 468.7 1105.0 464.9 1105.1 461.1C1105.3 457.3 1105.5 453.5 1105.8 449.7C1106.1 446.0 1106.5 442.2 1107.0 438.5C1107.5 434.8 1108.1 431.2 1108.8 427.6C1109.5 424.0 1110.3 420.4 1111.1 416.9C1112.0 413.5 1112.9 410.1 1114.0 406.7C1115.0 403.4 1116.1 400.2 1117.3 397.0C1118.4 393.9 1119.7 390.8 1121.0 387.9C1122.4 385.0 1123.8 382.1 1125.3 379.4C1126.7 376.7 1128.3 374.1 1129.9 371.6C1131.5 369.1 1133.2 366.8 1134.9 364.5C1136.6 362.3 1138.4 360.2 1140.2 358.3C1142.0 356.4 1143.9 354.6 1145.8 352.9C1147.8 351.3 1149.7 349.8 1151.7 348.5C1153.7 347.1 1155.7 346.0 1157.8 345.0C1159.8 343.9 1161.9 343.1 1164.0 342.4C1166.1 341.7 1168.2 341.2 1170.4 340.8C1172.5 340.4 1174.6 340.2 1176.8 340.2C1178.9 340.2 1181.1 340.3 1183.2 340.6C1185.3 340.9 1187.5 341.4 1189.6 342.0C1191.7 342.7 1193.8 343.5 1195.9 344.4C1198.0 345.4 1200.0 346.5 1202.0 347.8C1204.1 349.1 1206.1 350.5 1208.0 352.1C1210.0 353.7 1211.9 355.4 1213.8 357.3C1215.7 359.2 1217.5 361.2 1219.3 363.4C1221.1 365.5 1222.8 367.8 1224.5 370.3C1226.2 372.7 1227.8 375.3 1229.3 377.9C1230.9 380.6 1232.4 383.4 1233.8 386.3C1235.2 389.2 1236.6 392.2 1237.8 395.4C1239.1 398.5 1240.3 401.7 1241.4 405.0C1242.5 408.3 1243.6 411.6 1244.5 415.1C1245.5 418.5 1246.3 422.1 1247.1 425.6C1247.9 429.2 1248.6 432.9 1249.2 436.5C1249.8 440.2 1250.3 443.9 1250.8 447.7C1251.2 451.4 1251.5 455.2 1251.8 459.0C1252.0 462.8 1252.1 468.6 1252.2 470.5C1252.3 472.4 1252.2 468.6 1252.2 470.5Z" stroke="#22394b" stroke-width="1.375" stroke-opacity="0.97" stroke-linejoin="round" stroke-linecap="round"/>
<path d="M1168.9 629.3C1167.5 628.9 1163.3 627.9 1160.6 626.9C1157.9 625.9 1155.1 624.7 1152.5 623.3C1149.8 621.9 1147.1 620.2 1144.5 618.4C1141.9 616.6 1139.4 614.6 1136.9 612.4C1134.4 610.2 1131.9 607.9 1129.5 605.3C1127.1 602.8 1124.8 600.0 1122.6 597.1C1120.3 594.2 1118.1 591.2 1116.0 587.9C1113.9 584.7 1111.9 581.4 1110.0 577.8C1108.0 574.3 1106.2 570.7 1104.5 566.9C1102.7 563.1 1101.1 559.2 1099.5 555.2C1098.0 551.2 1096.5 547.0 1095.2 542.8C1093.8 538.6 1092.6 534.2 1091.5 529.8C1090.4 525.4 1089.4 520.9 1088.5 516.4C1087.6 511.9 1086.8 507.2 1086.2 502.6C1085.5 497.9 1085.0 493.2 1084.6 488.5C1084.2 483.8 1083.9 479.1 1083.7 474.3C1083.5 469.6 1083.5 464.8 1083.6 460.1C1083.7 455.3 1083.9 450.6 1084.2 445.9C1084.5 441.2 1085.0 436.5 1085.5 431.9C1086.1 427.2 1086.8 422.7 1087.6 418.2C1088.4 413.6 1089.3 409.2 1090.4 404.8C1091.4 400.5 1092.5 396.2 1093.8 392.0C1095.1 387.8 1096.4 383.8 1097.9 379.8C1099.4 375.8 1101.0 372.0 1102.6 368.3C1104.3 364.6 1106.1 361.0 1108.0 357.6C1109.8 354.1 1111.8 350.8 1113.8 347.7C1115.9 344.6 1118.0 341.6 1120.2 338.8C1122.4 336.0 1124.7 333.3 1127.0 330.9C1129.4 328.4 1131.8 326.1 1134.2 324.0C1136.7 322.0 1139.2 320.1 1141.8 318.4C1144.4 316.7 1147.0 315.1 1149.6 313.8C1152.3 312.5 1155.0 311.4 1157.7 310.5C1160.4 309.6 1164.6 308.8 1165.9 308.5" stroke="#22394b" stroke-width="1.125" stroke-opacity="0.72" stroke-linejoin="round" stroke-linecap="round"/>
<path d="M1161.7 631.4C1160.3 630.9 1156.0 629.3 1153.3 628.0C1150.5 626.6 1147.7 625.1 1145.0 623.3C1142.3 621.6 1139.7 619.6 1137.1 617.5C1134.5 615.3 1131.9 613.0 1129.4 610.5C1126.9 608.0 1124.5 605.3 1122.1 602.4C1119.8 599.5 1117.5 596.5 1115.3 593.3C1113.1 590.1 1111.0 586.7 1108.9 583.2C1106.9 579.7 1104.9 576.0 1103.1 572.3C1101.3 568.5 1099.5 564.6 1097.9 560.5C1096.2 556.5 1094.7 552.3 1093.2 548.1C1091.8 543.8 1090.5 539.4 1089.2 535.0C1088.0 530.6 1086.9 526.0 1085.9 521.4C1085.0 516.9 1084.1 512.2 1083.4 507.5C1082.6 502.8 1082.0 498.0 1081.5 493.2C1081.0 488.4 1080.6 483.6 1080.4 478.8C1080.2 473.9 1080.0 469.1 1080.0 464.2C1080.1 459.4 1080.2 454.5 1080.4 449.7C1080.7 444.9 1081.1 440.1 1081.6 435.4C1082.1 430.7 1082.7 426.0 1083.5 421.3C1084.3 416.7 1085.1 412.1 1086.1 407.6C1087.1 403.1 1088.2 398.7 1089.5 394.4C1090.7 390.1 1092.0 385.8 1093.5 381.7C1094.9 377.6 1096.5 373.6 1098.2 369.7C1099.8 365.9 1101.6 362.1 1103.4 358.5C1105.3 354.9 1107.3 351.4 1109.3 348.1C1111.3 344.8 1113.5 341.7 1115.7 338.7C1117.9 335.7 1120.2 332.9 1122.6 330.3C1124.9 327.6 1127.4 325.2 1129.9 322.9C1132.4 320.6 1134.9 318.5 1137.5 316.7C1140.2 314.8 1142.8 313.1 1145.5 311.6C1148.2 310.1 1152.4 308.4 1153.8 307.8" stroke="#22394b" stroke-width="1.125" stroke-opacity="0.72" stroke-linejoin="round" stroke-linecap="round"/>
<path d="M1020.0 392.0C1020.8 399.4 1023.5 423.7 1025.0 436.7C1026.5 449.7 1028.0 458.9 1029.0 470.0C1030.0 481.1 1030.7 491.6 1031.0 503.3C1031.3 515.0 1031.7 528.5 1031.0 540.0C1030.3 551.5 1027.7 566.7 1027.0 572.0" stroke="#22394b" stroke-width="1.25" stroke-opacity="0.72" stroke-linejoin="round" stroke-linecap="round"/>
<path d="M1029.2 402.0C1029.9 407.8 1031.7 425.4 1033.3 436.7C1034.9 448.0 1037.2 458.9 1039.0 470.0C1040.8 481.1 1042.8 491.6 1044.0 503.3C1045.2 515.0 1046.0 527.5 1046.5 540.0C1047.0 552.5 1046.7 571.9 1046.7 578.3" stroke="#22394b" stroke-width="1.375" stroke-opacity="0.92" stroke-linejoin="round" stroke-linecap="round"/>
<path d="M1046.7 400.0C1047.2 406.1 1048.1 425.0 1050.0 436.7C1051.9 448.4 1055.7 458.9 1058.0 470.0C1060.3 481.1 1062.8 491.6 1064.0 503.3C1065.2 515.0 1065.8 527.5 1065.5 540.0C1065.2 552.5 1063.0 571.9 1062.5 578.3" stroke="#22394b" stroke-width="1.375" stroke-opacity="0.92" stroke-linejoin="round" stroke-linecap="round"/>
<path d="M1046.7 578.3L1062.5 578.3L1064.0 586.0L1054.0 590.0L1044.0 586.0L1046.7 578.3" stroke="#22394b" stroke-width="1.125" stroke-opacity="0.72" stroke-linejoin="round" stroke-linecap="round"/>
<path d="M1046.7 578.3C1045.2 580.9 1042.5 587.9 1038.0 594.0C1033.5 600.1 1027.2 608.2 1020.0 615.0C1012.8 621.8 1003.3 629.2 995.0 635.0C986.7 640.8 979.2 645.4 970.0 650.0C960.8 654.6 950.8 659.5 940.0 662.5C929.2 665.5 916.7 668.1 905.0 668.0C893.3 667.9 880.0 665.0 870.0 662.0C860.0 659.0 852.0 654.3 845.0 650.0C838.0 645.7 830.8 638.3 828.0 636.0" stroke="#22394b" stroke-width="1.25" stroke-opacity="0.87" stroke-linejoin="round" stroke-linecap="round"/>
<path d="M1047.5 563.0C1045.4 566.7 1040.9 577.5 1035.0 585.0C1029.1 592.5 1020.3 600.8 1012.0 608.0C1003.7 615.2 994.5 622.0 985.0 628.0C975.5 634.0 965.0 639.7 955.0 644.0C945.0 648.3 930.0 652.3 925.0 654.0" stroke="#22394b" stroke-width="1.125" stroke-opacity="0.62" stroke-linejoin="round" stroke-linecap="round"/>
<path d="M1061.5 579.6C1064.9 582.3 1073.7 589.9 1081.7 595.6C1089.7 601.3 1100.2 608.5 1109.4 613.6C1118.7 618.7 1128.9 623.1 1137.2 626.1C1145.5 629.1 1151.4 630.7 1159.4 631.7C1167.4 632.7 1177.4 633.0 1185.0 632.0C1192.6 631.0 1198.3 629.7 1205.0 626.0C1211.7 622.3 1219.2 616.0 1225.0 610.0C1230.8 604.0 1235.9 596.3 1240.0 590.0C1244.1 583.7 1248.1 575.0 1249.7 572.0" stroke="#22394b" stroke-width="1.375" stroke-opacity="0.92" stroke-linejoin="round" stroke-linecap="round"/>
<path d="M1053.9 587.2C1058.5 590.9 1072.5 602.2 1081.7 609.4C1091.0 616.6 1100.2 624.5 1109.4 630.3C1118.7 636.1 1129.8 641.2 1137.2 644.2C1144.6 647.2 1147.0 648.3 1153.9 648.3C1160.9 648.3 1171.3 647.0 1178.9 644.0C1186.5 641.0 1192.9 635.0 1199.7 630.0C1206.5 625.0 1213.6 620.3 1220.0 614.0C1226.4 607.7 1233.0 599.0 1238.0 592.0C1243.0 585.0 1247.8 575.3 1249.7 572.0" stroke="#22394b" stroke-width="1.25" stroke-opacity="0.77" stroke-linejoin="round" stroke-linecap="round"/>
</g>
<path d="M1126.0 198.0C1128.3 198.8 1133.9 200.7 1140.0 202.5C1146.1 204.3 1155.0 205.9 1162.5 209.0C1170.0 212.1 1177.9 216.2 1185.0 221.0C1192.1 225.8 1198.8 231.4 1205.0 237.5C1211.2 243.6 1217.3 250.4 1222.5 257.5C1227.7 264.6 1232.1 272.5 1236.0 280.0C1239.9 287.5 1243.5 295.4 1246.0 302.5C1248.5 309.6 1249.8 317.2 1251.0 322.5C1252.2 327.8 1252.7 332.1 1253.0 334.0L1250.5 336.0C1251.2 339.2 1253.4 346.8 1255.0 355.0C1256.6 363.2 1258.3 372.5 1260.0 385.0C1261.7 397.5 1263.7 417.2 1265.0 430.0C1266.3 442.8 1267.2 452.0 1268.0 462.0C1268.8 472.0 1269.7 482.5 1270.0 490.0C1270.3 497.5 1269.6 501.2 1270.0 507.0C1270.4 512.8 1271.5 513.7 1272.5 525.0C1273.5 536.3 1274.8 558.3 1276.0 575.0C1277.2 591.7 1278.7 609.2 1280.0 625.0C1281.3 640.8 1282.6 657.5 1283.8 670.0C1284.9 682.5 1286.0 691.2 1287.0 700.0C1288.0 708.8 1289.3 716.8 1290.0 723.0C1290.7 729.2 1290.8 735.1 1291.0 737.5L1291.0 737.5C1290.0 738.4 1288.5 741.1 1285.0 743.0C1281.5 744.9 1276.7 746.9 1270.0 749.0C1263.3 751.1 1253.7 754.1 1245.0 755.5C1236.3 756.9 1225.5 757.6 1218.0 757.5C1210.5 757.4 1204.7 755.3 1200.0 755.0C1195.3 754.7 1193.0 755.0 1190.0 755.5C1187.0 756.0 1186.3 756.9 1182.0 758.3C1177.7 759.7 1171.0 761.8 1164.0 764.0C1157.0 766.2 1149.5 768.5 1140.0 771.7C1130.5 774.9 1118.2 779.4 1107.0 783.3C1095.8 787.2 1084.2 791.1 1073.0 795.0C1061.8 798.9 1049.3 803.4 1040.0 806.7C1030.7 810.0 1025.0 812.5 1017.0 815.0C1009.0 817.5 998.7 820.5 992.0 821.7C985.3 822.9 984.0 821.8 977.0 822.0C970.0 822.2 960.0 822.6 950.0 823.0C940.0 823.4 925.3 824.2 917.0 824.5C908.7 824.8 906.2 825.2 900.0 824.5C893.8 823.8 886.2 822.4 880.0 820.5C873.8 818.6 867.8 815.9 863.0 813.0C858.2 810.1 854.1 806.5 851.0 803.0C847.9 799.5 846.0 796.7 844.5 792.0C843.0 787.3 843.1 783.3 842.0 775.0C840.9 766.7 839.3 754.5 838.0 742.0C836.7 729.5 835.2 712.0 834.0 700.0C832.8 688.0 831.4 681.0 830.5 670.0C829.6 659.0 828.8 640.0 828.5 634.0L828.5 634.0C825.0 632.1 814.3 627.8 807.5 622.5C800.7 617.2 793.8 610.4 787.5 602.5C781.2 594.6 775.0 585.0 770.0 575.0C765.0 565.0 760.8 552.9 757.5 542.5C754.2 532.1 751.8 523.8 750.0 512.5C748.2 501.2 746.9 487.1 746.5 475.0C746.1 462.9 746.8 449.2 747.5 440.0C748.2 430.8 749.6 426.7 751.0 420.0C752.4 413.3 754.2 406.2 756.0 400.0C757.8 393.8 759.7 389.2 762.0 383.0C764.3 376.8 766.6 369.2 770.0 362.5C773.4 355.8 778.3 347.9 782.5 342.5C786.7 337.1 790.6 333.8 795.0 330.0C799.4 326.2 806.5 321.7 808.8 320.0L808.8 320.0C809.6 319.5 812.3 319.1 814.0 317.0C815.7 314.9 816.7 311.8 819.0 307.5C821.3 303.2 824.2 297.1 828.0 291.0C831.8 284.9 836.9 277.2 842.0 271.0C847.1 264.8 853.0 258.4 858.5 253.5C864.0 248.6 870.3 244.4 875.0 241.5C879.7 238.6 884.8 236.9 886.7 236.0L886.7 236.0C888.4 234.4 893.4 229.9 896.7 226.7C900.0 223.5 902.8 219.8 906.7 216.7C910.6 213.6 915.6 210.4 920.0 208.3C924.4 206.2 929.4 204.6 933.3 203.9C937.2 203.2 940.5 203.4 943.3 203.9C946.1 204.4 947.7 205.8 950.0 206.7C952.3 207.6 955.8 208.9 957.0 209.4L1078 178L1117.5 176L1123.5 179.5Z" stroke="#1f3546" stroke-width="1.1" stroke-opacity=".75" stroke-linejoin="round"/>
</g></svg>
<div id="tabs"></div>
<div class="abs" style="left:42px;top:1059px;width:215px;height:1.5px;background:#e4e4e4"></div>
<div class="abs" style="left:42px;top:1060px;width:40.5px;height:20px;background:#d9d9d9"></div>
<div class="abs" style="left:82.5px;top:1060px;width:209.5px;height:20px;background:#fff"></div>
<div class="abs" style="left:257px;top:1059px;width:35px;height:2px;background:#fff"></div>
<div class="abs" style="left:292px;top:1059.5px;width:210px;height:20.5px;background:#e8e8e8;border-left:1.5px solid #d4d4d4"></div>
<svg class="abs" style="left:0;top:1056px" width="520" height="24" viewBox="0 1056 520 24" fill="none">
 <path d="M51.4 1073.6H66.6M59 1066V1081" stroke="#3f3f3f" stroke-width="2"/>
 <path d="M95.6 1080V1068.2a1 1 0 0 1 1-1H100.2V1080M100.2 1068V1066a1 1 0 0 1 1-1H109a1 1 0 0 1 1 1V1080M103.4 1080V1067" stroke="#7d7d7d" stroke-width="1.3"/>
 <rect x="305.6" y="1063.6" width="16.2" height="17" rx="2" fill="#f3f3f3" stroke="#7d7d7d" stroke-width="1.3"/>
 <rect x="306.4" y="1064.4" width="11.6" height="9.6" fill="#8b8b8b"/>
 <rect x="309" y="1067" width="9" height="7" fill="#777"/>
</svg>
<div class="t" style="left:117px;top:1065.6px;font-size:14.6px;color:#3c3c3c;letter-spacing:-.25px">Part Studio 1</div>
<div class="t" style="left:328px;top:1065.6px;font-size:14.6px;color:#7a7a7a;letter-spacing:-.25px">Assembly 1</div>
<svg class="abs" style="left:1820px;top:50px" width="100" height="180" viewBox="1820 50 100 180" fill="none">
 <defs><filter id="vb" x="-20%" y="-20%" width="140%" height="140%"><feGaussianBlur stdDeviation=".7"/></filter></defs>
 <g filter="url(#vb)">
 <path d="M1858 89C1864 76 1878 69 1890 68" stroke="#e9e9e9" stroke-width="4.4" fill="none"/>
 <path d="M1856 84L1866 86L1860 93Z" fill="#e9e9e9"/>
 <path d="M1906 66L1912.6 58L1919 66Z" fill="#e6e6e6"/>
 <path d="M1906 204L1912.6 213L1919 204Z" fill="#e6e6e6"/>
 <path d="M1844.6 127.6L1834.6 135.6L1844.6 142.6Z" fill="#e6e6e6"/>
 <path d="M1867 108.6L1920 105V170.6L1872.4 170.6Z" fill="#eff2f4"/>
 <path d="M1873 112L1920 109V168L1877.6 168Z" fill="#e8ebee"/>
 <rect x="1877" y="117" width="37" height="46" rx="7" fill="#fafafa"/>
 <path d="M1903 105H1920" stroke="#d9d9d9" stroke-width="1.6"/>
 </g>
 <path d="M1866.4 111.6L1871.6 170.8" stroke="#3a4078" stroke-width="1.5"/>
 <path d="M1871.4 171.4H1920" stroke="#c94a4a" stroke-width="1.5"/>
 <path d="M1870.8 171.2L1876 169.4" stroke="#5d8a5a" stroke-width="1.2"/>
</svg>
<div class="t" style="left:1859.5px;top:92px;font-size:13px;font-weight:bold;color:#3a3f7e;transform:scaleX(.85)">Z</div>
<div class="t" style="left:1883px;top:131px;font-size:12.4px;color:#4a4a4a;transform:scaleX(.8)">Front</div>
<!-- cursor -->
<svg class="abs" style="left:1570px;top:392px" width="30" height="34" viewBox="1570 392 30 34" fill="none"><path d="M1578.8 399.6V416.6L1582.8 412.8L1585.6 418.6L1588 417.6L1585.4 411.8H1591Z" fill="#fff" stroke="#c2c2c2" stroke-width="1.1" stroke-linejoin="round"/><path d="M1578.9 399.4V416.6" stroke="#3a3a3a" stroke-width="1.9"/><path d="M1584.6 413.6L1586.8 418" stroke="#b0b0b0" stroke-width="1.6"/></svg>
<!-- bottom-right tiny icon -->
<svg class="abs" style="left:1900px;top:1034px" width="20" height="22" viewBox="1900 1034 20 22" fill="none"><circle cx="1916" cy="1043.4" r="5" fill="#cfcfcf" stroke="#8a8a8a" stroke-width="1"/><path d="M1905 1046.4H1920V1051H1905Z" fill="#6a6a6a"/><path d="M1906 1048.6H1920" stroke="#e6e6e6" stroke-width="1.1"/></svg>
</body></html>
